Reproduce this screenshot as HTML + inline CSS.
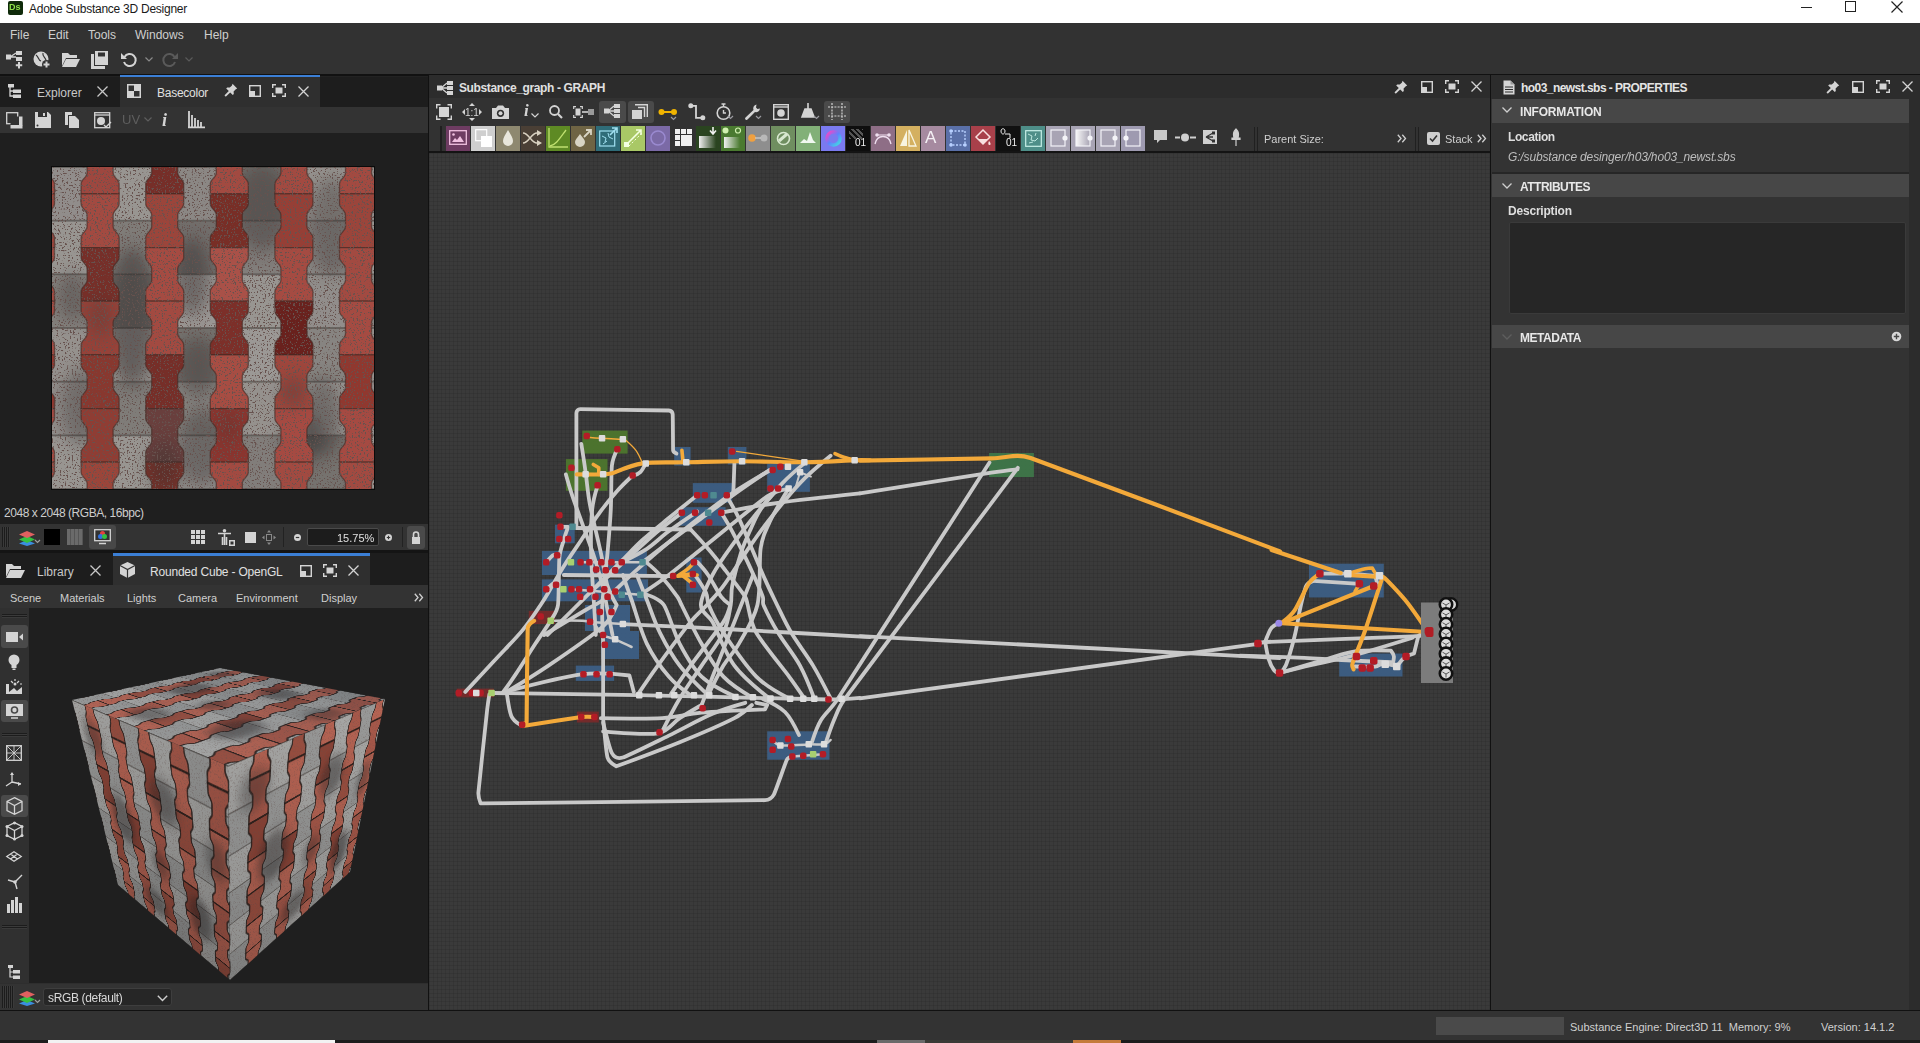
<!DOCTYPE html>
<html><head><meta charset="utf-8">
<style>
*{margin:0;padding:0;box-sizing:border-box}
html,body{width:1920px;height:1043px;overflow:hidden;background:#2e2e2e;font-family:"Liberation Sans",sans-serif;color:#d2d2d2}
.a{position:absolute}
.t{position:absolute;white-space:nowrap;font-size:12px;line-height:14px}
svg{position:absolute;overflow:visible}
</style></head><body>
<svg width="0" height="0" style="position:absolute;left:0;top:0"><defs>
<filter id="spk" x="0" y="0" width="100%" height="100%"><feTurbulence type="fractalNoise" baseFrequency="0.6" numOctaves="2" seed="3" result="n"/><feColorMatrix in="n" type="matrix" values="0 0 0 0 0.16  0 0 0 0 0.1  0 0 0 0 0.09  -11 0 0 0 4.5" result="m"/><feGaussianBlur in="m" stdDeviation="0.55"/></filter>
<filter id="spk2" x="0" y="0" width="100%" height="100%"><feTurbulence type="fractalNoise" baseFrequency="0.85" numOctaves="2" seed="8" result="n"/><feColorMatrix in="n" type="matrix" values="0 0 0 0 1  0 0 0 0 0.9  0 0 0 0 0.85  9 0 0 0 -5.2" result="m"/><feGaussianBlur in="m" stdDeviation="0.4"/></filter>
<filter id="blur8" x="-50%" y="-50%" width="200%" height="200%"><feGaussianBlur stdDeviation="8"/></filter>
<g id="texg"><rect x="-16.5" y="0.0" width="64.6" height="54.2" fill="#9e9a97"/>
<rect x="-16.5" y="53.7" width="64.6" height="54.2" fill="#a5a29e"/>
<rect x="-16.5" y="107.3" width="64.6" height="54.2" fill="#908c88"/>
<rect x="-16.5" y="161.0" width="64.6" height="54.2" fill="#a29e9a"/>
<rect x="-16.5" y="214.7" width="64.6" height="54.2" fill="#9e9a97"/>
<rect x="-16.5" y="268.4" width="64.6" height="54.2" fill="#a5a29e"/>
<rect x="-16.5" y="322.0" width="64.6" height="54.2" fill="#9e9a97"/>
<rect x="48.1" y="0.0" width="64.6" height="54.2" fill="#a5a29e"/>
<rect x="48.1" y="53.7" width="64.6" height="54.2" fill="#8a8783"/>
<rect x="48.1" y="107.3" width="64.6" height="54.2" fill="#7e7a76"/>
<rect x="48.1" y="161.0" width="64.6" height="54.2" fill="#a29e9a"/>
<rect x="48.1" y="214.7" width="64.6" height="54.2" fill="#8a8783"/>
<rect x="48.1" y="268.4" width="64.6" height="54.2" fill="#a5a29e"/>
<rect x="48.1" y="322.0" width="64.6" height="54.2" fill="#a5a29e"/>
<rect x="112.7" y="0.0" width="64.6" height="54.2" fill="#979390"/>
<rect x="112.7" y="53.7" width="64.6" height="54.2" fill="#7c7875"/>
<rect x="112.7" y="107.3" width="64.6" height="54.2" fill="#a9a5a2"/>
<rect x="112.7" y="161.0" width="64.6" height="54.2" fill="#7f7c78"/>
<rect x="112.7" y="214.7" width="64.6" height="54.2" fill="#93908c"/>
<rect x="112.7" y="268.4" width="64.6" height="54.2" fill="#9e9a97"/>
<rect x="112.7" y="322.0" width="64.6" height="54.2" fill="#979390"/>
<rect x="177.3" y="0.0" width="64.6" height="54.2" fill="#7f7c78"/>
<rect x="177.3" y="53.7" width="64.6" height="54.2" fill="#8c8885"/>
<rect x="177.3" y="107.3" width="64.6" height="54.2" fill="#a5a29e"/>
<rect x="177.3" y="161.0" width="64.6" height="54.2" fill="#a9a5a2"/>
<rect x="177.3" y="214.7" width="64.6" height="54.2" fill="#a29e9a"/>
<rect x="177.3" y="268.4" width="64.6" height="54.2" fill="#8c8885"/>
<rect x="177.3" y="322.0" width="64.6" height="54.2" fill="#7f7c78"/>
<rect x="241.9" y="0.0" width="64.6" height="54.2" fill="#a29e9a"/>
<rect x="241.9" y="53.7" width="64.6" height="54.2" fill="#979390"/>
<rect x="241.9" y="107.3" width="64.6" height="54.2" fill="#9e9a97"/>
<rect x="241.9" y="161.0" width="64.6" height="54.2" fill="#93908c"/>
<rect x="241.9" y="214.7" width="64.6" height="54.2" fill="#a5a29e"/>
<rect x="241.9" y="268.4" width="64.6" height="54.2" fill="#7f7c78"/>
<rect x="241.9" y="322.0" width="64.6" height="54.2" fill="#a29e9a"/>
<rect x="306.5" y="0.0" width="64.6" height="54.2" fill="#9e9a97"/>
<rect x="306.5" y="53.7" width="64.6" height="54.2" fill="#a5a29e"/>
<rect x="306.5" y="107.3" width="64.6" height="54.2" fill="#908c88"/>
<rect x="306.5" y="161.0" width="64.6" height="54.2" fill="#a29e9a"/>
<rect x="306.5" y="214.7" width="64.6" height="54.2" fill="#9e9a97"/>
<rect x="306.5" y="268.4" width="64.6" height="54.2" fill="#a5a29e"/>
<rect x="306.5" y="322.0" width="64.6" height="54.2" fill="#9e9a97"/>
<rect x="0" y="-0.9" width="322" height="1.8" fill="#5e5a56" opacity="0.75"/>
<rect x="0" y="52.8" width="322" height="1.8" fill="#5e5a56" opacity="0.75"/>
<rect x="0" y="106.4" width="322" height="1.8" fill="#5e5a56" opacity="0.75"/>
<rect x="0" y="160.1" width="322" height="1.8" fill="#5e5a56" opacity="0.75"/>
<rect x="0" y="213.8" width="322" height="1.8" fill="#5e5a56" opacity="0.75"/>
<rect x="0" y="267.5" width="322" height="1.8" fill="#5e5a56" opacity="0.75"/>
<rect x="0" y="321.1" width="322" height="1.8" fill="#5e5a56" opacity="0.75"/>
<ellipse cx="80" cy="150" rx="25" ry="70" fill="#2a2826" opacity="0.45" filter="url(#blur8)"/>
<ellipse cx="140" cy="110" rx="18" ry="40" fill="#2a2826" opacity="0.4" filter="url(#blur8)"/>
<ellipse cx="210" cy="40" rx="30" ry="45" fill="#2a2826" opacity="0.35" filter="url(#blur8)"/>
<ellipse cx="146" cy="200" rx="22" ry="30" fill="#2a2826" opacity="0.35" filter="url(#blur8)"/>
<ellipse cx="270" cy="250" rx="20" ry="40" fill="#2a2826" opacity="0.35" filter="url(#blur8)"/>
<ellipse cx="30" cy="240" rx="22" ry="40" fill="#2a2826" opacity="0.3" filter="url(#blur8)"/>
<ellipse cx="150" cy="280" rx="25" ry="40" fill="#2a2826" opacity="0.35" filter="url(#blur8)"/>
<ellipse cx="280" cy="60" rx="25" ry="50" fill="#2a2826" opacity="0.3" filter="url(#blur8)"/>
<ellipse cx="250" cy="270" rx="20" ry="25" fill="#2a2826" opacity="0.4" filter="url(#blur8)"/>
<ellipse cx="20" cy="130" rx="15" ry="25" fill="#2a2826" opacity="0.3" filter="url(#blur8)"/>
<polygon points="2.5,-26.8 2.5,-16.8 2.1,-14.9 1.0,-13.1 -0.5,-11.3 -2.0,-9.4 -3.1,-7.6 -3.5,-5.8 -3.5,5.9 -3.1,7.7 -2.0,9.6 -0.5,11.4 1.0,13.2 2.1,15.1 2.5,16.9 2.5,26.9 -35.5,26.9 -35.5,16.9 -35.1,15.1 -34.0,13.2 -32.5,11.4 -31.0,9.6 -29.9,7.7 -29.5,5.9 -29.5,-5.8 -29.9,-7.6 -31.0,-9.4 -32.5,-11.3 -34.0,-13.1 -35.1,-14.9 -35.5,-16.8 -35.5,-26.8" fill="#b05147" stroke="#4a2e28" stroke-width="1.3" stroke-opacity="0.65"/>
<polygon points="2.5,26.9 2.5,36.9 2.1,38.7 1.0,40.6 -0.5,42.4 -2.0,44.2 -3.1,46.1 -3.5,47.9 -3.5,59.6 -3.1,61.4 -2.0,63.2 -0.5,65.1 1.0,66.9 2.1,68.7 2.5,70.6 2.5,80.6 -35.5,80.6 -35.5,70.6 -35.1,68.7 -34.0,66.9 -32.5,65.1 -31.0,63.2 -29.9,61.4 -29.5,59.6 -29.5,47.9 -29.9,46.1 -31.0,44.2 -32.5,42.4 -34.0,40.6 -35.1,38.7 -35.5,36.9 -35.5,26.9" fill="#a94b41" stroke="#4a2e28" stroke-width="1.3" stroke-opacity="0.65"/>
<polygon points="2.5,80.6 2.5,90.6 2.1,92.4 1.0,94.2 -0.5,96.1 -2.0,97.9 -3.1,99.7 -3.5,101.6 -3.5,113.2 -3.1,115.1 -2.0,116.9 -0.5,118.7 1.0,120.6 2.1,122.4 2.5,124.2 2.5,134.2 -35.5,134.2 -35.5,124.2 -35.1,122.4 -34.0,120.6 -32.5,118.7 -31.0,116.9 -29.9,115.1 -29.5,113.2 -29.5,101.6 -29.9,99.7 -31.0,97.9 -32.5,96.1 -34.0,94.2 -35.1,92.4 -35.5,90.6 -35.5,80.6" fill="#b05147" stroke="#4a2e28" stroke-width="1.3" stroke-opacity="0.65"/>
<polygon points="2.5,134.2 2.5,144.2 2.1,146.1 1.0,147.9 -0.5,149.7 -2.0,151.6 -3.1,153.4 -3.5,155.2 -3.5,166.9 -3.1,168.7 -2.0,170.6 -0.5,172.4 1.0,174.2 2.1,176.1 2.5,177.9 2.5,187.9 -35.5,187.9 -35.5,177.9 -35.1,176.1 -34.0,174.2 -32.5,172.4 -31.0,170.6 -29.9,168.7 -29.5,166.9 -29.5,155.2 -29.9,153.4 -31.0,151.6 -32.5,149.7 -34.0,147.9 -35.1,146.1 -35.5,144.2 -35.5,134.2" fill="#b45248" stroke="#4a2e28" stroke-width="1.3" stroke-opacity="0.65"/>
<polygon points="2.5,187.9 2.5,197.9 2.1,199.7 1.0,201.6 -0.5,203.4 -2.0,205.2 -3.1,207.1 -3.5,208.9 -3.5,220.6 -3.1,222.4 -2.0,224.2 -0.5,226.1 1.0,227.9 2.1,229.7 2.5,231.6 2.5,241.6 -35.5,241.6 -35.5,231.6 -35.1,229.7 -34.0,227.9 -32.5,226.1 -31.0,224.2 -29.9,222.4 -29.5,220.6 -29.5,208.9 -29.9,207.1 -31.0,205.2 -32.5,203.4 -34.0,201.6 -35.1,199.7 -35.5,197.9 -35.5,187.9" fill="#9d3d34" stroke="#4a2e28" stroke-width="1.3" stroke-opacity="0.65"/>
<polygon points="2.5,241.6 2.5,251.6 2.1,253.4 1.0,255.2 -0.5,257.1 -2.0,258.9 -3.1,260.7 -3.5,262.6 -3.5,274.2 -3.1,276.1 -2.0,277.9 -0.5,279.8 1.0,281.6 2.1,283.4 2.5,285.2 2.5,295.2 -35.5,295.2 -35.5,285.2 -35.1,283.4 -34.0,281.6 -32.5,279.8 -31.0,277.9 -29.9,276.1 -29.5,274.2 -29.5,262.6 -29.9,260.7 -31.0,258.9 -32.5,257.1 -34.0,255.2 -35.1,253.4 -35.5,251.6 -35.5,241.6" fill="#b45148" stroke="#4a2e28" stroke-width="1.3" stroke-opacity="0.65"/>
<polygon points="2.5,295.2 2.5,305.2 2.1,307.1 1.0,308.9 -0.5,310.8 -2.0,312.6 -3.1,314.4 -3.5,316.2 -3.5,327.9 -3.1,329.8 -2.0,331.6 -0.5,333.4 1.0,335.3 2.1,337.1 2.5,338.9 2.5,348.9 -35.5,348.9 -35.5,338.9 -35.1,337.1 -34.0,335.3 -32.5,333.4 -31.0,331.6 -29.9,329.8 -29.5,327.9 -29.5,316.2 -29.9,314.4 -31.0,312.6 -32.5,310.8 -34.0,308.9 -35.1,307.1 -35.5,305.2 -35.5,295.2" fill="#b05147" stroke="#4a2e28" stroke-width="1.3" stroke-opacity="0.65"/>
<polygon points="2.5,348.9 2.5,358.9 2.1,360.8 1.0,362.6 -0.5,364.4 -2.0,366.3 -3.1,368.1 -3.5,369.9 -3.5,381.6 -3.1,383.4 -2.0,385.3 -0.5,387.1 1.0,388.9 2.1,390.8 2.5,392.6 2.5,402.6 -35.5,402.6 -35.5,392.6 -35.1,390.8 -34.0,388.9 -32.5,387.1 -31.0,385.3 -29.9,383.4 -29.5,381.6 -29.5,369.9 -29.9,368.1 -31.0,366.3 -32.5,364.4 -34.0,362.6 -35.1,360.8 -35.5,358.9 -35.5,348.9" fill="#b05147" stroke="#4a2e28" stroke-width="1.3" stroke-opacity="0.65"/>
<polygon points="67.1,-26.8 67.1,-16.8 66.7,-14.9 65.6,-13.1 64.1,-11.3 62.6,-9.4 61.5,-7.6 61.1,-5.8 61.1,5.9 61.5,7.7 62.6,9.6 64.1,11.4 65.6,13.2 66.7,15.1 67.1,16.9 67.1,26.9 29.1,26.9 29.1,16.9 29.5,15.1 30.6,13.2 32.1,11.4 33.6,9.6 34.7,7.7 35.1,5.9 35.1,-5.8 34.7,-7.6 33.6,-9.4 32.1,-11.3 30.6,-13.1 29.5,-14.9 29.1,-16.8 29.1,-26.8" fill="#ac4e45" stroke="#4a2e28" stroke-width="1.3" stroke-opacity="0.65"/>
<polygon points="67.1,26.9 67.1,36.9 66.7,38.7 65.6,40.6 64.1,42.4 62.6,44.2 61.5,46.1 61.1,47.9 61.1,59.6 61.5,61.4 62.6,63.2 64.1,65.1 65.6,66.9 66.7,68.7 67.1,70.6 67.1,80.6 29.1,80.6 29.1,70.6 29.5,68.7 30.6,66.9 32.1,65.1 33.6,63.2 34.7,61.4 35.1,59.6 35.1,47.9 34.7,46.1 33.6,44.2 32.1,42.4 30.6,40.6 29.5,38.7 29.1,36.9 29.1,26.9" fill="#b05147" stroke="#4a2e28" stroke-width="1.3" stroke-opacity="0.65"/>
<polygon points="67.1,80.6 67.1,90.6 66.7,92.4 65.6,94.2 64.1,96.1 62.6,97.9 61.5,99.7 61.1,101.6 61.1,113.2 61.5,115.1 62.6,116.9 64.1,118.7 65.6,120.6 66.7,122.4 67.1,124.2 67.1,134.2 29.1,134.2 29.1,124.2 29.5,122.4 30.6,120.6 32.1,118.7 33.6,116.9 34.7,115.1 35.1,113.2 35.1,101.6 34.7,99.7 33.6,97.9 32.1,96.1 30.6,94.2 29.5,92.4 29.1,90.6 29.1,80.6" fill="#81342d" stroke="#4a2e28" stroke-width="1.3" stroke-opacity="0.65"/>
<polygon points="67.1,134.2 67.1,144.2 66.7,146.1 65.6,147.9 64.1,149.7 62.6,151.6 61.5,153.4 61.1,155.2 61.1,166.9 61.5,168.7 62.6,170.6 64.1,172.4 65.6,174.2 66.7,176.1 67.1,177.9 67.1,187.9 29.1,187.9 29.1,177.9 29.5,176.1 30.6,174.2 32.1,172.4 33.6,170.6 34.7,168.7 35.1,166.9 35.1,155.2 34.7,153.4 33.6,151.6 32.1,149.7 30.6,147.9 29.5,146.1 29.1,144.2 29.1,134.2" fill="#a3483e" stroke="#4a2e28" stroke-width="1.3" stroke-opacity="0.65"/>
<polygon points="67.1,187.9 67.1,197.9 66.7,199.7 65.6,201.6 64.1,203.4 62.6,205.2 61.5,207.1 61.1,208.9 61.1,220.6 61.5,222.4 62.6,224.2 64.1,226.1 65.6,227.9 66.7,229.7 67.1,231.6 67.1,241.6 29.1,241.6 29.1,231.6 29.5,229.7 30.6,227.9 32.1,226.1 33.6,224.2 34.7,222.4 35.1,220.6 35.1,208.9 34.7,207.1 33.6,205.2 32.1,203.4 30.6,201.6 29.5,199.7 29.1,197.9 29.1,187.9" fill="#943d34" stroke="#4a2e28" stroke-width="1.3" stroke-opacity="0.65"/>
<polygon points="67.1,241.6 67.1,251.6 66.7,253.4 65.6,255.2 64.1,257.1 62.6,258.9 61.5,260.7 61.1,262.6 61.1,274.2 61.5,276.1 62.6,277.9 64.1,279.8 65.6,281.6 66.7,283.4 67.1,285.2 67.1,295.2 29.1,295.2 29.1,285.2 29.5,283.4 30.6,281.6 32.1,279.8 33.6,277.9 34.7,276.1 35.1,274.2 35.1,262.6 34.7,260.7 33.6,258.9 32.1,257.1 30.6,255.2 29.5,253.4 29.1,251.6 29.1,241.6" fill="#9c4339" stroke="#4a2e28" stroke-width="1.3" stroke-opacity="0.65"/>
<polygon points="67.1,295.2 67.1,305.2 66.7,307.1 65.6,308.9 64.1,310.8 62.6,312.6 61.5,314.4 61.1,316.2 61.1,327.9 61.5,329.8 62.6,331.6 64.1,333.4 65.6,335.3 66.7,337.1 67.1,338.9 67.1,348.9 29.1,348.9 29.1,338.9 29.5,337.1 30.6,335.3 32.1,333.4 33.6,331.6 34.7,329.8 35.1,327.9 35.1,316.2 34.7,314.4 33.6,312.6 32.1,310.8 30.6,308.9 29.5,307.1 29.1,305.2 29.1,295.2" fill="#a94b3f" stroke="#4a2e28" stroke-width="1.3" stroke-opacity="0.65"/>
<polygon points="67.1,348.9 67.1,358.9 66.7,360.8 65.6,362.6 64.1,364.4 62.6,366.3 61.5,368.1 61.1,369.9 61.1,381.6 61.5,383.4 62.6,385.3 64.1,387.1 65.6,388.9 66.7,390.8 67.1,392.6 67.1,402.6 29.1,402.6 29.1,392.6 29.5,390.8 30.6,388.9 32.1,387.1 33.6,385.3 34.7,383.4 35.1,381.6 35.1,369.9 34.7,368.1 33.6,366.3 32.1,364.4 30.6,362.6 29.5,360.8 29.1,358.9 29.1,348.9" fill="#ac4e45" stroke="#4a2e28" stroke-width="1.3" stroke-opacity="0.65"/>
<polygon points="131.7,-26.8 131.7,-16.8 131.3,-14.9 130.2,-13.1 128.7,-11.3 127.2,-9.4 126.1,-7.6 125.7,-5.8 125.7,5.9 126.1,7.7 127.2,9.6 128.7,11.4 130.2,13.2 131.3,15.1 131.7,16.9 131.7,26.9 93.7,26.9 93.7,16.9 94.1,15.1 95.2,13.2 96.7,11.4 98.2,9.6 99.3,7.7 99.7,5.9 99.7,-5.8 99.3,-7.6 98.2,-9.4 96.7,-11.3 95.2,-13.1 94.1,-14.9 93.7,-16.8 93.7,-26.8" fill="#81322c" stroke="#4a2e28" stroke-width="1.3" stroke-opacity="0.65"/>
<polygon points="131.7,26.9 131.7,36.9 131.3,38.7 130.2,40.6 128.7,42.4 127.2,44.2 126.1,46.1 125.7,47.9 125.7,59.6 126.1,61.4 127.2,63.2 128.7,65.1 130.2,66.9 131.3,68.7 131.7,70.6 131.7,80.6 93.7,80.6 93.7,70.6 94.1,68.7 95.2,66.9 96.7,65.1 98.2,63.2 99.3,61.4 99.7,59.6 99.7,47.9 99.3,46.1 98.2,44.2 96.7,42.4 95.2,40.6 94.1,38.7 93.7,36.9 93.7,26.9" fill="#a94b41" stroke="#4a2e28" stroke-width="1.3" stroke-opacity="0.65"/>
<polygon points="131.7,80.6 131.7,90.6 131.3,92.4 130.2,94.2 128.7,96.1 127.2,97.9 126.1,99.7 125.7,101.6 125.7,113.2 126.1,115.1 127.2,116.9 128.7,118.7 130.2,120.6 131.3,122.4 131.7,124.2 131.7,134.2 93.7,134.2 93.7,124.2 94.1,122.4 95.2,120.6 96.7,118.7 98.2,116.9 99.3,115.1 99.7,113.2 99.7,101.6 99.3,99.7 98.2,97.9 96.7,96.1 95.2,94.2 94.1,92.4 93.7,90.6 93.7,80.6" fill="#b45248" stroke="#4a2e28" stroke-width="1.3" stroke-opacity="0.65"/>
<polygon points="131.7,134.2 131.7,144.2 131.3,146.1 130.2,147.9 128.7,149.7 127.2,151.6 126.1,153.4 125.7,155.2 125.7,166.9 126.1,168.7 127.2,170.6 128.7,172.4 130.2,174.2 131.3,176.1 131.7,177.9 131.7,187.9 93.7,187.9 93.7,177.9 94.1,176.1 95.2,174.2 96.7,172.4 98.2,170.6 99.3,168.7 99.7,166.9 99.7,155.2 99.3,153.4 98.2,151.6 96.7,149.7 95.2,147.9 94.1,146.1 93.7,144.2 93.7,134.2" fill="#b05147" stroke="#4a2e28" stroke-width="1.3" stroke-opacity="0.65"/>
<polygon points="131.7,187.9 131.7,197.9 131.3,199.7 130.2,201.6 128.7,203.4 127.2,205.2 126.1,207.1 125.7,208.9 125.7,220.6 126.1,222.4 127.2,224.2 128.7,226.1 130.2,227.9 131.3,229.7 131.7,231.6 131.7,241.6 93.7,241.6 93.7,231.6 94.1,229.7 95.2,227.9 96.7,226.1 98.2,224.2 99.3,222.4 99.7,220.6 99.7,208.9 99.3,207.1 98.2,205.2 96.7,203.4 95.2,201.6 94.1,199.7 93.7,197.9 93.7,187.9" fill="#81322c" stroke="#4a2e28" stroke-width="1.3" stroke-opacity="0.65"/>
<polygon points="131.7,241.6 131.7,251.6 131.3,253.4 130.2,255.2 128.7,257.1 127.2,258.9 126.1,260.7 125.7,262.6 125.7,274.2 126.1,276.1 127.2,277.9 128.7,279.8 130.2,281.6 131.3,283.4 131.7,285.2 131.7,295.2 93.7,295.2 93.7,285.2 94.1,283.4 95.2,281.6 96.7,279.8 98.2,277.9 99.3,276.1 99.7,274.2 99.7,262.6 99.3,260.7 98.2,258.9 96.7,257.1 95.2,255.2 94.1,253.4 93.7,251.6 93.7,241.6" fill="#724543" stroke="#4a2e28" stroke-width="1.3" stroke-opacity="0.65"/>
<polygon points="131.7,295.2 131.7,305.2 131.3,307.1 130.2,308.9 128.7,310.8 127.2,312.6 126.1,314.4 125.7,316.2 125.7,327.9 126.1,329.8 127.2,331.6 128.7,333.4 130.2,335.3 131.3,337.1 131.7,338.9 131.7,348.9 93.7,348.9 93.7,338.9 94.1,337.1 95.2,335.3 96.7,333.4 98.2,331.6 99.3,329.8 99.7,327.9 99.7,316.2 99.3,314.4 98.2,312.6 96.7,310.8 95.2,308.9 94.1,307.1 93.7,305.2 93.7,295.2" fill="#85362d" stroke="#4a2e28" stroke-width="1.3" stroke-opacity="0.65"/>
<polygon points="131.7,348.9 131.7,358.9 131.3,360.8 130.2,362.6 128.7,364.4 127.2,366.3 126.1,368.1 125.7,369.9 125.7,381.6 126.1,383.4 127.2,385.3 128.7,387.1 130.2,388.9 131.3,390.8 131.7,392.6 131.7,402.6 93.7,402.6 93.7,392.6 94.1,390.8 95.2,388.9 96.7,387.1 98.2,385.3 99.3,383.4 99.7,381.6 99.7,369.9 99.3,368.1 98.2,366.3 96.7,364.4 95.2,362.6 94.1,360.8 93.7,358.9 93.7,348.9" fill="#81322c" stroke="#4a2e28" stroke-width="1.3" stroke-opacity="0.65"/>
<polygon points="196.3,-26.8 196.3,-16.8 195.9,-14.9 194.8,-13.1 193.3,-11.3 191.8,-9.4 190.7,-7.6 190.3,-5.8 190.3,5.9 190.7,7.7 191.8,9.6 193.3,11.4 194.8,13.2 195.9,15.1 196.3,16.9 196.3,26.9 158.3,26.9 158.3,16.9 158.7,15.1 159.8,13.2 161.3,11.4 162.8,9.6 163.9,7.7 164.3,5.9 164.3,-5.8 163.9,-7.6 162.8,-9.4 161.3,-11.3 159.8,-13.1 158.7,-14.9 158.3,-16.8 158.3,-26.8" fill="#b05147" stroke="#4a2e28" stroke-width="1.3" stroke-opacity="0.65"/>
<polygon points="196.3,26.9 196.3,36.9 195.9,38.7 194.8,40.6 193.3,42.4 191.8,44.2 190.7,46.1 190.3,47.9 190.3,59.6 190.7,61.4 191.8,63.2 193.3,65.1 194.8,66.9 195.9,68.7 196.3,70.6 196.3,80.6 158.3,80.6 158.3,70.6 158.7,68.7 159.8,66.9 161.3,65.1 162.8,63.2 163.9,61.4 164.3,59.6 164.3,47.9 163.9,46.1 162.8,44.2 161.3,42.4 159.8,40.6 158.7,38.7 158.3,36.9 158.3,26.9" fill="#83322a" stroke="#4a2e28" stroke-width="1.3" stroke-opacity="0.65"/>
<polygon points="196.3,80.6 196.3,90.6 195.9,92.4 194.8,94.2 193.3,96.1 191.8,97.9 190.7,99.7 190.3,101.6 190.3,113.2 190.7,115.1 191.8,116.9 193.3,118.7 194.8,120.6 195.9,122.4 196.3,124.2 196.3,134.2 158.3,134.2 158.3,124.2 158.7,122.4 159.8,120.6 161.3,118.7 162.8,116.9 163.9,115.1 164.3,113.2 164.3,101.6 163.9,99.7 162.8,97.9 161.3,96.1 159.8,94.2 158.7,92.4 158.3,90.6 158.3,80.6" fill="#b8584f" stroke="#4a2e28" stroke-width="1.3" stroke-opacity="0.65"/>
<polygon points="196.3,134.2 196.3,144.2 195.9,146.1 194.8,147.9 193.3,149.7 191.8,151.6 190.7,153.4 190.3,155.2 190.3,166.9 190.7,168.7 191.8,170.6 193.3,172.4 194.8,174.2 195.9,176.1 196.3,177.9 196.3,187.9 158.3,187.9 158.3,177.9 158.7,176.1 159.8,174.2 161.3,172.4 162.8,170.6 163.9,168.7 164.3,166.9 164.3,155.2 163.9,153.4 162.8,151.6 161.3,149.7 159.8,147.9 158.7,146.1 158.3,144.2 158.3,134.2" fill="#87342d" stroke="#4a2e28" stroke-width="1.3" stroke-opacity="0.65"/>
<polygon points="196.3,187.9 196.3,197.9 195.9,199.7 194.8,201.6 193.3,203.4 191.8,205.2 190.7,207.1 190.3,208.9 190.3,220.6 190.7,222.4 191.8,224.2 193.3,226.1 194.8,227.9 195.9,229.7 196.3,231.6 196.3,241.6 158.3,241.6 158.3,231.6 158.7,229.7 159.8,227.9 161.3,226.1 162.8,224.2 163.9,222.4 164.3,220.6 164.3,208.9 163.9,207.1 162.8,205.2 161.3,203.4 159.8,201.6 158.7,199.7 158.3,197.9 158.3,187.9" fill="#b65449" stroke="#4a2e28" stroke-width="1.3" stroke-opacity="0.65"/>
<polygon points="196.3,241.6 196.3,251.6 195.9,253.4 194.8,255.2 193.3,257.1 191.8,258.9 190.7,260.7 190.3,262.6 190.3,274.2 190.7,276.1 191.8,277.9 193.3,279.8 194.8,281.6 195.9,283.4 196.3,285.2 196.3,295.2 158.3,295.2 158.3,285.2 158.7,283.4 159.8,281.6 161.3,279.8 162.8,277.9 163.9,276.1 164.3,274.2 164.3,262.6 163.9,260.7 162.8,258.9 161.3,257.1 159.8,255.2 158.7,253.4 158.3,251.6 158.3,241.6" fill="#963a33" stroke="#4a2e28" stroke-width="1.3" stroke-opacity="0.65"/>
<polygon points="196.3,295.2 196.3,305.2 195.9,307.1 194.8,308.9 193.3,310.8 191.8,312.6 190.7,314.4 190.3,316.2 190.3,327.9 190.7,329.8 191.8,331.6 193.3,333.4 194.8,335.3 195.9,337.1 196.3,338.9 196.3,348.9 158.3,348.9 158.3,338.9 158.7,337.1 159.8,335.3 161.3,333.4 162.8,331.6 163.9,329.8 164.3,327.9 164.3,316.2 163.9,314.4 162.8,312.6 161.3,310.8 159.8,308.9 158.7,307.1 158.3,305.2 158.3,295.2" fill="#b05147" stroke="#4a2e28" stroke-width="1.3" stroke-opacity="0.65"/>
<polygon points="196.3,348.9 196.3,358.9 195.9,360.8 194.8,362.6 193.3,364.4 191.8,366.3 190.7,368.1 190.3,369.9 190.3,381.6 190.7,383.4 191.8,385.3 193.3,387.1 194.8,388.9 195.9,390.8 196.3,392.6 196.3,402.6 158.3,402.6 158.3,392.6 158.7,390.8 159.8,388.9 161.3,387.1 162.8,385.3 163.9,383.4 164.3,381.6 164.3,369.9 163.9,368.1 162.8,366.3 161.3,364.4 159.8,362.6 158.7,360.8 158.3,358.9 158.3,348.9" fill="#b05147" stroke="#4a2e28" stroke-width="1.3" stroke-opacity="0.65"/>
<polygon points="260.9,-26.8 260.9,-16.8 260.5,-14.9 259.4,-13.1 257.9,-11.3 256.4,-9.4 255.3,-7.6 254.9,-5.8 254.9,5.9 255.3,7.7 256.4,9.6 257.9,11.4 259.4,13.2 260.5,15.1 260.9,16.9 260.9,26.9 222.9,26.9 222.9,16.9 223.3,15.1 224.4,13.2 225.9,11.4 227.4,9.6 228.5,7.7 228.9,5.9 228.9,-5.8 228.5,-7.6 227.4,-9.4 225.9,-11.3 224.4,-13.1 223.3,-14.9 222.9,-16.8 222.9,-26.8" fill="#b05147" stroke="#4a2e28" stroke-width="1.3" stroke-opacity="0.65"/>
<polygon points="260.9,26.9 260.9,36.9 260.5,38.7 259.4,40.6 257.9,42.4 256.4,44.2 255.3,46.1 254.9,47.9 254.9,59.6 255.3,61.4 256.4,63.2 257.9,65.1 259.4,66.9 260.5,68.7 260.9,70.6 260.9,80.6 222.9,80.6 222.9,70.6 223.3,68.7 224.4,66.9 225.9,65.1 227.4,63.2 228.5,61.4 228.9,59.6 228.9,47.9 228.5,46.1 227.4,44.2 225.9,42.4 224.4,40.6 223.3,38.7 222.9,36.9 222.9,26.9" fill="#a3453b" stroke="#4a2e28" stroke-width="1.3" stroke-opacity="0.65"/>
<polygon points="260.9,80.6 260.9,90.6 260.5,92.4 259.4,94.2 257.9,96.1 256.4,97.9 255.3,99.7 254.9,101.6 254.9,113.2 255.3,115.1 256.4,116.9 257.9,118.7 259.4,120.6 260.5,122.4 260.9,124.2 260.9,134.2 222.9,134.2 222.9,124.2 223.3,122.4 224.4,120.6 225.9,118.7 227.4,116.9 228.5,115.1 228.9,113.2 228.9,101.6 228.5,99.7 227.4,97.9 225.9,96.1 224.4,94.2 223.3,92.4 222.9,90.6 222.9,80.6" fill="#b45248" stroke="#4a2e28" stroke-width="1.3" stroke-opacity="0.65"/>
<polygon points="260.9,134.2 260.9,144.2 260.5,146.1 259.4,147.9 257.9,149.7 256.4,151.6 255.3,153.4 254.9,155.2 254.9,166.9 255.3,168.7 256.4,170.6 257.9,172.4 259.4,174.2 260.5,176.1 260.9,177.9 260.9,187.9 222.9,187.9 222.9,177.9 223.3,176.1 224.4,174.2 225.9,172.4 227.4,170.6 228.5,168.7 228.9,166.9 228.9,155.2 228.5,153.4 227.4,151.6 225.9,149.7 224.4,147.9 223.3,146.1 222.9,144.2 222.9,134.2" fill="#722420" stroke="#4a2e28" stroke-width="1.3" stroke-opacity="0.65"/>
<polygon points="260.9,187.9 260.9,197.9 260.5,199.7 259.4,201.6 257.9,203.4 256.4,205.2 255.3,207.1 254.9,208.9 254.9,220.6 255.3,222.4 256.4,224.2 257.9,226.1 259.4,227.9 260.5,229.7 260.9,231.6 260.9,241.6 222.9,241.6 222.9,231.6 223.3,229.7 224.4,227.9 225.9,226.1 227.4,224.2 228.5,222.4 228.9,220.6 228.9,208.9 228.5,207.1 227.4,205.2 225.9,203.4 224.4,201.6 223.3,199.7 222.9,197.9 222.9,187.9" fill="#ac4d43" stroke="#4a2e28" stroke-width="1.3" stroke-opacity="0.65"/>
<polygon points="260.9,241.6 260.9,251.6 260.5,253.4 259.4,255.2 257.9,257.1 256.4,258.9 255.3,260.7 254.9,262.6 254.9,274.2 255.3,276.1 256.4,277.9 257.9,279.8 259.4,281.6 260.5,283.4 260.9,285.2 260.9,295.2 222.9,295.2 222.9,285.2 223.3,283.4 224.4,281.6 225.9,279.8 227.4,277.9 228.5,276.1 228.9,274.2 228.9,262.6 228.5,260.7 227.4,258.9 225.9,257.1 224.4,255.2 223.3,253.4 222.9,251.6 222.9,241.6" fill="#b45148" stroke="#4a2e28" stroke-width="1.3" stroke-opacity="0.65"/>
<polygon points="260.9,295.2 260.9,305.2 260.5,307.1 259.4,308.9 257.9,310.8 256.4,312.6 255.3,314.4 254.9,316.2 254.9,327.9 255.3,329.8 256.4,331.6 257.9,333.4 259.4,335.3 260.5,337.1 260.9,338.9 260.9,348.9 222.9,348.9 222.9,338.9 223.3,337.1 224.4,335.3 225.9,333.4 227.4,331.6 228.5,329.8 228.9,327.9 228.9,316.2 228.5,314.4 227.4,312.6 225.9,310.8 224.4,308.9 223.3,307.1 222.9,305.2 222.9,295.2" fill="#b05147" stroke="#4a2e28" stroke-width="1.3" stroke-opacity="0.65"/>
<polygon points="260.9,348.9 260.9,358.9 260.5,360.8 259.4,362.6 257.9,364.4 256.4,366.3 255.3,368.1 254.9,369.9 254.9,381.6 255.3,383.4 256.4,385.3 257.9,387.1 259.4,388.9 260.5,390.8 260.9,392.6 260.9,402.6 222.9,402.6 222.9,392.6 223.3,390.8 224.4,388.9 225.9,387.1 227.4,385.3 228.5,383.4 228.9,381.6 228.9,369.9 228.5,368.1 227.4,366.3 225.9,364.4 224.4,362.6 223.3,360.8 222.9,358.9 222.9,348.9" fill="#b05147" stroke="#4a2e28" stroke-width="1.3" stroke-opacity="0.65"/>
<polygon points="325.5,-26.8 325.5,-16.8 325.1,-14.9 324.0,-13.1 322.5,-11.3 321.0,-9.4 319.9,-7.6 319.5,-5.8 319.5,5.9 319.9,7.7 321.0,9.6 322.5,11.4 324.0,13.2 325.1,15.1 325.5,16.9 325.5,26.9 287.5,26.9 287.5,16.9 287.9,15.1 289.0,13.2 290.5,11.4 292.0,9.6 293.1,7.7 293.5,5.9 293.5,-5.8 293.1,-7.6 292.0,-9.4 290.5,-11.3 289.0,-13.1 287.9,-14.9 287.5,-16.8 287.5,-26.8" fill="#b05147" stroke="#4a2e28" stroke-width="1.3" stroke-opacity="0.65"/>
<polygon points="325.5,26.9 325.5,36.9 325.1,38.7 324.0,40.6 322.5,42.4 321.0,44.2 319.9,46.1 319.5,47.9 319.5,59.6 319.9,61.4 321.0,63.2 322.5,65.1 324.0,66.9 325.1,68.7 325.5,70.6 325.5,80.6 287.5,80.6 287.5,70.6 287.9,68.7 289.0,66.9 290.5,65.1 292.0,63.2 293.1,61.4 293.5,59.6 293.5,47.9 293.1,46.1 292.0,44.2 290.5,42.4 289.0,40.6 287.9,38.7 287.5,36.9 287.5,26.9" fill="#a94b41" stroke="#4a2e28" stroke-width="1.3" stroke-opacity="0.65"/>
<polygon points="325.5,80.6 325.5,90.6 325.1,92.4 324.0,94.2 322.5,96.1 321.0,97.9 319.9,99.7 319.5,101.6 319.5,113.2 319.9,115.1 321.0,116.9 322.5,118.7 324.0,120.6 325.1,122.4 325.5,124.2 325.5,134.2 287.5,134.2 287.5,124.2 287.9,122.4 289.0,120.6 290.5,118.7 292.0,116.9 293.1,115.1 293.5,113.2 293.5,101.6 293.1,99.7 292.0,97.9 290.5,96.1 289.0,94.2 287.9,92.4 287.5,90.6 287.5,80.6" fill="#b05147" stroke="#4a2e28" stroke-width="1.3" stroke-opacity="0.65"/>
<polygon points="325.5,134.2 325.5,144.2 325.1,146.1 324.0,147.9 322.5,149.7 321.0,151.6 319.9,153.4 319.5,155.2 319.5,166.9 319.9,168.7 321.0,170.6 322.5,172.4 324.0,174.2 325.1,176.1 325.5,177.9 325.5,187.9 287.5,187.9 287.5,177.9 287.9,176.1 289.0,174.2 290.5,172.4 292.0,170.6 293.1,168.7 293.5,166.9 293.5,155.2 293.1,153.4 292.0,151.6 290.5,149.7 289.0,147.9 287.9,146.1 287.5,144.2 287.5,134.2" fill="#b45248" stroke="#4a2e28" stroke-width="1.3" stroke-opacity="0.65"/>
<polygon points="325.5,187.9 325.5,197.9 325.1,199.7 324.0,201.6 322.5,203.4 321.0,205.2 319.9,207.1 319.5,208.9 319.5,220.6 319.9,222.4 321.0,224.2 322.5,226.1 324.0,227.9 325.1,229.7 325.5,231.6 325.5,241.6 287.5,241.6 287.5,231.6 287.9,229.7 289.0,227.9 290.5,226.1 292.0,224.2 293.1,222.4 293.5,220.6 293.5,208.9 293.1,207.1 292.0,205.2 290.5,203.4 289.0,201.6 287.9,199.7 287.5,197.9 287.5,187.9" fill="#9d3d34" stroke="#4a2e28" stroke-width="1.3" stroke-opacity="0.65"/>
<polygon points="325.5,241.6 325.5,251.6 325.1,253.4 324.0,255.2 322.5,257.1 321.0,258.9 319.9,260.7 319.5,262.6 319.5,274.2 319.9,276.1 321.0,277.9 322.5,279.8 324.0,281.6 325.1,283.4 325.5,285.2 325.5,295.2 287.5,295.2 287.5,285.2 287.9,283.4 289.0,281.6 290.5,279.8 292.0,277.9 293.1,276.1 293.5,274.2 293.5,262.6 293.1,260.7 292.0,258.9 290.5,257.1 289.0,255.2 287.9,253.4 287.5,251.6 287.5,241.6" fill="#b45148" stroke="#4a2e28" stroke-width="1.3" stroke-opacity="0.65"/>
<polygon points="325.5,295.2 325.5,305.2 325.1,307.1 324.0,308.9 322.5,310.8 321.0,312.6 319.9,314.4 319.5,316.2 319.5,327.9 319.9,329.8 321.0,331.6 322.5,333.4 324.0,335.3 325.1,337.1 325.5,338.9 325.5,348.9 287.5,348.9 287.5,338.9 287.9,337.1 289.0,335.3 290.5,333.4 292.0,331.6 293.1,329.8 293.5,327.9 293.5,316.2 293.1,314.4 292.0,312.6 290.5,310.8 289.0,308.9 287.9,307.1 287.5,305.2 287.5,295.2" fill="#b05147" stroke="#4a2e28" stroke-width="1.3" stroke-opacity="0.65"/>
<polygon points="325.5,348.9 325.5,358.9 325.1,360.8 324.0,362.6 322.5,364.4 321.0,366.3 319.9,368.1 319.5,369.9 319.5,381.6 319.9,383.4 321.0,385.3 322.5,387.1 324.0,388.9 325.1,390.8 325.5,392.6 325.5,402.6 287.5,402.6 287.5,392.6 287.9,390.8 289.0,388.9 290.5,387.1 292.0,385.3 293.1,383.4 293.5,381.6 293.5,369.9 293.1,368.1 292.0,366.3 290.5,364.4 289.0,362.6 287.9,360.8 287.5,358.9 287.5,348.9" fill="#b05147" stroke="#4a2e28" stroke-width="1.3" stroke-opacity="0.65"/>
<polygon points="390.1,-26.8 390.1,-16.8 389.7,-14.9 388.6,-13.1 387.1,-11.3 385.6,-9.4 384.5,-7.6 384.1,-5.8 384.1,5.9 384.5,7.7 385.6,9.6 387.1,11.4 388.6,13.2 389.7,15.1 390.1,16.9 390.1,26.9 352.1,26.9 352.1,16.9 352.5,15.1 353.6,13.2 355.1,11.4 356.6,9.6 357.7,7.7 358.1,5.9 358.1,-5.8 357.7,-7.6 356.6,-9.4 355.1,-11.3 353.6,-13.1 352.5,-14.9 352.1,-16.8 352.1,-26.8" fill="#ac4e45" stroke="#4a2e28" stroke-width="1.3" stroke-opacity="0.65"/>
<polygon points="390.1,26.9 390.1,36.9 389.7,38.7 388.6,40.6 387.1,42.4 385.6,44.2 384.5,46.1 384.1,47.9 384.1,59.6 384.5,61.4 385.6,63.2 387.1,65.1 388.6,66.9 389.7,68.7 390.1,70.6 390.1,80.6 352.1,80.6 352.1,70.6 352.5,68.7 353.6,66.9 355.1,65.1 356.6,63.2 357.7,61.4 358.1,59.6 358.1,47.9 357.7,46.1 356.6,44.2 355.1,42.4 353.6,40.6 352.5,38.7 352.1,36.9 352.1,26.9" fill="#b05147" stroke="#4a2e28" stroke-width="1.3" stroke-opacity="0.65"/>
<polygon points="390.1,80.6 390.1,90.6 389.7,92.4 388.6,94.2 387.1,96.1 385.6,97.9 384.5,99.7 384.1,101.6 384.1,113.2 384.5,115.1 385.6,116.9 387.1,118.7 388.6,120.6 389.7,122.4 390.1,124.2 390.1,134.2 352.1,134.2 352.1,124.2 352.5,122.4 353.6,120.6 355.1,118.7 356.6,116.9 357.7,115.1 358.1,113.2 358.1,101.6 357.7,99.7 356.6,97.9 355.1,96.1 353.6,94.2 352.5,92.4 352.1,90.6 352.1,80.6" fill="#81342d" stroke="#4a2e28" stroke-width="1.3" stroke-opacity="0.65"/>
<polygon points="390.1,134.2 390.1,144.2 389.7,146.1 388.6,147.9 387.1,149.7 385.6,151.6 384.5,153.4 384.1,155.2 384.1,166.9 384.5,168.7 385.6,170.6 387.1,172.4 388.6,174.2 389.7,176.1 390.1,177.9 390.1,187.9 352.1,187.9 352.1,177.9 352.5,176.1 353.6,174.2 355.1,172.4 356.6,170.6 357.7,168.7 358.1,166.9 358.1,155.2 357.7,153.4 356.6,151.6 355.1,149.7 353.6,147.9 352.5,146.1 352.1,144.2 352.1,134.2" fill="#a3483e" stroke="#4a2e28" stroke-width="1.3" stroke-opacity="0.65"/>
<polygon points="390.1,187.9 390.1,197.9 389.7,199.7 388.6,201.6 387.1,203.4 385.6,205.2 384.5,207.1 384.1,208.9 384.1,220.6 384.5,222.4 385.6,224.2 387.1,226.1 388.6,227.9 389.7,229.7 390.1,231.6 390.1,241.6 352.1,241.6 352.1,231.6 352.5,229.7 353.6,227.9 355.1,226.1 356.6,224.2 357.7,222.4 358.1,220.6 358.1,208.9 357.7,207.1 356.6,205.2 355.1,203.4 353.6,201.6 352.5,199.7 352.1,197.9 352.1,187.9" fill="#943d34" stroke="#4a2e28" stroke-width="1.3" stroke-opacity="0.65"/>
<polygon points="390.1,241.6 390.1,251.6 389.7,253.4 388.6,255.2 387.1,257.1 385.6,258.9 384.5,260.7 384.1,262.6 384.1,274.2 384.5,276.1 385.6,277.9 387.1,279.8 388.6,281.6 389.7,283.4 390.1,285.2 390.1,295.2 352.1,295.2 352.1,285.2 352.5,283.4 353.6,281.6 355.1,279.8 356.6,277.9 357.7,276.1 358.1,274.2 358.1,262.6 357.7,260.7 356.6,258.9 355.1,257.1 353.6,255.2 352.5,253.4 352.1,251.6 352.1,241.6" fill="#9c4339" stroke="#4a2e28" stroke-width="1.3" stroke-opacity="0.65"/>
<polygon points="390.1,295.2 390.1,305.2 389.7,307.1 388.6,308.9 387.1,310.8 385.6,312.6 384.5,314.4 384.1,316.2 384.1,327.9 384.5,329.8 385.6,331.6 387.1,333.4 388.6,335.3 389.7,337.1 390.1,338.9 390.1,348.9 352.1,348.9 352.1,338.9 352.5,337.1 353.6,335.3 355.1,333.4 356.6,331.6 357.7,329.8 358.1,327.9 358.1,316.2 357.7,314.4 356.6,312.6 355.1,310.8 353.6,308.9 352.5,307.1 352.1,305.2 352.1,295.2" fill="#a94b3f" stroke="#4a2e28" stroke-width="1.3" stroke-opacity="0.65"/>
<polygon points="390.1,348.9 390.1,358.9 389.7,360.8 388.6,362.6 387.1,364.4 385.6,366.3 384.5,368.1 384.1,369.9 384.1,381.6 384.5,383.4 385.6,385.3 387.1,387.1 388.6,388.9 389.7,390.8 390.1,392.6 390.1,402.6 352.1,402.6 352.1,392.6 352.5,390.8 353.6,388.9 355.1,387.1 356.6,385.3 357.7,383.4 358.1,381.6 358.1,369.9 357.7,368.1 356.6,366.3 355.1,364.4 353.6,362.6 352.5,360.8 352.1,358.9 352.1,348.9" fill="#ac4e45" stroke="#4a2e28" stroke-width="1.3" stroke-opacity="0.65"/>
<ellipse cx="112" cy="300" rx="16" ry="25" fill="#3a3430" opacity="0.4" filter="url(#blur8)"/>
<ellipse cx="176" cy="260" rx="10" ry="15" fill="#3a3430" opacity="0.25" filter="url(#blur8)"/>
<ellipse cx="241" cy="225" rx="12" ry="15" fill="#3a3430" opacity="0.3" filter="url(#blur8)"/>
<ellipse cx="48" cy="150" rx="12" ry="20" fill="#3a3430" opacity="0.25" filter="url(#blur8)"/></g>
<g id="texl"><rect x="-16.5" y="0.0" width="64.6" height="54.2" fill="#b6b6b4"/>
<rect x="-16.5" y="53.7" width="64.6" height="54.2" fill="#a6a7a6"/>
<rect x="-16.5" y="107.3" width="64.6" height="54.2" fill="#b6b6b4"/>
<rect x="-16.5" y="161.0" width="64.6" height="54.2" fill="#a6a7a6"/>
<rect x="-16.5" y="214.7" width="64.6" height="54.2" fill="#b6b6b4"/>
<rect x="-16.5" y="268.4" width="64.6" height="54.2" fill="#a6a7a6"/>
<rect x="-16.5" y="322.0" width="64.6" height="54.2" fill="#b6b6b4"/>
<rect x="48.1" y="0.0" width="64.6" height="54.2" fill="#b6b6b4"/>
<rect x="48.1" y="53.7" width="64.6" height="54.2" fill="#a6a7a6"/>
<rect x="48.1" y="107.3" width="64.6" height="54.2" fill="#b6b6b4"/>
<rect x="48.1" y="161.0" width="64.6" height="54.2" fill="#a6a7a6"/>
<rect x="48.1" y="214.7" width="64.6" height="54.2" fill="#b6b6b4"/>
<rect x="48.1" y="268.4" width="64.6" height="54.2" fill="#a6a7a6"/>
<rect x="48.1" y="322.0" width="64.6" height="54.2" fill="#b6b6b4"/>
<rect x="112.7" y="0.0" width="64.6" height="54.2" fill="#a6a7a6"/>
<rect x="112.7" y="53.7" width="64.6" height="54.2" fill="#b6b6b4"/>
<rect x="112.7" y="107.3" width="64.6" height="54.2" fill="#a6a7a6"/>
<rect x="112.7" y="161.0" width="64.6" height="54.2" fill="#b6b6b4"/>
<rect x="112.7" y="214.7" width="64.6" height="54.2" fill="#a6a7a6"/>
<rect x="112.7" y="268.4" width="64.6" height="54.2" fill="#b6b6b4"/>
<rect x="112.7" y="322.0" width="64.6" height="54.2" fill="#a6a7a6"/>
<rect x="177.3" y="0.0" width="64.6" height="54.2" fill="#b6b6b4"/>
<rect x="177.3" y="53.7" width="64.6" height="54.2" fill="#a6a7a6"/>
<rect x="177.3" y="107.3" width="64.6" height="54.2" fill="#b6b6b4"/>
<rect x="177.3" y="161.0" width="64.6" height="54.2" fill="#a6a7a6"/>
<rect x="177.3" y="214.7" width="64.6" height="54.2" fill="#b6b6b4"/>
<rect x="177.3" y="268.4" width="64.6" height="54.2" fill="#a6a7a6"/>
<rect x="177.3" y="322.0" width="64.6" height="54.2" fill="#b6b6b4"/>
<rect x="241.9" y="0.0" width="64.6" height="54.2" fill="#a6a7a6"/>
<rect x="241.9" y="53.7" width="64.6" height="54.2" fill="#b6b6b4"/>
<rect x="241.9" y="107.3" width="64.6" height="54.2" fill="#a6a7a6"/>
<rect x="241.9" y="161.0" width="64.6" height="54.2" fill="#b6b6b4"/>
<rect x="241.9" y="214.7" width="64.6" height="54.2" fill="#a6a7a6"/>
<rect x="241.9" y="268.4" width="64.6" height="54.2" fill="#b6b6b4"/>
<rect x="241.9" y="322.0" width="64.6" height="54.2" fill="#a6a7a6"/>
<rect x="306.5" y="0.0" width="64.6" height="54.2" fill="#b6b6b4"/>
<rect x="306.5" y="53.7" width="64.6" height="54.2" fill="#a6a7a6"/>
<rect x="306.5" y="107.3" width="64.6" height="54.2" fill="#b6b6b4"/>
<rect x="306.5" y="161.0" width="64.6" height="54.2" fill="#a6a7a6"/>
<rect x="306.5" y="214.7" width="64.6" height="54.2" fill="#b6b6b4"/>
<rect x="306.5" y="268.4" width="64.6" height="54.2" fill="#a6a7a6"/>
<rect x="306.5" y="322.0" width="64.6" height="54.2" fill="#b6b6b4"/>
<rect x="0" y="-0.9" width="322" height="1.8" fill="#5e5a56" opacity="0.75"/>
<rect x="0" y="52.8" width="322" height="1.8" fill="#5e5a56" opacity="0.75"/>
<rect x="0" y="106.4" width="322" height="1.8" fill="#5e5a56" opacity="0.75"/>
<rect x="0" y="160.1" width="322" height="1.8" fill="#5e5a56" opacity="0.75"/>
<rect x="0" y="213.8" width="322" height="1.8" fill="#5e5a56" opacity="0.75"/>
<rect x="0" y="267.5" width="322" height="1.8" fill="#5e5a56" opacity="0.75"/>
<rect x="0" y="321.1" width="322" height="1.8" fill="#5e5a56" opacity="0.75"/>
<polygon points="0.0,-26.8 0.0,-16.8 -0.4,-14.9 -1.4,-13.1 -2.7,-11.3 -4.1,-9.4 -5.1,-7.6 -5.5,-5.8 -5.5,5.9 -5.1,7.7 -4.1,9.6 -2.7,11.4 -1.4,13.2 -0.4,15.1 0.0,16.9 0.0,26.9 -33.0,26.9 -33.0,16.9 -32.6,15.1 -31.6,13.2 -30.2,11.4 -28.9,9.6 -27.9,7.7 -27.5,5.9 -27.5,-5.8 -27.9,-7.6 -28.9,-9.4 -30.2,-11.3 -31.6,-13.1 -32.6,-14.9 -33.0,-16.8 -33.0,-26.8" fill="#c66c5a" stroke="#2a201c" stroke-width="2.6" stroke-opacity="0.85"/>
<polygon points="0.0,26.9 0.0,36.9 -0.4,38.7 -1.4,40.6 -2.7,42.4 -4.1,44.2 -5.1,46.1 -5.5,47.9 -5.5,59.6 -5.1,61.4 -4.1,63.2 -2.7,65.1 -1.4,66.9 -0.4,68.7 0.0,70.6 0.0,80.6 -33.0,80.6 -33.0,70.6 -32.6,68.7 -31.6,66.9 -30.2,65.1 -28.9,63.2 -27.9,61.4 -27.5,59.6 -27.5,47.9 -27.9,46.1 -28.9,44.2 -30.2,42.4 -31.6,40.6 -32.6,38.7 -33.0,36.9 -33.0,26.9" fill="#b66050" stroke="#2a201c" stroke-width="2.6" stroke-opacity="0.85"/>
<polygon points="0.0,80.6 0.0,90.6 -0.4,92.4 -1.4,94.2 -2.7,96.1 -4.1,97.9 -5.1,99.7 -5.5,101.6 -5.5,113.2 -5.1,115.1 -4.1,116.9 -2.7,118.7 -1.4,120.6 -0.4,122.4 0.0,124.2 0.0,134.2 -33.0,134.2 -33.0,124.2 -32.6,122.4 -31.6,120.6 -30.2,118.7 -28.9,116.9 -27.9,115.1 -27.5,113.2 -27.5,101.6 -27.9,99.7 -28.9,97.9 -30.2,96.1 -31.6,94.2 -32.6,92.4 -33.0,90.6 -33.0,80.6" fill="#c66c5a" stroke="#2a201c" stroke-width="2.6" stroke-opacity="0.85"/>
<polygon points="0.0,134.2 0.0,144.2 -0.4,146.1 -1.4,147.9 -2.7,149.7 -4.1,151.6 -5.1,153.4 -5.5,155.2 -5.5,166.9 -5.1,168.7 -4.1,170.6 -2.7,172.4 -1.4,174.2 -0.4,176.1 0.0,177.9 0.0,187.9 -33.0,187.9 -33.0,177.9 -32.6,176.1 -31.6,174.2 -30.2,172.4 -28.9,170.6 -27.9,168.7 -27.5,166.9 -27.5,155.2 -27.9,153.4 -28.9,151.6 -30.2,149.7 -31.6,147.9 -32.6,146.1 -33.0,144.2 -33.0,134.2" fill="#c66c5a" stroke="#2a201c" stroke-width="2.6" stroke-opacity="0.85"/>
<polygon points="0.0,187.9 0.0,197.9 -0.4,199.7 -1.4,201.6 -2.7,203.4 -4.1,205.2 -5.1,207.1 -5.5,208.9 -5.5,220.6 -5.1,222.4 -4.1,224.2 -2.7,226.1 -1.4,227.9 -0.4,229.7 0.0,231.6 0.0,241.6 -33.0,241.6 -33.0,231.6 -32.6,229.7 -31.6,227.9 -30.2,226.1 -28.9,224.2 -27.9,222.4 -27.5,220.6 -27.5,208.9 -27.9,207.1 -28.9,205.2 -30.2,203.4 -31.6,201.6 -32.6,199.7 -33.0,197.9 -33.0,187.9" fill="#b66050" stroke="#2a201c" stroke-width="2.6" stroke-opacity="0.85"/>
<polygon points="0.0,241.6 0.0,251.6 -0.4,253.4 -1.4,255.2 -2.7,257.1 -4.1,258.9 -5.1,260.7 -5.5,262.6 -5.5,274.2 -5.1,276.1 -4.1,277.9 -2.7,279.8 -1.4,281.6 -0.4,283.4 0.0,285.2 0.0,295.2 -33.0,295.2 -33.0,285.2 -32.6,283.4 -31.6,281.6 -30.2,279.8 -28.9,277.9 -27.9,276.1 -27.5,274.2 -27.5,262.6 -27.9,260.7 -28.9,258.9 -30.2,257.1 -31.6,255.2 -32.6,253.4 -33.0,251.6 -33.0,241.6" fill="#c66c5a" stroke="#2a201c" stroke-width="2.6" stroke-opacity="0.85"/>
<polygon points="0.0,295.2 0.0,305.2 -0.4,307.1 -1.4,308.9 -2.7,310.8 -4.1,312.6 -5.1,314.4 -5.5,316.2 -5.5,327.9 -5.1,329.8 -4.1,331.6 -2.7,333.4 -1.4,335.3 -0.4,337.1 0.0,338.9 0.0,348.9 -33.0,348.9 -33.0,338.9 -32.6,337.1 -31.6,335.3 -30.2,333.4 -28.9,331.6 -27.9,329.8 -27.5,327.9 -27.5,316.2 -27.9,314.4 -28.9,312.6 -30.2,310.8 -31.6,308.9 -32.6,307.1 -33.0,305.2 -33.0,295.2" fill="#a85646" stroke="#2a201c" stroke-width="2.6" stroke-opacity="0.85"/>
<polygon points="0.0,348.9 0.0,358.9 -0.4,360.8 -1.4,362.6 -2.7,364.4 -4.1,366.3 -5.1,368.1 -5.5,369.9 -5.5,381.6 -5.1,383.4 -4.1,385.3 -2.7,387.1 -1.4,388.9 -0.4,390.8 0.0,392.6 0.0,402.6 -33.0,402.6 -33.0,392.6 -32.6,390.8 -31.6,388.9 -30.2,387.1 -28.9,385.3 -27.9,383.4 -27.5,381.6 -27.5,369.9 -27.9,368.1 -28.9,366.3 -30.2,364.4 -31.6,362.6 -32.6,360.8 -33.0,358.9 -33.0,348.9" fill="#c66c5a" stroke="#2a201c" stroke-width="2.6" stroke-opacity="0.85"/>
<polygon points="64.6,-26.8 64.6,-16.8 64.2,-14.9 63.2,-13.1 61.9,-11.3 60.5,-9.4 59.5,-7.6 59.1,-5.8 59.1,5.9 59.5,7.7 60.5,9.6 61.9,11.4 63.2,13.2 64.2,15.1 64.6,16.9 64.6,26.9 31.6,26.9 31.6,16.9 32.0,15.1 33.0,13.2 34.4,11.4 35.7,9.6 36.7,7.7 37.1,5.9 37.1,-5.8 36.7,-7.6 35.7,-9.4 34.4,-11.3 33.0,-13.1 32.0,-14.9 31.6,-16.8 31.6,-26.8" fill="#c66c5a" stroke="#2a201c" stroke-width="2.6" stroke-opacity="0.85"/>
<polygon points="64.6,26.9 64.6,36.9 64.2,38.7 63.2,40.6 61.9,42.4 60.5,44.2 59.5,46.1 59.1,47.9 59.1,59.6 59.5,61.4 60.5,63.2 61.9,65.1 63.2,66.9 64.2,68.7 64.6,70.6 64.6,80.6 31.6,80.6 31.6,70.6 32.0,68.7 33.0,66.9 34.4,65.1 35.7,63.2 36.7,61.4 37.1,59.6 37.1,47.9 36.7,46.1 35.7,44.2 34.4,42.4 33.0,40.6 32.0,38.7 31.6,36.9 31.6,26.9" fill="#b66050" stroke="#2a201c" stroke-width="2.6" stroke-opacity="0.85"/>
<polygon points="64.6,80.6 64.6,90.6 64.2,92.4 63.2,94.2 61.9,96.1 60.5,97.9 59.5,99.7 59.1,101.6 59.1,113.2 59.5,115.1 60.5,116.9 61.9,118.7 63.2,120.6 64.2,122.4 64.6,124.2 64.6,134.2 31.6,134.2 31.6,124.2 32.0,122.4 33.0,120.6 34.4,118.7 35.7,116.9 36.7,115.1 37.1,113.2 37.1,101.6 36.7,99.7 35.7,97.9 34.4,96.1 33.0,94.2 32.0,92.4 31.6,90.6 31.6,80.6" fill="#984a3c" stroke="#2a201c" stroke-width="2.6" stroke-opacity="0.85"/>
<polygon points="64.6,134.2 64.6,144.2 64.2,146.1 63.2,147.9 61.9,149.7 60.5,151.6 59.5,153.4 59.1,155.2 59.1,166.9 59.5,168.7 60.5,170.6 61.9,172.4 63.2,174.2 64.2,176.1 64.6,177.9 64.6,187.9 31.6,187.9 31.6,177.9 32.0,176.1 33.0,174.2 34.4,172.4 35.7,170.6 36.7,168.7 37.1,166.9 37.1,155.2 36.7,153.4 35.7,151.6 34.4,149.7 33.0,147.9 32.0,146.1 31.6,144.2 31.6,134.2" fill="#c66c5a" stroke="#2a201c" stroke-width="2.6" stroke-opacity="0.85"/>
<polygon points="64.6,187.9 64.6,197.9 64.2,199.7 63.2,201.6 61.9,203.4 60.5,205.2 59.5,207.1 59.1,208.9 59.1,220.6 59.5,222.4 60.5,224.2 61.9,226.1 63.2,227.9 64.2,229.7 64.6,231.6 64.6,241.6 31.6,241.6 31.6,231.6 32.0,229.7 33.0,227.9 34.4,226.1 35.7,224.2 36.7,222.4 37.1,220.6 37.1,208.9 36.7,207.1 35.7,205.2 34.4,203.4 33.0,201.6 32.0,199.7 31.6,197.9 31.6,187.9" fill="#a85646" stroke="#2a201c" stroke-width="2.6" stroke-opacity="0.85"/>
<polygon points="64.6,241.6 64.6,251.6 64.2,253.4 63.2,255.2 61.9,257.1 60.5,258.9 59.5,260.7 59.1,262.6 59.1,274.2 59.5,276.1 60.5,277.9 61.9,279.8 63.2,281.6 64.2,283.4 64.6,285.2 64.6,295.2 31.6,295.2 31.6,285.2 32.0,283.4 33.0,281.6 34.4,279.8 35.7,277.9 36.7,276.1 37.1,274.2 37.1,262.6 36.7,260.7 35.7,258.9 34.4,257.1 33.0,255.2 32.0,253.4 31.6,251.6 31.6,241.6" fill="#c66c5a" stroke="#2a201c" stroke-width="2.6" stroke-opacity="0.85"/>
<polygon points="64.6,295.2 64.6,305.2 64.2,307.1 63.2,308.9 61.9,310.8 60.5,312.6 59.5,314.4 59.1,316.2 59.1,327.9 59.5,329.8 60.5,331.6 61.9,333.4 63.2,335.3 64.2,337.1 64.6,338.9 64.6,348.9 31.6,348.9 31.6,338.9 32.0,337.1 33.0,335.3 34.4,333.4 35.7,331.6 36.7,329.8 37.1,327.9 37.1,316.2 36.7,314.4 35.7,312.6 34.4,310.8 33.0,308.9 32.0,307.1 31.6,305.2 31.6,295.2" fill="#c66c5a" stroke="#2a201c" stroke-width="2.6" stroke-opacity="0.85"/>
<polygon points="64.6,348.9 64.6,358.9 64.2,360.8 63.2,362.6 61.9,364.4 60.5,366.3 59.5,368.1 59.1,369.9 59.1,381.6 59.5,383.4 60.5,385.3 61.9,387.1 63.2,388.9 64.2,390.8 64.6,392.6 64.6,402.6 31.6,402.6 31.6,392.6 32.0,390.8 33.0,388.9 34.4,387.1 35.7,385.3 36.7,383.4 37.1,381.6 37.1,369.9 36.7,368.1 35.7,366.3 34.4,364.4 33.0,362.6 32.0,360.8 31.6,358.9 31.6,348.9" fill="#b66050" stroke="#2a201c" stroke-width="2.6" stroke-opacity="0.85"/>
<polygon points="129.2,-26.8 129.2,-16.8 128.8,-14.9 127.8,-13.1 126.4,-11.3 125.1,-9.4 124.1,-7.6 123.7,-5.8 123.7,5.9 124.1,7.7 125.1,9.6 126.4,11.4 127.8,13.2 128.8,15.1 129.2,16.9 129.2,26.9 96.2,26.9 96.2,16.9 96.6,15.1 97.6,13.2 98.9,11.4 100.3,9.6 101.3,7.7 101.7,5.9 101.7,-5.8 101.3,-7.6 100.3,-9.4 98.9,-11.3 97.6,-13.1 96.6,-14.9 96.2,-16.8 96.2,-26.8" fill="#a85646" stroke="#2a201c" stroke-width="2.6" stroke-opacity="0.85"/>
<polygon points="129.2,26.9 129.2,36.9 128.8,38.7 127.8,40.6 126.4,42.4 125.1,44.2 124.1,46.1 123.7,47.9 123.7,59.6 124.1,61.4 125.1,63.2 126.4,65.1 127.8,66.9 128.8,68.7 129.2,70.6 129.2,80.6 96.2,80.6 96.2,70.6 96.6,68.7 97.6,66.9 98.9,65.1 100.3,63.2 101.3,61.4 101.7,59.6 101.7,47.9 101.3,46.1 100.3,44.2 98.9,42.4 97.6,40.6 96.6,38.7 96.2,36.9 96.2,26.9" fill="#c66c5a" stroke="#2a201c" stroke-width="2.6" stroke-opacity="0.85"/>
<polygon points="129.2,80.6 129.2,90.6 128.8,92.4 127.8,94.2 126.4,96.1 125.1,97.9 124.1,99.7 123.7,101.6 123.7,113.2 124.1,115.1 125.1,116.9 126.4,118.7 127.8,120.6 128.8,122.4 129.2,124.2 129.2,134.2 96.2,134.2 96.2,124.2 96.6,122.4 97.6,120.6 98.9,118.7 100.3,116.9 101.3,115.1 101.7,113.2 101.7,101.6 101.3,99.7 100.3,97.9 98.9,96.1 97.6,94.2 96.6,92.4 96.2,90.6 96.2,80.6" fill="#c66c5a" stroke="#2a201c" stroke-width="2.6" stroke-opacity="0.85"/>
<polygon points="129.2,134.2 129.2,144.2 128.8,146.1 127.8,147.9 126.4,149.7 125.1,151.6 124.1,153.4 123.7,155.2 123.7,166.9 124.1,168.7 125.1,170.6 126.4,172.4 127.8,174.2 128.8,176.1 129.2,177.9 129.2,187.9 96.2,187.9 96.2,177.9 96.6,176.1 97.6,174.2 98.9,172.4 100.3,170.6 101.3,168.7 101.7,166.9 101.7,155.2 101.3,153.4 100.3,151.6 98.9,149.7 97.6,147.9 96.6,146.1 96.2,144.2 96.2,134.2" fill="#984a3c" stroke="#2a201c" stroke-width="2.6" stroke-opacity="0.85"/>
<polygon points="129.2,187.9 129.2,197.9 128.8,199.7 127.8,201.6 126.4,203.4 125.1,205.2 124.1,207.1 123.7,208.9 123.7,220.6 124.1,222.4 125.1,224.2 126.4,226.1 127.8,227.9 128.8,229.7 129.2,231.6 129.2,241.6 96.2,241.6 96.2,231.6 96.6,229.7 97.6,227.9 98.9,226.1 100.3,224.2 101.3,222.4 101.7,220.6 101.7,208.9 101.3,207.1 100.3,205.2 98.9,203.4 97.6,201.6 96.6,199.7 96.2,197.9 96.2,187.9" fill="#c66c5a" stroke="#2a201c" stroke-width="2.6" stroke-opacity="0.85"/>
<polygon points="129.2,241.6 129.2,251.6 128.8,253.4 127.8,255.2 126.4,257.1 125.1,258.9 124.1,260.7 123.7,262.6 123.7,274.2 124.1,276.1 125.1,277.9 126.4,279.8 127.8,281.6 128.8,283.4 129.2,285.2 129.2,295.2 96.2,295.2 96.2,285.2 96.6,283.4 97.6,281.6 98.9,279.8 100.3,277.9 101.3,276.1 101.7,274.2 101.7,262.6 101.3,260.7 100.3,258.9 98.9,257.1 97.6,255.2 96.6,253.4 96.2,251.6 96.2,241.6" fill="#b66050" stroke="#2a201c" stroke-width="2.6" stroke-opacity="0.85"/>
<polygon points="129.2,295.2 129.2,305.2 128.8,307.1 127.8,308.9 126.4,310.8 125.1,312.6 124.1,314.4 123.7,316.2 123.7,327.9 124.1,329.8 125.1,331.6 126.4,333.4 127.8,335.3 128.8,337.1 129.2,338.9 129.2,348.9 96.2,348.9 96.2,338.9 96.6,337.1 97.6,335.3 98.9,333.4 100.3,331.6 101.3,329.8 101.7,327.9 101.7,316.2 101.3,314.4 100.3,312.6 98.9,310.8 97.6,308.9 96.6,307.1 96.2,305.2 96.2,295.2" fill="#c66c5a" stroke="#2a201c" stroke-width="2.6" stroke-opacity="0.85"/>
<polygon points="129.2,348.9 129.2,358.9 128.8,360.8 127.8,362.6 126.4,364.4 125.1,366.3 124.1,368.1 123.7,369.9 123.7,381.6 124.1,383.4 125.1,385.3 126.4,387.1 127.8,388.9 128.8,390.8 129.2,392.6 129.2,402.6 96.2,402.6 96.2,392.6 96.6,390.8 97.6,388.9 98.9,387.1 100.3,385.3 101.3,383.4 101.7,381.6 101.7,369.9 101.3,368.1 100.3,366.3 98.9,364.4 97.6,362.6 96.6,360.8 96.2,358.9 96.2,348.9" fill="#a85646" stroke="#2a201c" stroke-width="2.6" stroke-opacity="0.85"/>
<polygon points="193.8,-26.8 193.8,-16.8 193.4,-14.9 192.4,-13.1 191.0,-11.3 189.7,-9.4 188.7,-7.6 188.3,-5.8 188.3,5.9 188.7,7.7 189.7,9.6 191.0,11.4 192.4,13.2 193.4,15.1 193.8,16.9 193.8,26.9 160.8,26.9 160.8,16.9 161.2,15.1 162.2,13.2 163.5,11.4 164.9,9.6 165.9,7.7 166.3,5.9 166.3,-5.8 165.9,-7.6 164.9,-9.4 163.5,-11.3 162.2,-13.1 161.2,-14.9 160.8,-16.8 160.8,-26.8" fill="#c66c5a" stroke="#2a201c" stroke-width="2.6" stroke-opacity="0.85"/>
<polygon points="193.8,26.9 193.8,36.9 193.4,38.7 192.4,40.6 191.0,42.4 189.7,44.2 188.7,46.1 188.3,47.9 188.3,59.6 188.7,61.4 189.7,63.2 191.0,65.1 192.4,66.9 193.4,68.7 193.8,70.6 193.8,80.6 160.8,80.6 160.8,70.6 161.2,68.7 162.2,66.9 163.5,65.1 164.9,63.2 165.9,61.4 166.3,59.6 166.3,47.9 165.9,46.1 164.9,44.2 163.5,42.4 162.2,40.6 161.2,38.7 160.8,36.9 160.8,26.9" fill="#984a3c" stroke="#2a201c" stroke-width="2.6" stroke-opacity="0.85"/>
<polygon points="193.8,80.6 193.8,90.6 193.4,92.4 192.4,94.2 191.0,96.1 189.7,97.9 188.7,99.7 188.3,101.6 188.3,113.2 188.7,115.1 189.7,116.9 191.0,118.7 192.4,120.6 193.4,122.4 193.8,124.2 193.8,134.2 160.8,134.2 160.8,124.2 161.2,122.4 162.2,120.6 163.5,118.7 164.9,116.9 165.9,115.1 166.3,113.2 166.3,101.6 165.9,99.7 164.9,97.9 163.5,96.1 162.2,94.2 161.2,92.4 160.8,90.6 160.8,80.6" fill="#c66c5a" stroke="#2a201c" stroke-width="2.6" stroke-opacity="0.85"/>
<polygon points="193.8,134.2 193.8,144.2 193.4,146.1 192.4,147.9 191.0,149.7 189.7,151.6 188.7,153.4 188.3,155.2 188.3,166.9 188.7,168.7 189.7,170.6 191.0,172.4 192.4,174.2 193.4,176.1 193.8,177.9 193.8,187.9 160.8,187.9 160.8,177.9 161.2,176.1 162.2,174.2 163.5,172.4 164.9,170.6 165.9,168.7 166.3,166.9 166.3,155.2 165.9,153.4 164.9,151.6 163.5,149.7 162.2,147.9 161.2,146.1 160.8,144.2 160.8,134.2" fill="#b66050" stroke="#2a201c" stroke-width="2.6" stroke-opacity="0.85"/>
<polygon points="193.8,187.9 193.8,197.9 193.4,199.7 192.4,201.6 191.0,203.4 189.7,205.2 188.7,207.1 188.3,208.9 188.3,220.6 188.7,222.4 189.7,224.2 191.0,226.1 192.4,227.9 193.4,229.7 193.8,231.6 193.8,241.6 160.8,241.6 160.8,231.6 161.2,229.7 162.2,227.9 163.5,226.1 164.9,224.2 165.9,222.4 166.3,220.6 166.3,208.9 165.9,207.1 164.9,205.2 163.5,203.4 162.2,201.6 161.2,199.7 160.8,197.9 160.8,187.9" fill="#c66c5a" stroke="#2a201c" stroke-width="2.6" stroke-opacity="0.85"/>
<polygon points="193.8,241.6 193.8,251.6 193.4,253.4 192.4,255.2 191.0,257.1 189.7,258.9 188.7,260.7 188.3,262.6 188.3,274.2 188.7,276.1 189.7,277.9 191.0,279.8 192.4,281.6 193.4,283.4 193.8,285.2 193.8,295.2 160.8,295.2 160.8,285.2 161.2,283.4 162.2,281.6 163.5,279.8 164.9,277.9 165.9,276.1 166.3,274.2 166.3,262.6 165.9,260.7 164.9,258.9 163.5,257.1 162.2,255.2 161.2,253.4 160.8,251.6 160.8,241.6" fill="#a85646" stroke="#2a201c" stroke-width="2.6" stroke-opacity="0.85"/>
<polygon points="193.8,295.2 193.8,305.2 193.4,307.1 192.4,308.9 191.0,310.8 189.7,312.6 188.7,314.4 188.3,316.2 188.3,327.9 188.7,329.8 189.7,331.6 191.0,333.4 192.4,335.3 193.4,337.1 193.8,338.9 193.8,348.9 160.8,348.9 160.8,338.9 161.2,337.1 162.2,335.3 163.5,333.4 164.9,331.6 165.9,329.8 166.3,327.9 166.3,316.2 165.9,314.4 164.9,312.6 163.5,310.8 162.2,308.9 161.2,307.1 160.8,305.2 160.8,295.2" fill="#c66c5a" stroke="#2a201c" stroke-width="2.6" stroke-opacity="0.85"/>
<polygon points="193.8,348.9 193.8,358.9 193.4,360.8 192.4,362.6 191.0,364.4 189.7,366.3 188.7,368.1 188.3,369.9 188.3,381.6 188.7,383.4 189.7,385.3 191.0,387.1 192.4,388.9 193.4,390.8 193.8,392.6 193.8,402.6 160.8,402.6 160.8,392.6 161.2,390.8 162.2,388.9 163.5,387.1 164.9,385.3 165.9,383.4 166.3,381.6 166.3,369.9 165.9,368.1 164.9,366.3 163.5,364.4 162.2,362.6 161.2,360.8 160.8,358.9 160.8,348.9" fill="#c66c5a" stroke="#2a201c" stroke-width="2.6" stroke-opacity="0.85"/>
<polygon points="258.4,-26.8 258.4,-16.8 258.0,-14.9 257.0,-13.1 255.6,-11.3 254.3,-9.4 253.3,-7.6 252.9,-5.8 252.9,5.9 253.3,7.7 254.3,9.6 255.6,11.4 257.0,13.2 258.0,15.1 258.4,16.9 258.4,26.9 225.4,26.9 225.4,16.9 225.8,15.1 226.8,13.2 228.1,11.4 229.5,9.6 230.5,7.7 230.9,5.9 230.9,-5.8 230.5,-7.6 229.5,-9.4 228.1,-11.3 226.8,-13.1 225.8,-14.9 225.4,-16.8 225.4,-26.8" fill="#b66050" stroke="#2a201c" stroke-width="2.6" stroke-opacity="0.85"/>
<polygon points="258.4,26.9 258.4,36.9 258.0,38.7 257.0,40.6 255.6,42.4 254.3,44.2 253.3,46.1 252.9,47.9 252.9,59.6 253.3,61.4 254.3,63.2 255.6,65.1 257.0,66.9 258.0,68.7 258.4,70.6 258.4,80.6 225.4,80.6 225.4,70.6 225.8,68.7 226.8,66.9 228.1,65.1 229.5,63.2 230.5,61.4 230.9,59.6 230.9,47.9 230.5,46.1 229.5,44.2 228.1,42.4 226.8,40.6 225.8,38.7 225.4,36.9 225.4,26.9" fill="#c66c5a" stroke="#2a201c" stroke-width="2.6" stroke-opacity="0.85"/>
<polygon points="258.4,80.6 258.4,90.6 258.0,92.4 257.0,94.2 255.6,96.1 254.3,97.9 253.3,99.7 252.9,101.6 252.9,113.2 253.3,115.1 254.3,116.9 255.6,118.7 257.0,120.6 258.0,122.4 258.4,124.2 258.4,134.2 225.4,134.2 225.4,124.2 225.8,122.4 226.8,120.6 228.1,118.7 229.5,116.9 230.5,115.1 230.9,113.2 230.9,101.6 230.5,99.7 229.5,97.9 228.1,96.1 226.8,94.2 225.8,92.4 225.4,90.6 225.4,80.6" fill="#a85646" stroke="#2a201c" stroke-width="2.6" stroke-opacity="0.85"/>
<polygon points="258.4,134.2 258.4,144.2 258.0,146.1 257.0,147.9 255.6,149.7 254.3,151.6 253.3,153.4 252.9,155.2 252.9,166.9 253.3,168.7 254.3,170.6 255.6,172.4 257.0,174.2 258.0,176.1 258.4,177.9 258.4,187.9 225.4,187.9 225.4,177.9 225.8,176.1 226.8,174.2 228.1,172.4 229.5,170.6 230.5,168.7 230.9,166.9 230.9,155.2 230.5,153.4 229.5,151.6 228.1,149.7 226.8,147.9 225.8,146.1 225.4,144.2 225.4,134.2" fill="#c66c5a" stroke="#2a201c" stroke-width="2.6" stroke-opacity="0.85"/>
<polygon points="258.4,187.9 258.4,197.9 258.0,199.7 257.0,201.6 255.6,203.4 254.3,205.2 253.3,207.1 252.9,208.9 252.9,220.6 253.3,222.4 254.3,224.2 255.6,226.1 257.0,227.9 258.0,229.7 258.4,231.6 258.4,241.6 225.4,241.6 225.4,231.6 225.8,229.7 226.8,227.9 228.1,226.1 229.5,224.2 230.5,222.4 230.9,220.6 230.9,208.9 230.5,207.1 229.5,205.2 228.1,203.4 226.8,201.6 225.8,199.7 225.4,197.9 225.4,187.9" fill="#984a3c" stroke="#2a201c" stroke-width="2.6" stroke-opacity="0.85"/>
<polygon points="258.4,241.6 258.4,251.6 258.0,253.4 257.0,255.2 255.6,257.1 254.3,258.9 253.3,260.7 252.9,262.6 252.9,274.2 253.3,276.1 254.3,277.9 255.6,279.8 257.0,281.6 258.0,283.4 258.4,285.2 258.4,295.2 225.4,295.2 225.4,285.2 225.8,283.4 226.8,281.6 228.1,279.8 229.5,277.9 230.5,276.1 230.9,274.2 230.9,262.6 230.5,260.7 229.5,258.9 228.1,257.1 226.8,255.2 225.8,253.4 225.4,251.6 225.4,241.6" fill="#c66c5a" stroke="#2a201c" stroke-width="2.6" stroke-opacity="0.85"/>
<polygon points="258.4,295.2 258.4,305.2 258.0,307.1 257.0,308.9 255.6,310.8 254.3,312.6 253.3,314.4 252.9,316.2 252.9,327.9 253.3,329.8 254.3,331.6 255.6,333.4 257.0,335.3 258.0,337.1 258.4,338.9 258.4,348.9 225.4,348.9 225.4,338.9 225.8,337.1 226.8,335.3 228.1,333.4 229.5,331.6 230.5,329.8 230.9,327.9 230.9,316.2 230.5,314.4 229.5,312.6 228.1,310.8 226.8,308.9 225.8,307.1 225.4,305.2 225.4,295.2" fill="#b66050" stroke="#2a201c" stroke-width="2.6" stroke-opacity="0.85"/>
<polygon points="258.4,348.9 258.4,358.9 258.0,360.8 257.0,362.6 255.6,364.4 254.3,366.3 253.3,368.1 252.9,369.9 252.9,381.6 253.3,383.4 254.3,385.3 255.6,387.1 257.0,388.9 258.0,390.8 258.4,392.6 258.4,402.6 225.4,402.6 225.4,392.6 225.8,390.8 226.8,388.9 228.1,387.1 229.5,385.3 230.5,383.4 230.9,381.6 230.9,369.9 230.5,368.1 229.5,366.3 228.1,364.4 226.8,362.6 225.8,360.8 225.4,358.9 225.4,348.9" fill="#c66c5a" stroke="#2a201c" stroke-width="2.6" stroke-opacity="0.85"/>
<polygon points="323.0,-26.8 323.0,-16.8 322.6,-14.9 321.6,-13.1 320.2,-11.3 318.9,-9.4 317.9,-7.6 317.5,-5.8 317.5,5.9 317.9,7.7 318.9,9.6 320.2,11.4 321.6,13.2 322.6,15.1 323.0,16.9 323.0,26.9 290.0,26.9 290.0,16.9 290.4,15.1 291.4,13.2 292.8,11.4 294.1,9.6 295.1,7.7 295.5,5.9 295.5,-5.8 295.1,-7.6 294.1,-9.4 292.8,-11.3 291.4,-13.1 290.4,-14.9 290.0,-16.8 290.0,-26.8" fill="#c66c5a" stroke="#2a201c" stroke-width="2.6" stroke-opacity="0.85"/>
<polygon points="323.0,26.9 323.0,36.9 322.6,38.7 321.6,40.6 320.2,42.4 318.9,44.2 317.9,46.1 317.5,47.9 317.5,59.6 317.9,61.4 318.9,63.2 320.2,65.1 321.6,66.9 322.6,68.7 323.0,70.6 323.0,80.6 290.0,80.6 290.0,70.6 290.4,68.7 291.4,66.9 292.8,65.1 294.1,63.2 295.1,61.4 295.5,59.6 295.5,47.9 295.1,46.1 294.1,44.2 292.8,42.4 291.4,40.6 290.4,38.7 290.0,36.9 290.0,26.9" fill="#b66050" stroke="#2a201c" stroke-width="2.6" stroke-opacity="0.85"/>
<polygon points="323.0,80.6 323.0,90.6 322.6,92.4 321.6,94.2 320.2,96.1 318.9,97.9 317.9,99.7 317.5,101.6 317.5,113.2 317.9,115.1 318.9,116.9 320.2,118.7 321.6,120.6 322.6,122.4 323.0,124.2 323.0,134.2 290.0,134.2 290.0,124.2 290.4,122.4 291.4,120.6 292.8,118.7 294.1,116.9 295.1,115.1 295.5,113.2 295.5,101.6 295.1,99.7 294.1,97.9 292.8,96.1 291.4,94.2 290.4,92.4 290.0,90.6 290.0,80.6" fill="#c66c5a" stroke="#2a201c" stroke-width="2.6" stroke-opacity="0.85"/>
<polygon points="323.0,134.2 323.0,144.2 322.6,146.1 321.6,147.9 320.2,149.7 318.9,151.6 317.9,153.4 317.5,155.2 317.5,166.9 317.9,168.7 318.9,170.6 320.2,172.4 321.6,174.2 322.6,176.1 323.0,177.9 323.0,187.9 290.0,187.9 290.0,177.9 290.4,176.1 291.4,174.2 292.8,172.4 294.1,170.6 295.1,168.7 295.5,166.9 295.5,155.2 295.1,153.4 294.1,151.6 292.8,149.7 291.4,147.9 290.4,146.1 290.0,144.2 290.0,134.2" fill="#c66c5a" stroke="#2a201c" stroke-width="2.6" stroke-opacity="0.85"/>
<polygon points="323.0,187.9 323.0,197.9 322.6,199.7 321.6,201.6 320.2,203.4 318.9,205.2 317.9,207.1 317.5,208.9 317.5,220.6 317.9,222.4 318.9,224.2 320.2,226.1 321.6,227.9 322.6,229.7 323.0,231.6 323.0,241.6 290.0,241.6 290.0,231.6 290.4,229.7 291.4,227.9 292.8,226.1 294.1,224.2 295.1,222.4 295.5,220.6 295.5,208.9 295.1,207.1 294.1,205.2 292.8,203.4 291.4,201.6 290.4,199.7 290.0,197.9 290.0,187.9" fill="#b66050" stroke="#2a201c" stroke-width="2.6" stroke-opacity="0.85"/>
<polygon points="323.0,241.6 323.0,251.6 322.6,253.4 321.6,255.2 320.2,257.1 318.9,258.9 317.9,260.7 317.5,262.6 317.5,274.2 317.9,276.1 318.9,277.9 320.2,279.8 321.6,281.6 322.6,283.4 323.0,285.2 323.0,295.2 290.0,295.2 290.0,285.2 290.4,283.4 291.4,281.6 292.8,279.8 294.1,277.9 295.1,276.1 295.5,274.2 295.5,262.6 295.1,260.7 294.1,258.9 292.8,257.1 291.4,255.2 290.4,253.4 290.0,251.6 290.0,241.6" fill="#c66c5a" stroke="#2a201c" stroke-width="2.6" stroke-opacity="0.85"/>
<polygon points="323.0,295.2 323.0,305.2 322.6,307.1 321.6,308.9 320.2,310.8 318.9,312.6 317.9,314.4 317.5,316.2 317.5,327.9 317.9,329.8 318.9,331.6 320.2,333.4 321.6,335.3 322.6,337.1 323.0,338.9 323.0,348.9 290.0,348.9 290.0,338.9 290.4,337.1 291.4,335.3 292.8,333.4 294.1,331.6 295.1,329.8 295.5,327.9 295.5,316.2 295.1,314.4 294.1,312.6 292.8,310.8 291.4,308.9 290.4,307.1 290.0,305.2 290.0,295.2" fill="#a85646" stroke="#2a201c" stroke-width="2.6" stroke-opacity="0.85"/>
<polygon points="323.0,348.9 323.0,358.9 322.6,360.8 321.6,362.6 320.2,364.4 318.9,366.3 317.9,368.1 317.5,369.9 317.5,381.6 317.9,383.4 318.9,385.3 320.2,387.1 321.6,388.9 322.6,390.8 323.0,392.6 323.0,402.6 290.0,402.6 290.0,392.6 290.4,390.8 291.4,388.9 292.8,387.1 294.1,385.3 295.1,383.4 295.5,381.6 295.5,369.9 295.1,368.1 294.1,366.3 292.8,364.4 291.4,362.6 290.4,360.8 290.0,358.9 290.0,348.9" fill="#c66c5a" stroke="#2a201c" stroke-width="2.6" stroke-opacity="0.85"/>
<polygon points="387.6,-26.8 387.6,-16.8 387.2,-14.9 386.2,-13.1 384.9,-11.3 383.5,-9.4 382.5,-7.6 382.1,-5.8 382.1,5.9 382.5,7.7 383.5,9.6 384.9,11.4 386.2,13.2 387.2,15.1 387.6,16.9 387.6,26.9 354.6,26.9 354.6,16.9 355.0,15.1 356.0,13.2 357.4,11.4 358.7,9.6 359.7,7.7 360.1,5.9 360.1,-5.8 359.7,-7.6 358.7,-9.4 357.4,-11.3 356.0,-13.1 355.0,-14.9 354.6,-16.8 354.6,-26.8" fill="#c66c5a" stroke="#2a201c" stroke-width="2.6" stroke-opacity="0.85"/>
<polygon points="387.6,26.9 387.6,36.9 387.2,38.7 386.2,40.6 384.9,42.4 383.5,44.2 382.5,46.1 382.1,47.9 382.1,59.6 382.5,61.4 383.5,63.2 384.9,65.1 386.2,66.9 387.2,68.7 387.6,70.6 387.6,80.6 354.6,80.6 354.6,70.6 355.0,68.7 356.0,66.9 357.4,65.1 358.7,63.2 359.7,61.4 360.1,59.6 360.1,47.9 359.7,46.1 358.7,44.2 357.4,42.4 356.0,40.6 355.0,38.7 354.6,36.9 354.6,26.9" fill="#b66050" stroke="#2a201c" stroke-width="2.6" stroke-opacity="0.85"/>
<polygon points="387.6,80.6 387.6,90.6 387.2,92.4 386.2,94.2 384.9,96.1 383.5,97.9 382.5,99.7 382.1,101.6 382.1,113.2 382.5,115.1 383.5,116.9 384.9,118.7 386.2,120.6 387.2,122.4 387.6,124.2 387.6,134.2 354.6,134.2 354.6,124.2 355.0,122.4 356.0,120.6 357.4,118.7 358.7,116.9 359.7,115.1 360.1,113.2 360.1,101.6 359.7,99.7 358.7,97.9 357.4,96.1 356.0,94.2 355.0,92.4 354.6,90.6 354.6,80.6" fill="#984a3c" stroke="#2a201c" stroke-width="2.6" stroke-opacity="0.85"/>
<polygon points="387.6,134.2 387.6,144.2 387.2,146.1 386.2,147.9 384.9,149.7 383.5,151.6 382.5,153.4 382.1,155.2 382.1,166.9 382.5,168.7 383.5,170.6 384.9,172.4 386.2,174.2 387.2,176.1 387.6,177.9 387.6,187.9 354.6,187.9 354.6,177.9 355.0,176.1 356.0,174.2 357.4,172.4 358.7,170.6 359.7,168.7 360.1,166.9 360.1,155.2 359.7,153.4 358.7,151.6 357.4,149.7 356.0,147.9 355.0,146.1 354.6,144.2 354.6,134.2" fill="#c66c5a" stroke="#2a201c" stroke-width="2.6" stroke-opacity="0.85"/>
<polygon points="387.6,187.9 387.6,197.9 387.2,199.7 386.2,201.6 384.9,203.4 383.5,205.2 382.5,207.1 382.1,208.9 382.1,220.6 382.5,222.4 383.5,224.2 384.9,226.1 386.2,227.9 387.2,229.7 387.6,231.6 387.6,241.6 354.6,241.6 354.6,231.6 355.0,229.7 356.0,227.9 357.4,226.1 358.7,224.2 359.7,222.4 360.1,220.6 360.1,208.9 359.7,207.1 358.7,205.2 357.4,203.4 356.0,201.6 355.0,199.7 354.6,197.9 354.6,187.9" fill="#a85646" stroke="#2a201c" stroke-width="2.6" stroke-opacity="0.85"/>
<polygon points="387.6,241.6 387.6,251.6 387.2,253.4 386.2,255.2 384.9,257.1 383.5,258.9 382.5,260.7 382.1,262.6 382.1,274.2 382.5,276.1 383.5,277.9 384.9,279.8 386.2,281.6 387.2,283.4 387.6,285.2 387.6,295.2 354.6,295.2 354.6,285.2 355.0,283.4 356.0,281.6 357.4,279.8 358.7,277.9 359.7,276.1 360.1,274.2 360.1,262.6 359.7,260.7 358.7,258.9 357.4,257.1 356.0,255.2 355.0,253.4 354.6,251.6 354.6,241.6" fill="#c66c5a" stroke="#2a201c" stroke-width="2.6" stroke-opacity="0.85"/>
<polygon points="387.6,295.2 387.6,305.2 387.2,307.1 386.2,308.9 384.9,310.8 383.5,312.6 382.5,314.4 382.1,316.2 382.1,327.9 382.5,329.8 383.5,331.6 384.9,333.4 386.2,335.3 387.2,337.1 387.6,338.9 387.6,348.9 354.6,348.9 354.6,338.9 355.0,337.1 356.0,335.3 357.4,333.4 358.7,331.6 359.7,329.8 360.1,327.9 360.1,316.2 359.7,314.4 358.7,312.6 357.4,310.8 356.0,308.9 355.0,307.1 354.6,305.2 354.6,295.2" fill="#c66c5a" stroke="#2a201c" stroke-width="2.6" stroke-opacity="0.85"/>
<polygon points="387.6,348.9 387.6,358.9 387.2,360.8 386.2,362.6 384.9,364.4 383.5,366.3 382.5,368.1 382.1,369.9 382.1,381.6 382.5,383.4 383.5,385.3 384.9,387.1 386.2,388.9 387.2,390.8 387.6,392.6 387.6,402.6 354.6,402.6 354.6,392.6 355.0,390.8 356.0,388.9 357.4,387.1 358.7,385.3 359.7,383.4 360.1,381.6 360.1,369.9 359.7,368.1 358.7,366.3 357.4,364.4 356.0,362.6 355.0,360.8 354.6,358.9 354.6,348.9" fill="#b66050" stroke="#2a201c" stroke-width="2.6" stroke-opacity="0.85"/>
<ellipse cx="80" cy="150" rx="30" ry="40" fill="#2a2826" opacity="0.45" filter="url(#blur8)"/>
<ellipse cx="200" cy="80" rx="30" ry="30" fill="#2a2826" opacity="0.4" filter="url(#blur8)"/>
<ellipse cx="260" cy="240" rx="25" ry="40" fill="#2a2826" opacity="0.45" filter="url(#blur8)"/>
<ellipse cx="140" cy="280" rx="30" ry="25" fill="#2a2826" opacity="0.4" filter="url(#blur8)"/>
<ellipse cx="40" cy="40" rx="25" ry="25" fill="#2a2826" opacity="0.35" filter="url(#blur8)"/>
<ellipse cx="300" cy="120" rx="20" ry="30" fill="#2a2826" opacity="0.35" filter="url(#blur8)"/>
<ellipse cx="170" cy="190" rx="20" ry="25" fill="#2a2826" opacity="0.35" filter="url(#blur8)"/></g>
</defs></svg>
<!-- title bar -->
<div class="a" style="left:0;top:0;width:1920px;height:23px;background:#fff"></div>
<div class="t" style="left:29px;top:2px;font-size:12px;line-height:15px;letter-spacing:-0.25px;color:#1a1a1a">Adobe Substance 3D Designer</div>
<div class="a" style="left:1801px;top:7px;width:11px;height:1px;background:#222"></div>
<div class="a" style="left:1845px;top:1px;width:11px;height:11px;border:1px solid #222"></div>
<svg style="left:1891px;top:1px" width="12" height="12"><path d="M0.5 0.5L11.5 11.5M11.5 0.5L0.5 11.5" stroke="#222" stroke-width="1.2"/></svg>

<!-- menu -->
<div class="a" style="left:0;top:23px;width:1920px;height:51px;background:#323232"></div>
<div class="t" style="left:10px;top:28px;color:#cfcfcf">File</div>
<div class="t" style="left:48px;top:28px;color:#cfcfcf">Edit</div>
<div class="t" style="left:88px;top:28px;color:#cfcfcf">Tools</div>
<div class="t" style="left:135px;top:28px;color:#cfcfcf">Windows</div>
<div class="t" style="left:204px;top:28px;color:#cfcfcf">Help</div>

<!-- separator -->
<div class="a" style="left:0;top:74px;width:1920px;height:2px;background:#111111"></div><div class="a" style="left:0;top:76px;width:428px;height:1px;background:#222"></div>

<!-- LEFT PANEL -->
<div class="a" style="left:0;top:77px;width:428px;height:30px;background:#1d1d1d"></div>
<div class="a" style="left:120px;top:74.5px;width:200px;height:2.5px;background:#3b7fd6"></div>
<div class="a" style="left:120px;top:77px;width:200px;height:30px;background:#2f2f2f"></div>
<div class="t" style="left:37px;top:86px;color:#c8c8c8">Explorer</div>
<div class="t" style="left:157px;top:86px;letter-spacing:-0.25px;color:#e0e0e0">Basecolor</div>
<div class="a" style="left:0;top:107px;width:428px;height:26px;background:#333333"></div>
<div class="a" style="left:0;top:133px;width:428px;height:391px;background:#1f1f1f"></div>
<div class="a" style="left:51px;top:166px;width:324px;height:324px;background:#0a0a0a"></div>
<svg style="left:52px;top:167px" width="322" height="322" viewBox="0 0 322 322"><defs><clipPath id="c2d"><rect width="322" height="322"/></clipPath></defs><g clip-path="url(#c2d)"><use href="#texg"/><rect width="322" height="322" filter="url(#spk)"/><rect width="322" height="322" fill="#000" opacity="0.08"/></g></svg>
<div class="t" style="left:4px;top:506px;letter-spacing:-0.45px;color:#cdcdcd">2048 x 2048 (RGBA, 16bpc)</div>
<div class="a" style="left:0;top:524px;width:428px;height:26px;background:#333333"></div>
<div class="a" style="left:0;top:550px;width:428px;height:3px;background:#141414"></div>
<div class="a" style="left:0;top:553px;width:428px;height:32px;background:#1d1d1d"></div>
<div class="a" style="left:113px;top:553px;width:257px;height:3px;background:#3b7fd6"></div>
<div class="a" style="left:113px;top:556px;width:257px;height:29px;background:#2f2f2f"></div>
<div class="t" style="left:37px;top:565px;color:#c8c8c8">Library</div>
<div class="t" style="left:150px;top:565px;letter-spacing:-0.2px;color:#e0e0e0">Rounded Cube - OpenGL</div>
<div class="a" style="left:0;top:585px;width:428px;height:23px;background:#333333"></div>
<div class="t" style="left:10px;top:591px;font-size:11px;color:#cfcfcf">Scene</div>
<div class="t" style="left:60px;top:591px;font-size:11px;color:#cfcfcf">Materials</div>
<div class="t" style="left:127px;top:591px;font-size:11px;color:#cfcfcf">Lights</div>
<div class="t" style="left:178px;top:591px;font-size:11px;color:#cfcfcf">Camera</div>
<div class="t" style="left:236px;top:591px;font-size:11px;color:#cfcfcf">Environment</div>
<div class="t" style="left:321px;top:591px;font-size:11px;color:#cfcfcf">Display</div>
<div class="a" style="left:0;top:608px;width:428px;height:375px;background:#1f1f1f"></div>
<div class="a" style="left:0;top:608px;width:29px;height:375px;background:#303030"></div>
<div class="a" style="left:0;top:0;width:322px;height:322px;transform-origin:0 0;transform:matrix3d(0.26327693,-0.53816906,0,-0.00097015405,0.28886768,1.6696132,0,0.0012373774,0,0,1,0,72,700,0,1);overflow:hidden"><svg style="left:0;top:0" width="322" height="322" viewBox="0 0 322 322"><use href="#texl"/><rect width="322" height="322" filter="url(#spk)" opacity="0.35"/></svg><div class="a" style="left:0;top:0;width:322px;height:322px;background:linear-gradient(160deg,rgba(0,0,0,0.12),rgba(0,0,0,0.32))"></div></div>
<div class="a" style="left:0;top:0;width:322px;height:322px;transform-origin:0 0;transform:matrix3d(1.1154007,0.93179115,0,0.0016307091,0.33584268,2.0691131,0,0.0014331804,0,0,1,0,228,766,0,1);overflow:hidden"><svg style="left:0;top:0" width="322" height="322" viewBox="0 0 322 322"><use href="#texl"/><rect width="322" height="322" filter="url(#spk)" opacity="0.35"/></svg><div class="a" style="left:0;top:0;width:322px;height:322px;background:linear-gradient(200deg,rgba(0,0,0,0.08),rgba(0,0,0,0.24))"></div></div>
<div class="a" style="left:0;top:0;width:322px;height:322px;transform-origin:0 0;transform:matrix3d(0.16465267,-0.53513193,0,-0.00090329789,-0.51218154,-0.41156484,0,-0.0007299196,0,0,1,0,220,668,0,1);overflow:hidden"><svg style="left:0;top:0" width="322" height="322" viewBox="0 0 322 322"><use href="#texl"/><rect width="322" height="322" filter="url(#spk)" opacity="0.35"/></svg><div class="a" style="left:0;top:0;width:322px;height:322px;background:linear-gradient(180deg,rgba(20,30,40,0.28),rgba(20,30,40,0.12))"></div></div>
<div class="a" style="left:0;top:984px;width:428px;height:26px;background:#333333"></div>


<!-- dividers -->
<div class="a" style="left:428px;top:75px;width:1px;height:935px;background:#111111"></div>
<div class="a" style="left:1490px;top:75px;width:1px;height:935px;background:#111111"></div>

<!-- GRAPH PANEL -->
<div class="a" style="left:429px;top:75px;width:1061px;height:76px;background:#323232"></div>
<div class="a" style="left:429px;top:75px;width:1061px;height:23px;background:#2c2c2c"></div>
<div class="t" style="left:459px;top:81px;font-weight:bold;letter-spacing:-0.38px;color:#e0e0e0">Substance_graph - GRAPH</div>
<div class="a" style="left:429px;top:151px;width:1061px;height:2px;background:#141414"></div>
<div class="a" style="left:429px;top:153px;width:1061px;height:857px;background-color:#3a3a3a;background-image:linear-gradient(90deg,rgba(0,0,0,0.08) 1px,transparent 1px),linear-gradient(180deg,rgba(0,0,0,0.08) 1px,transparent 1px);background-size:4px 4px,4px 4px"></div>

<svg style="left:0;top:0" width="1920" height="1043">
<defs><clipPath id="gclip"><rect x="430" y="153" width="1058" height="857"/></clipPath></defs><g clip-path="url(#gclip)">
<rect x="582.3" y="430.6" width="45.3" height="23.0" fill="#4f7a2e" opacity="0.9"/>
<rect x="565.9" y="459.1" width="41.6" height="31.7" fill="#4f7a2e" opacity="0.9"/>
<rect x="674.2" y="447.0" width="16.4" height="18.6" fill="#3d6088" opacity="0.9"/>
<rect x="727.8" y="447.0" width="18.6" height="17.5" fill="#3d6088" opacity="0.9"/>
<rect x="692.8" y="483.1" width="39.4" height="19.7" fill="#3d6088" opacity="0.9"/>
<rect x="679.7" y="507.2" width="45.9" height="18.6" fill="#3d6088" opacity="0.9"/>
<rect x="767.2" y="463.4" width="42.7" height="28.4" fill="#3d6088" opacity="0.9"/>
<rect x="541.9" y="550.9" width="105.0" height="24.1" fill="#3d6088" opacity="0.9"/>
<rect x="541.9" y="579.4" width="106.1" height="21.9" fill="#3d6088" opacity="0.9"/>
<rect x="686.3" y="557.5" width="15.3" height="35.0" fill="#3d6088" opacity="0.9"/>
<rect x="555.0" y="524.7" width="19.7" height="18.6" fill="#3d6088" opacity="0.9"/>
<rect x="585.0" y="605.0" width="45.0" height="26.0" fill="#3d6088" opacity="0.9"/>
<rect x="601.0" y="631.0" width="38.0" height="28.0" fill="#3d6088" opacity="0.9"/>
<rect x="575.8" y="665.6" width="38.3" height="15.3" fill="#3d6088" opacity="0.9"/>
<rect x="767.2" y="731.3" width="62.3" height="28.4" fill="#3d6088" opacity="0.9"/>
<rect x="456.6" y="688.6" width="37.2" height="8.8" fill="#7a2a2a" opacity="0.9"/>
<rect x="528.8" y="610.9" width="26.3" height="13.1" fill="#7a2a2a" opacity="0.9"/>
<rect x="576.9" y="711.6" width="21.9" height="10.9" fill="#7a2a2a" opacity="0.9"/>
<rect x="989.1" y="453.0" width="44.8" height="24.1" fill="#3f7a4a" opacity="0.9"/>
<rect x="1309.0" y="563.7" width="74.8" height="33.8" fill="#3d6088" opacity="0.9"/>
<rect x="1339.2" y="653.5" width="63.3" height="23.0" fill="#3d6088" opacity="0.9"/>
<defs><clipPath id="cz1"><rect x="430" y="153" width="1058" height="452"/></clipPath><clipPath id="cz2"><rect x="430" y="605" width="1058" height="405"/></clipPath></defs>
<path d="M576.4,526.9 C576.4,526.9 576.4,415.3 576.4,413.1 C576.5,411.0 578.0,409.2 580.2,409.2 C582.3,409.1 666.6,410.4 668.8,410.5 C670.9,410.6 672.5,412.1 672.7,414.2 C672.9,416.4 673.0,448.5 673.1,450.3 C673.3,452.2 676.4,453.6 676.4,453.6" stroke="#c9c9c9" stroke-width="3.8000000000000003" fill="none" stroke-linejoin="round" stroke-linecap="round" clip-path="url(#cz1)"/>
<path d="M576.4,528.0 L690.6,529.5" stroke="#c9c9c9" stroke-width="3.8000000000000003" fill="none" stroke-linejoin="round" stroke-linecap="round" clip-path="url(#cz1)"/>
<path d="M581.3,443.8 C581.3,443.8 584.2,462.0 585.6,472.2 C587.1,482.4 587.5,492.0 590.0,505.0 C592.5,518.0 598.1,540.0 600.9,553.1 C603.8,566.2 605.0,577.8 607.5,585.9 C610.0,594.0 616.7,605.0 616.7,605.0 C616.7,605.0 610.7,619.5 603.1,626.3 C595.6,633.0 564.8,654.5 548.4,665.6 C532.0,676.7 504.7,693.0 504.7,693.0" stroke="#c9c9c9" stroke-width="3.8000000000000003" fill="none" stroke-linejoin="round" stroke-linecap="round" clip-path="url(#gclip)"/>
<path d="M617.3,449.2 C617.3,449.2 612.6,458.7 611.9,465.6 C611.1,472.5 611.5,494.8 610.8,509.4 C610.1,524.0 608.9,537.2 607.5,553.1 C606.1,569.1 603.1,589.9 602.3,605.0 C601.6,620.1 603.0,628.2 603.1,643.8 C603.2,659.3 603.1,718.1 603.1,718.1" stroke="#c9c9c9" stroke-width="3.8000000000000003" fill="none" stroke-linejoin="round" stroke-linecap="round" clip-path="url(#gclip)"/>
<path d="M565.9,474.4 C565.9,474.4 569.6,487.6 572.5,496.3 C575.4,504.9 579.8,516.7 583.4,526.9 C587.1,537.1 591.1,547.3 594.4,557.5 C597.7,567.7 601.0,579.5 603.1,588.1 C605.3,596.8 605.9,602.2 607.5,610.0 C609.1,617.8 612.5,635.0 612.5,635.0" stroke="#c9c9c9" stroke-width="3.8000000000000003" fill="none" stroke-linejoin="round" stroke-linecap="round" clip-path="url(#gclip)"/>
<path d="M632.7,475.5 C632.7,475.5 621.9,485.5 616.3,491.9 C610.6,498.3 604.6,505.7 598.8,513.8 C592.9,521.8 587.1,531.3 581.3,540.0 C575.4,548.8 569.2,557.5 563.8,566.3 C558.3,575.0 551.5,587.4 548.4,592.5 C545.4,597.6 543.9,600.1 540.6,605.0 C537.2,609.9 530.0,621.3 522.2,630.6 C514.4,640.0 503.2,651.0 493.8,661.3 C484.3,671.5 465.3,691.9 465.3,691.9" stroke="#c9c9c9" stroke-width="3.8000000000000003" fill="none" stroke-linejoin="round" stroke-linecap="round" clip-path="url(#gclip)"/>
<path d="M597.7,485.3 C597.7,485.3 593.1,499.6 592.2,509.4 C591.2,519.2 590.7,536.4 591.1,553.1 C591.5,569.9 593.8,600.0 594.4,610.0 C595.0,620.0 595.8,635.0 595.8,635.0" stroke="#c9c9c9" stroke-width="3.8000000000000003" fill="none" stroke-linejoin="round" stroke-linecap="round" clip-path="url(#gclip)"/>
<path d="M645.8,463.4 C645.8,463.4 642.3,470.2 640.3,472.2 C638.3,474.2 633.8,475.5 633.8,475.5" stroke="#c9c9c9" stroke-width="3.8000000000000003" fill="none" stroke-linejoin="round" stroke-linecap="round" clip-path="url(#cz1)"/>
<path d="M734.4,463.4 C734.4,463.4 733.5,489.9 733.3,491.9 C733.1,493.8 731.1,496.3 731.1,496.3" stroke="#c9c9c9" stroke-width="3.8000000000000003" fill="none" stroke-linejoin="round" stroke-linecap="round" clip-path="url(#cz1)"/>
<path d="M830.6,455.8 C830.6,455.8 810.6,472.0 800.0,483.1 C789.4,494.2 776.3,510.8 767.2,522.5 C758.1,534.2 752.6,542.6 745.3,553.1 C738.0,563.7 729.5,577.8 723.4,585.9 C717.4,594.1 712.3,599.0 706.9,605.0 C701.4,611.0 696.5,614.6 690.6,621.9 C684.7,629.2 666.0,654.4 657.8,665.6 C649.7,676.8 638.1,694.1 638.1,694.1" stroke="#c9c9c9" stroke-width="3.8000000000000003" fill="none" stroke-linejoin="round" stroke-linecap="round" clip-path="url(#gclip)"/>
<path d="M804.4,463.4 C804.4,463.4 790.5,474.7 782.5,483.1 C774.5,491.5 764.3,503.9 756.3,513.8 C748.2,523.6 741.7,532.0 734.4,542.2 C727.1,552.4 718.1,564.5 712.5,575.0 C706.9,585.5 700.9,597.2 700.9,605.0 C700.9,612.8 708.5,614.7 712.5,621.9 C716.5,629.0 724.9,652.9 734.4,665.6 C743.9,678.4 769.4,698.4 769.4,698.4" stroke="#c9c9c9" stroke-width="3.8000000000000003" fill="none" stroke-linejoin="round" stroke-linecap="round" clip-path="url(#gclip)"/>
<path d="M770.5,470.0 C770.5,470.0 745.9,484.2 734.4,491.9 C722.9,499.5 712.5,507.6 701.6,515.9 C690.6,524.3 679.7,533.1 668.8,542.2 C657.8,551.3 646.1,561.5 635.9,570.6 C625.7,579.7 615.5,590.6 607.5,596.9 C599.5,603.2 594.4,604.8 585.6,610.0 C576.9,615.3 544.0,635.0 544.0,635.0" stroke="#c9c9c9" stroke-width="3.8000000000000003" fill="none" stroke-linejoin="round" stroke-linecap="round" clip-path="url(#gclip)"/>
<path d="M721.3,512.7 C721.3,512.7 755.3,506.0 778.1,502.8 C801.0,499.6 859.9,493.4 859.9,493.4" stroke="#c9c9c9" stroke-width="3.8000000000000003" fill="none" stroke-linejoin="round" stroke-linecap="round" clip-path="url(#cz1)"/>
<path d="M697.2,495.2 C697.2,495.2 677.9,510.7 668.8,518.1 C659.6,525.6 650.5,532.7 642.5,540.0 C634.5,547.3 629.0,553.5 620.6,561.9 C612.2,570.3 600.1,582.4 592.2,590.3 C584.3,598.2 579.9,602.6 572.5,610.0 C565.1,617.4 547.5,635.0 547.5,635.0" stroke="#c9c9c9" stroke-width="3.8000000000000003" fill="none" stroke-linejoin="round" stroke-linecap="round" clip-path="url(#gclip)"/>
<path d="M681.9,512.7 C681.9,512.7 665.5,524.9 657.8,531.3 C650.2,537.6 644.0,543.6 635.9,550.9 C627.9,558.2 617.3,568.1 609.7,575.0 C602.0,581.9 590.0,592.5 590.0,592.5" stroke="#c9c9c9" stroke-width="3.8000000000000003" fill="none" stroke-linejoin="round" stroke-linecap="round" clip-path="url(#cz1)"/>
<path d="M778.1,488.6 C778.1,488.6 765.4,502.3 760.6,509.4 C755.9,516.5 753.0,524.0 749.7,531.3 C746.4,538.5 743.8,544.2 740.9,553.1 C738.1,562.1 733.7,578.4 732.2,585.9 C730.7,593.4 732.1,597.5 730.7,605.0 C729.3,612.5 728.3,622.7 723.4,632.8 C718.6,642.9 708.9,654.7 701.6,665.6 C694.3,676.6 686.3,687.5 679.7,698.4 C673.1,709.4 662.2,731.3 662.2,731.3" stroke="#c9c9c9" stroke-width="3.8000000000000003" fill="none" stroke-linejoin="round" stroke-linecap="round" clip-path="url(#gclip)"/>
<path d="M788.6,488.6 C788.6,488.6 774.0,512.5 769.4,522.5 C764.7,532.5 762.2,537.8 760.6,548.8 C759.0,559.7 761.0,589.2 757.4,605.0 C753.7,620.8 744.0,634.4 738.8,643.8 C733.5,653.1 728.5,657.1 723.4,665.6 C718.3,674.2 708.1,695.2 708.1,695.2" stroke="#c9c9c9" stroke-width="3.8000000000000003" fill="none" stroke-linejoin="round" stroke-linecap="round" clip-path="url(#gclip)"/>
<path d="M690.6,529.5 C690.6,529.5 702.3,541.9 708.1,548.8 C714.0,555.6 719.4,562.6 725.6,570.6 C731.8,578.6 743.5,594.0 745.3,596.9 C747.1,599.7 746.7,601.8 747.7,605.0 C748.7,608.2 750.4,622.7 756.3,632.8 C762.1,642.9 782.7,667.9 789.1,676.6 C795.4,685.2 804.4,698.4 804.4,698.4" stroke="#c9c9c9" stroke-width="3.8000000000000003" fill="none" stroke-linejoin="round" stroke-linecap="round" clip-path="url(#gclip)"/>
<path d="M726.7,496.3 C726.7,496.3 734.6,509.4 738.8,518.1 C742.9,526.9 747.5,538.5 751.9,548.8 C756.3,559.0 760.8,570.0 765.0,579.4 C769.2,588.8 772.8,596.1 777.1,605.0 C781.5,613.9 785.3,622.7 791.3,632.8 C797.2,642.9 806.6,654.7 813.1,665.6 C819.7,676.6 830.6,698.4 830.6,698.4" stroke="#c9c9c9" stroke-width="3.8000000000000003" fill="none" stroke-linejoin="round" stroke-linecap="round" clip-path="url(#gclip)"/>
<path d="M645.8,561.9 C645.8,561.9 654.8,569.3 660.0,575.0 C665.2,580.7 675.4,593.9 677.5,596.9 C679.6,599.8 679.9,601.8 681.6,605.0 C683.2,608.2 694.6,631.8 701.6,643.8 C708.5,655.7 715.1,667.6 723.4,676.6 C731.8,685.5 751.9,697.3 751.9,697.3" stroke="#c9c9c9" stroke-width="3.8000000000000003" fill="none" stroke-linejoin="round" stroke-linecap="round" clip-path="url(#gclip)"/>
<path d="M721.3,512.7 C721.3,512.7 728.1,523.6 732.2,531.3 C736.2,538.9 742.4,550.9 747.5,561.9 C752.6,572.8 761.7,593.8 762.8,596.9 C763.9,599.9 762.2,602.0 763.5,605.0 C764.8,608.0 772.0,622.7 778.1,632.8 C784.2,642.9 794.0,654.7 800.0,665.6 C806.0,676.6 814.2,698.4 814.2,698.4" stroke="#c9c9c9" stroke-width="3.8000000000000003" fill="none" stroke-linejoin="round" stroke-linecap="round" clip-path="url(#gclip)"/>
<path d="M695.0,575.0 C695.0,575.0 703.8,587.8 705.9,592.5 C708.1,597.2 706.7,600.3 708.7,605.0 C710.7,609.7 716.5,622.3 723.4,632.8 C730.4,643.3 745.3,665.6 756.3,676.6 C767.2,687.5 789.1,698.4 789.1,698.4" stroke="#c9c9c9" stroke-width="3.8000000000000003" fill="none" stroke-linejoin="round" stroke-linecap="round" clip-path="url(#gclip)"/>
<path d="M697.2,561.9 C697.2,561.9 704.3,569.4 708.1,575.0 C712.0,580.6 718.4,593.0 721.3,596.9 C724.1,600.8 730.3,605.0 730.3,605.0 C730.3,605.0 727.4,615.8 723.4,621.9 C719.5,628.0 698.8,654.4 690.6,665.6 C682.5,676.8 670.9,694.1 670.9,694.1" stroke="#c9c9c9" stroke-width="3.8000000000000003" fill="none" stroke-linejoin="round" stroke-linecap="round" clip-path="url(#gclip)"/>
<path d="M563.8,575.0 L673.1,576.1" stroke="#c9c9c9" stroke-width="3.8000000000000003" fill="none" stroke-linejoin="round" stroke-linecap="round" clip-path="url(#cz1)"/>
<path d="M642.5,562.3 C642.5,562.3 658.9,549.6 668.8,542.2 C678.6,534.8 690.6,526.1 701.6,518.1 C712.5,510.1 723.1,502.1 734.4,494.1 C745.7,486.0 769.4,470.0 769.4,470.0" stroke="#c9c9c9" stroke-width="3.8000000000000003" fill="none" stroke-linejoin="round" stroke-linecap="round" clip-path="url(#cz1)"/>
<path d="M640.3,594.7 C640.3,594.7 657.7,583.4 668.8,575.0 C679.8,566.6 696.1,553.1 712.5,540.0 C728.9,526.9 759.5,501.4 767.2,496.3 C774.9,491.1 789.1,488.6 789.1,488.6" stroke="#c9c9c9" stroke-width="3.8000000000000003" fill="none" stroke-linejoin="round" stroke-linecap="round" clip-path="url(#cz1)"/>
<path d="M621.7,562.3 C621.7,562.3 639.0,553.9 646.9,548.8 C654.7,543.6 660.4,537.4 668.8,531.3 C677.1,525.1 697.2,511.6 697.2,511.6" stroke="#c9c9c9" stroke-width="3.8000000000000003" fill="none" stroke-linejoin="round" stroke-linecap="round" clip-path="url(#cz1)"/>
<path d="M646.9,594.7 C646.9,594.7 659.4,598.4 663.9,605.0 C668.3,611.6 673.4,631.8 679.7,643.8 C686.0,655.7 692.4,667.8 701.6,676.6 C710.7,685.3 734.4,696.3 734.4,696.3" stroke="#c9c9c9" stroke-width="3.8000000000000003" fill="none" stroke-linejoin="round" stroke-linecap="round" clip-path="url(#gclip)"/>
<path d="M546.3,562.3 C546.3,562.3 551.3,556.3 552.8,555.3 C554.3,554.4 557.2,555.3 557.2,555.3" stroke="#c9c9c9" stroke-width="3.8000000000000003" fill="none" stroke-linejoin="round" stroke-linecap="round" clip-path="url(#cz1)"/>
<path d="M546.3,589.2 C546.3,589.2 552.8,583.8 552.8,583.8 C552.8,583.8 556.1,584.8 556.1,584.8" stroke="#c9c9c9" stroke-width="3.8000000000000003" fill="none" stroke-linejoin="round" stroke-linecap="round" clip-path="url(#cz1)"/>
<path d="M560.5,526.9 C560.5,526.9 568.1,526.9 568.1,526.9 C568.1,526.9 565.2,534.9 563.8,540.0 C562.3,545.1 560.0,550.3 559.4,557.5 C558.7,564.7 559.0,598.1 558.0,605.0 C557.1,611.9 554.1,614.8 550.6,620.8 C547.1,626.8 541.1,634.8 535.3,643.8 C529.5,652.7 520.7,666.8 515.6,674.4 C510.6,682.0 502.5,693.0 502.5,693.0" stroke="#c9c9c9" stroke-width="3.8000000000000003" fill="none" stroke-linejoin="round" stroke-linecap="round" clip-path="url(#gclip)"/>
<path d="M581.3,562.3 L642.5,562.3" stroke="#c9c9c9" stroke-width="2.5" fill="none" stroke-linejoin="round" stroke-linecap="round" clip-path="url(#cz1)"/>
<path d="M571.4,589.2 L640.3,594.7" stroke="#c9c9c9" stroke-width="2.5" fill="none" stroke-linejoin="round" stroke-linecap="round" clip-path="url(#cz1)"/>
<path d="M810.9,476.6 C810.9,476.6 800.0,472.2 800.0,472.2 C800.0,472.2 795.6,487.5 795.6,487.5" stroke="#c9c9c9" stroke-width="2" fill="none" stroke-linejoin="round" stroke-linecap="round" clip-path="url(#cz1)"/>
<path d="M493.8,693.0 C493.8,693.0 599.6,694.5 638.1,695.2 C676.6,695.9 702.7,696.6 734.4,697.3 C766.1,698.1 815.8,699.5 828.4,699.5 C841.1,699.6 859.9,697.8 859.9,697.8" stroke="#c9c9c9" stroke-width="3.8000000000000003" fill="none" stroke-linejoin="round" stroke-linecap="round" clip-path="url(#cz2)"/>
<path d="M489.4,694.1 C489.4,694.1 487.9,703.2 487.2,709.4 C486.5,715.5 478.7,788.1 478.4,792.5 C478.1,797.0 480.6,803.4 480.6,803.4 C480.6,803.4 760.9,800.3 765.0,800.2 C769.1,800.0 771.8,798.3 773.8,794.7 C775.7,791.1 785.5,762.3 786.9,759.7 C788.2,757.1 793.4,756.4 793.4,756.4" stroke="#c9c9c9" stroke-width="3.8000000000000003" fill="none" stroke-linejoin="round" stroke-linecap="round" clip-path="url(#cz2)"/>
<path d="M504.7,691.9 C504.7,691.9 562.2,676.9 581.3,674.4 C600.3,671.9 629.4,675.5 629.4,675.5 C629.4,675.5 633.8,691.9 633.8,691.9" stroke="#c9c9c9" stroke-width="3.8000000000000003" fill="none" stroke-linejoin="round" stroke-linecap="round" clip-path="url(#cz2)"/>
<path d="M506.9,694.1 C506.9,694.1 509.3,711.4 511.3,715.9 C513.2,720.5 520.0,724.7 520.0,724.7" stroke="#c9c9c9" stroke-width="3.8000000000000003" fill="none" stroke-linejoin="round" stroke-linecap="round" clip-path="url(#cz2)"/>
<path d="M600.9,718.1 C600.9,718.1 646.3,719.0 662.2,718.1 C678.1,717.3 685.7,714.0 701.6,712.7 C717.4,711.3 765.0,709.4 765.0,709.4 C765.0,709.4 767.2,705.0 767.2,705.0 C767.2,705.0 756.3,702.8 756.3,702.8" stroke="#c9c9c9" stroke-width="3.8000000000000003" fill="none" stroke-linejoin="round" stroke-linecap="round" clip-path="url(#cz2)"/>
<path d="M603.1,722.5 C603.1,722.5 609.6,749.0 611.9,753.1 C614.2,757.2 618.3,758.9 622.8,757.5 C627.3,756.1 653.8,742.9 668.8,735.6 C683.7,728.3 699.8,719.2 712.5,713.8 C725.2,708.3 745.3,702.8 745.3,702.8" stroke="#c9c9c9" stroke-width="3.8000000000000003" fill="none" stroke-linejoin="round" stroke-linecap="round" clip-path="url(#cz2)"/>
<path d="M603.1,718.1 C603.1,718.1 606.2,752.7 607.5,757.5 C608.8,762.3 616.3,766.3 616.3,766.3 C616.3,766.3 660.0,750.2 679.7,742.2 C699.4,734.2 726.6,722.1 734.4,718.1 C742.2,714.1 751.9,705.0 751.9,705.0" stroke="#c9c9c9" stroke-width="3.8000000000000003" fill="none" stroke-linejoin="round" stroke-linecap="round" clip-path="url(#cz2)"/>
<path d="M603.1,731.3 C603.1,731.3 647.3,735.2 657.8,733.4 C668.3,731.6 672.4,722.9 679.7,718.1 C687.0,713.4 701.6,705.0 701.6,705.0" stroke="#c9c9c9" stroke-width="3.8000000000000003" fill="none" stroke-linejoin="round" stroke-linecap="round" clip-path="url(#cz2)"/>
<path d="M763.0,699.0 C763.0,699.0 779.0,706.0 785.0,712.0 C791.0,718.0 799.0,735.0 799.0,735.0" stroke="#c9c9c9" stroke-width="3.8000000000000003" fill="none" stroke-linejoin="round" stroke-linecap="round" clip-path="url(#cz2)"/>
<path d="M622.8,575.0 C622.8,575.0 628.1,590.0 631.6,600.0 C635.1,610.0 640.7,631.0 646.9,643.8 C653.1,656.5 661.5,668.0 668.8,676.6 C676.0,685.1 690.6,695.2 690.6,695.2" stroke="#c9c9c9" stroke-width="3.8000000000000003" fill="none" stroke-linejoin="round" stroke-linecap="round" clip-path="url(#gclip)"/>
<path d="M636.9,575.0 C636.9,575.0 643.0,590.4 646.9,600.0 C650.7,609.6 654.5,621.9 660.0,632.8 C665.5,643.8 671.7,655.2 679.7,665.6 C687.7,676.0 708.1,695.2 708.1,695.2" stroke="#c9c9c9" stroke-width="3.8000000000000003" fill="none" stroke-linejoin="round" stroke-linecap="round" clip-path="url(#gclip)"/>
<path d="M701.6,705.0 C701.6,705.0 712.1,677.7 716.9,665.6 C721.6,653.6 725.6,643.8 730.0,632.8 C734.4,621.9 739.3,609.6 743.1,600.0 C747.0,590.4 753.1,575.0 753.1,575.0" stroke="#c9c9c9" stroke-width="3.8000000000000003" fill="none" stroke-linejoin="round" stroke-linecap="round" clip-path="url(#gclip)"/>
<path d="M622.8,624.1 C622.8,624.1 693.2,627.3 734.4,629.5 C775.6,631.7 870.0,637.2 870.0,637.2" stroke="#c9c9c9" stroke-width="3.8000000000000003" fill="none" stroke-linejoin="round" stroke-linecap="round" clip-path="url(#cz2)"/>
<path d="M555.0,620.8 C555.0,620.8 582.9,619.8 590.0,621.9 C597.1,624.0 598.9,632.1 603.1,635.0 C607.3,637.9 610.4,637.4 615.2,639.4 C619.9,641.4 631.6,647.0 631.6,647.0" stroke="#c9c9c9" stroke-width="2.5" fill="none" stroke-linejoin="round" stroke-linecap="round" clip-path="url(#cz2)"/>
<path d="M590.0,621.9 L622.8,624.1" stroke="#c9c9c9" stroke-width="2.5" fill="none" stroke-linejoin="round" stroke-linecap="round" clip-path="url(#cz2)"/>
<path d="M772.7,740.0 C772.7,740.0 776.6,745.0 780.3,745.5 C784.1,745.9 802.6,744.5 808.8,744.4 C814.9,744.2 821.0,745.0 824.1,744.4 C827.2,743.8 830.6,740.0 830.6,740.0" stroke="#c9c9c9" stroke-width="2.5" fill="none" stroke-linejoin="round" stroke-linecap="round" clip-path="url(#cz2)"/>
<path d="M792.3,756.4 L823.0,754.2" stroke="#c9c9c9" stroke-width="2.5" fill="none" stroke-linejoin="round" stroke-linecap="round" clip-path="url(#cz2)"/>
<path d="M860.0,493.4 C860.0,493.4 980.8,474.3 991.3,472.7 C1001.7,471.1 1017.5,469.4 1017.5,469.4" stroke="#c9c9c9" stroke-width="3.8000000000000003" fill="none" stroke-linejoin="round" stroke-linecap="round" clip-path="url(#gclip)"/>
<path d="M989.5,462.5 C989.5,462.5 842.6,691.4 837.0,700.0 C831.4,708.6 825.2,713.0 821.0,720.0 C816.8,727.0 812.0,742.0 812.0,742.0" stroke="#c9c9c9" stroke-width="3.8000000000000003" fill="none" stroke-linejoin="round" stroke-linecap="round" clip-path="url(#gclip)"/>
<path d="M1017.8,467.8 C1017.8,467.8 849.3,692.8 844.0,700.0 C838.7,707.2 837.0,713.0 834.0,720.0 C831.0,727.0 826.0,742.0 826.0,742.0" stroke="#c9c9c9" stroke-width="3.8000000000000003" fill="none" stroke-linejoin="round" stroke-linecap="round" clip-path="url(#gclip)"/>
<path d="M860.0,636.1 L1280.0,658.0" stroke="#c9c9c9" stroke-width="3.8000000000000003" fill="none" stroke-linejoin="round" stroke-linecap="round" clip-path="url(#gclip)"/>
<path d="M860.0,698.4 L1258.1,643.8" stroke="#c9c9c9" stroke-width="3.8000000000000003" fill="none" stroke-linejoin="round" stroke-linecap="round" clip-path="url(#gclip)"/>
<path d="M1240.0,655.7 C1240.0,655.7 1278.3,656.7 1297.5,657.6 C1316.7,658.4 1340.7,660.0 1355.0,660.7 C1369.4,661.4 1391.0,662.2 1391.0,662.2" stroke="#c9c9c9" stroke-width="3.8000000000000003" fill="none" stroke-linejoin="round" stroke-linecap="round" clip-path="url(#gclip)"/>
<path d="M1258.0,643.5 C1258.0,643.5 1262.2,642.2 1265.2,642.0 C1268.1,641.9 1406.2,636.6 1412.6,636.3 C1418.9,636.0 1428.4,634.8 1428.4,634.8" stroke="#c9c9c9" stroke-width="3.8000000000000003" fill="none" stroke-linejoin="round" stroke-linecap="round" clip-path="url(#gclip)"/>
<path d="M1278.8,623.3 C1278.8,623.3 1273.6,625.5 1271.6,627.7 C1269.7,629.8 1268.3,634.0 1267.3,636.3 C1266.3,638.5 1265.2,642.0 1265.2,642.0" stroke="#c9c9c9" stroke-width="3.8000000000000003" fill="none" stroke-linejoin="round" stroke-linecap="round" clip-path="url(#gclip)"/>
<path d="M1265.2,642.0 C1265.2,642.0 1267.2,654.5 1268.8,659.3 C1270.3,664.1 1272.9,668.8 1274.5,670.8 C1276.1,672.8 1280.3,673.7 1280.3,673.7" stroke="#c9c9c9" stroke-width="3.8000000000000003" fill="none" stroke-linejoin="round" stroke-linecap="round" clip-path="url(#gclip)"/>
<path d="M1279.5,673.0 C1279.5,673.0 1314.8,662.6 1326.3,659.3 C1337.8,656.0 1344.3,652.8 1355.0,651.4 C1365.8,649.9 1391.0,650.7 1391.0,650.7 C1391.0,650.7 1393.6,654.0 1393.9,656.4 C1394.1,658.8 1392.4,665.0 1392.4,665.0" stroke="#c9c9c9" stroke-width="3.8000000000000003" fill="none" stroke-linejoin="round" stroke-linecap="round" clip-path="url(#gclip)"/>
<path d="M1279.5,673.0 C1279.5,673.0 1299.3,668.0 1311.9,665.0 C1324.5,662.0 1338.3,659.5 1355.0,655.0 C1371.8,650.4 1412.6,637.7 1412.6,637.7" stroke="#c9c9c9" stroke-width="3.8000000000000003" fill="none" stroke-linejoin="round" stroke-linecap="round" clip-path="url(#gclip)"/>
<path d="M1280.3,673.0 C1280.3,673.0 1284.6,668.7 1286.0,665.0 C1287.4,661.4 1292.2,645.9 1294.6,636.3 C1297.0,626.7 1298.5,615.9 1300.4,607.5 C1302.3,599.1 1304.6,589.1 1306.1,586.0 C1307.7,582.8 1313.3,580.9 1313.3,580.9" stroke="#c9c9c9" stroke-width="3.8000000000000003" fill="none" stroke-linejoin="round" stroke-linecap="round" clip-path="url(#gclip)"/>
<path d="M1313.3,580.9 L1359.4,583.8" stroke="#c9c9c9" stroke-width="3.8000000000000003" fill="none" stroke-linejoin="round" stroke-linecap="round" clip-path="url(#gclip)"/>
<path d="M1375.2,575.9 C1375.2,575.9 1378.1,586.0 1378.1,586.0 C1378.1,586.0 1373.7,586.0 1373.7,586.0" stroke="#c9c9c9" stroke-width="3.8000000000000003" fill="none" stroke-linejoin="round" stroke-linecap="round" clip-path="url(#gclip)"/>
<path d="M1405.4,656.4 C1405.4,656.4 1414.0,653.5 1414.0,653.5 C1414.0,653.5 1418.1,637.1 1418.3,636.3 C1418.6,635.5 1419.8,634.8 1419.8,634.8" stroke="#c9c9c9" stroke-width="3.8000000000000003" fill="none" stroke-linejoin="round" stroke-linecap="round" clip-path="url(#gclip)"/>
<path d="M1355.0,666.5 C1355.0,666.5 1371.6,666.8 1375.2,666.5 C1378.8,666.1 1380.2,663.6 1383.8,663.6 C1387.4,663.6 1396.7,666.5 1396.7,666.5 C1396.7,666.5 1401.0,660.8 1402.5,659.3 C1404.0,657.8 1406.8,656.4 1406.8,656.4" stroke="#c9c9c9" stroke-width="3.8000000000000003" fill="none" stroke-linejoin="round" stroke-linecap="round" clip-path="url(#gclip)"/>
<path d="M1320.5,573.7 C1320.5,573.7 1338.7,573.4 1347.9,573.7 C1357.0,574.1 1375.2,575.9 1375.2,575.9" stroke="#c9c9c9" stroke-width="3.8000000000000003" fill="none" stroke-linejoin="round" stroke-linecap="round" clip-path="url(#gclip)"/>
<path d="M576.9,474.4 C576.9,474.4 599.6,474.5 603.1,474.4 C606.7,474.3 608.5,474.2 611.9,473.3 C615.3,472.3 630.1,465.3 642.5,463.4 C654.9,461.6 669.8,462.7 686.3,462.3 C702.7,462.0 721.3,461.3 740.9,461.3 C760.6,461.3 785.4,462.5 804.4,462.3 C823.3,462.2 848.6,460.4 854.7,460.2 C860.8,460.0 870.0,460.2 870.0,460.2" stroke="#f3a93a" stroke-width="4.1" fill="none" stroke-linejoin="round" stroke-linecap="round" clip-path="url(#cz1)"/>
<path d="M681.9,450.3 L683.0,461.3" stroke="#f3a93a" stroke-width="3.6" fill="none" stroke-linejoin="round" stroke-linecap="round" clip-path="url(#cz1)"/>
<path d="M593.3,464.5 C593.3,464.5 598.8,467.8 598.8,467.8 C598.8,467.8 598.8,474.4 598.8,474.4" stroke="#f3a93a" stroke-width="3.6" fill="none" stroke-linejoin="round" stroke-linecap="round" clip-path="url(#cz1)"/>
<path d="M835.0,453.6 C835.0,453.6 840.5,456.2 843.8,457.3 C847.0,458.4 854.7,460.2 854.7,460.2" stroke="#f3a93a" stroke-width="3.6" fill="none" stroke-linejoin="round" stroke-linecap="round" clip-path="url(#cz1)"/>
<path d="M736.6,451.4 L804.4,461.3" stroke="#f3a93a" stroke-width="1.3" fill="none" stroke-linejoin="round" stroke-linecap="round" clip-path="url(#cz1)"/>
<path d="M625.0,439.4 C625.0,439.4 633.0,446.3 635.9,450.3 C638.9,454.3 642.5,463.4 642.5,463.4" stroke="#f3a93a" stroke-width="1.3" fill="none" stroke-linejoin="round" stroke-linecap="round" clip-path="url(#cz1)"/>
<path d="M587.8,437.2 C587.8,437.2 595.7,438.0 600.9,438.3 C606.2,438.6 622.8,439.4 622.8,439.4" stroke="#f3a93a" stroke-width="1.5" fill="none" stroke-linejoin="round" stroke-linecap="round" clip-path="url(#cz1)"/>
<path d="M697.2,575.0 C697.2,575.0 677.5,576.1 677.5,576.1 C677.5,576.1 685.9,570.6 688.4,568.4 C691.0,566.3 693.9,562.3 693.9,562.3" stroke="#f3a93a" stroke-width="3.6" fill="none" stroke-linejoin="round" stroke-linecap="round" clip-path="url(#cz1)"/>
<path d="M681.9,575.0 L692.8,583.8" stroke="#f3a93a" stroke-width="3.6" fill="none" stroke-linejoin="round" stroke-linecap="round" clip-path="url(#cz1)"/>
<path d="M681.9,575.0 L692.8,573.9" stroke="#f3a93a" stroke-width="3.6" fill="none" stroke-linejoin="round" stroke-linecap="round" clip-path="url(#cz1)"/>
<path d="M534.2,620.8 C534.2,620.8 528.0,624.4 527.7,628.4 C527.4,632.5 526.6,722.5 526.6,722.5 C526.6,722.5 522.2,724.7 522.2,724.7" stroke="#f3a93a" stroke-width="4.1" fill="none" stroke-linejoin="round" stroke-linecap="round" clip-path="url(#cz2)"/>
<path d="M524.4,725.8 C524.4,725.8 576.0,717.7 581.3,717.0 C586.5,716.4 594.4,717.0 594.4,717.0" stroke="#f3a93a" stroke-width="4.1" fill="none" stroke-linejoin="round" stroke-linecap="round" clip-path="url(#cz2)"/>
<path d="M860.0,460.6 C860.0,460.6 975.5,458.7 991.3,458.4 C1007.0,458.2 1015.6,453.2 1030.6,458.0 C1045.6,462.8 1280.0,551.4 1280.0,551.4" stroke="#f3a93a" stroke-width="4.1" fill="none" stroke-linejoin="round" stroke-linecap="round" clip-path="url(#gclip)"/>
<path d="M1271.6,550.0 L1340.7,573.0" stroke="#f3a93a" stroke-width="4.1" fill="none" stroke-linejoin="round" stroke-linecap="round" clip-path="url(#gclip)"/>
<path d="M1347.9,573.7 C1347.9,573.7 1362.3,569.4 1365.1,568.7 C1367.9,568.0 1372.3,568.0 1372.3,568.0 C1372.3,568.0 1374.2,571.7 1375.2,573.0 C1376.1,574.3 1378.1,575.9 1378.1,575.9" stroke="#f3a93a" stroke-width="3.6" fill="none" stroke-linejoin="round" stroke-linecap="round" clip-path="url(#gclip)"/>
<path d="M1350.7,575.2 C1350.7,575.2 1371.7,576.4 1375.2,576.6 C1378.6,576.8 1381.1,575.2 1383.8,577.3 C1386.5,579.5 1398.2,591.5 1405.4,600.3 C1412.6,609.2 1426.9,630.5 1426.9,630.5" stroke="#f3a93a" stroke-width="4.1" fill="none" stroke-linejoin="round" stroke-linecap="round" clip-path="url(#gclip)"/>
<path d="M1319.8,573.7 C1319.8,573.7 1312.3,578.4 1309.0,583.1 C1305.8,587.8 1298.3,605.0 1294.6,610.4 C1291.0,615.8 1284.5,620.7 1283.1,621.9 C1281.7,623.1 1278.8,623.3 1278.8,623.3" stroke="#f3a93a" stroke-width="4.1" fill="none" stroke-linejoin="round" stroke-linecap="round" clip-path="url(#gclip)"/>
<path d="M1283.1,622.6 L1373.7,586.0" stroke="#f3a93a" stroke-width="4.1" fill="none" stroke-linejoin="round" stroke-linecap="round" clip-path="url(#gclip)"/>
<path d="M1359.4,583.8 L1355.0,591.7" stroke="#f3a93a" stroke-width="3.6" fill="none" stroke-linejoin="round" stroke-linecap="round" clip-path="url(#gclip)"/>
<path d="M1281.7,623.3 L1426.9,632.0" stroke="#f3a93a" stroke-width="4.1" fill="none" stroke-linejoin="round" stroke-linecap="round" clip-path="url(#gclip)"/>
<path d="M1382.4,577.3 C1382.4,577.3 1368.7,620.0 1365.1,630.5 C1361.5,641.0 1356.3,653.0 1355.0,656.4 C1353.8,659.8 1352.4,663.2 1352.2,665.0 C1352.0,666.8 1353.6,669.4 1353.6,669.4" stroke="#f3a93a" stroke-width="4.1" fill="none" stroke-linejoin="round" stroke-linecap="round" clip-path="url(#gclip)"/>
<path d="M1428.4,631.2 C1428.4,631.2 1435.2,626.7 1437.0,624.8 C1438.8,622.9 1439.9,619.0 1439.9,619.0" stroke="#f3a93a" stroke-width="3.6" fill="none" stroke-linejoin="round" stroke-linecap="round" clip-path="url(#gclip)"/>
<rect x="1421" y="602.5" width="32" height="80.5" fill="#7c7c7c"/>
<rect x="583.5" y="432.8" width="6.5" height="6.5" rx="2.2" fill="#b31c26"/>
<rect x="614.1" y="446.0" width="6.5" height="6.5" rx="2.2" fill="#b31c26"/>
<rect x="568.2" y="464.6" width="6.5" height="6.5" rx="2.2" fill="#b31c26"/>
<rect x="594.4" y="482.1" width="6.5" height="6.5" rx="2.2" fill="#b31c26"/>
<rect x="629.4" y="472.2" width="6.5" height="6.5" rx="2.2" fill="#b31c26"/>
<rect x="556.1" y="512.0" width="6.5" height="6.5" rx="2.2" fill="#b31c26"/>
<rect x="557.2" y="523.6" width="6.5" height="6.5" rx="2.2" fill="#b31c26"/>
<rect x="556.1" y="535.7" width="6.5" height="6.5" rx="2.2" fill="#b31c26"/>
<rect x="564.9" y="535.7" width="6.5" height="6.5" rx="2.2" fill="#b31c26"/>
<rect x="693.9" y="491.9" width="6.5" height="6.5" rx="2.2" fill="#b31c26"/>
<rect x="701.6" y="491.9" width="6.5" height="6.5" rx="2.2" fill="#b31c26"/>
<rect x="723.5" y="491.9" width="6.5" height="6.5" rx="2.2" fill="#b31c26"/>
<rect x="678.6" y="509.4" width="6.5" height="6.5" rx="2.2" fill="#b31c26"/>
<rect x="691.8" y="509.4" width="6.5" height="6.5" rx="2.2" fill="#b31c26"/>
<rect x="718.0" y="509.4" width="6.5" height="6.5" rx="2.2" fill="#b31c26"/>
<rect x="706.0" y="519.3" width="6.5" height="6.5" rx="2.2" fill="#b31c26"/>
<rect x="728.9" y="448.2" width="6.5" height="6.5" rx="2.2" fill="#b31c26"/>
<rect x="769.4" y="466.8" width="6.5" height="6.5" rx="2.2" fill="#b31c26"/>
<rect x="777.1" y="463.5" width="6.5" height="6.5" rx="2.2" fill="#b31c26"/>
<rect x="767.2" y="485.3" width="6.5" height="6.5" rx="2.2" fill="#b31c26"/>
<rect x="774.9" y="485.3" width="6.5" height="6.5" rx="2.2" fill="#b31c26"/>
<rect x="543.0" y="559.1" width="6.5" height="6.5" rx="2.2" fill="#b31c26"/>
<rect x="553.9" y="552.1" width="6.5" height="6.5" rx="2.2" fill="#b31c26"/>
<rect x="577.3" y="559.1" width="6.5" height="6.5" rx="2.2" fill="#b31c26"/>
<rect x="586.1" y="559.1" width="6.5" height="6.5" rx="2.2" fill="#b31c26"/>
<rect x="598.1" y="559.1" width="6.5" height="6.5" rx="2.2" fill="#b31c26"/>
<rect x="608.2" y="559.1" width="6.5" height="6.5" rx="2.2" fill="#b31c26"/>
<rect x="618.5" y="559.1" width="6.5" height="6.5" rx="2.2" fill="#b31c26"/>
<rect x="592.9" y="566.3" width="6.5" height="6.5" rx="2.2" fill="#b31c26"/>
<rect x="602.5" y="566.9" width="6.5" height="6.5" rx="2.2" fill="#b31c26"/>
<rect x="611.9" y="566.9" width="6.5" height="6.5" rx="2.2" fill="#b31c26"/>
<rect x="543.0" y="586.0" width="6.5" height="6.5" rx="2.2" fill="#b31c26"/>
<rect x="552.8" y="581.6" width="6.5" height="6.5" rx="2.2" fill="#b31c26"/>
<rect x="568.2" y="586.0" width="6.5" height="6.5" rx="2.2" fill="#b31c26"/>
<rect x="575.8" y="586.0" width="6.5" height="6.5" rx="2.2" fill="#b31c26"/>
<rect x="586.8" y="586.0" width="6.5" height="6.5" rx="2.2" fill="#b31c26"/>
<rect x="601.0" y="586.0" width="6.5" height="6.5" rx="2.2" fill="#b31c26"/>
<rect x="611.9" y="588.2" width="6.5" height="6.5" rx="2.2" fill="#b31c26"/>
<rect x="576.9" y="593.6" width="6.5" height="6.5" rx="2.2" fill="#b31c26"/>
<rect x="592.2" y="593.6" width="6.5" height="6.5" rx="2.2" fill="#b31c26"/>
<rect x="604.3" y="593.6" width="6.5" height="6.5" rx="2.2" fill="#b31c26"/>
<rect x="690.7" y="559.1" width="6.5" height="6.5" rx="2.2" fill="#b31c26"/>
<rect x="689.6" y="570.7" width="6.5" height="6.5" rx="2.2" fill="#b31c26"/>
<rect x="689.6" y="581.6" width="6.5" height="6.5" rx="2.2" fill="#b31c26"/>
<rect x="669.9" y="572.8" width="6.5" height="6.5" rx="2.2" fill="#b31c26"/>
<rect x="598.8" y="435.0" width="6.5" height="6.5" rx="1" fill="#dcdcdc"/>
<rect x="619.6" y="436.1" width="6.5" height="6.5" rx="1" fill="#dcdcdc"/>
<rect x="582.4" y="471.1" width="6.5" height="6.5" rx="1" fill="#dcdcdc"/>
<rect x="599.9" y="471.1" width="6.5" height="6.5" rx="1" fill="#dcdcdc"/>
<rect x="642.5" y="460.2" width="6.5" height="6.5" rx="1" fill="#dcdcdc"/>
<rect x="683.0" y="459.1" width="6.5" height="6.5" rx="1" fill="#dcdcdc"/>
<rect x="738.8" y="458.0" width="6.5" height="6.5" rx="1" fill="#dcdcdc"/>
<rect x="784.7" y="463.5" width="6.5" height="6.5" rx="1" fill="#dcdcdc"/>
<rect x="801.1" y="459.1" width="6.5" height="6.5" rx="1" fill="#dcdcdc"/>
<rect x="796.8" y="468.9" width="6.5" height="6.5" rx="1" fill="#dcdcdc"/>
<rect x="785.4" y="485.3" width="6.5" height="6.5" rx="1" fill="#dcdcdc"/>
<rect x="851.4" y="456.9" width="6.5" height="6.5" rx="1" fill="#dcdcdc"/>
<rect x="567.7" y="559.1" width="6.5" height="6.5" rx="1" fill="#a8d070"/>
<rect x="560.1" y="586.0" width="6.5" height="6.5" rx="1" fill="#a8d070"/>
<rect x="639.3" y="559.1" width="6.5" height="6.5" rx="1" fill="#4f8a90"/>
<rect x="618.5" y="591.4" width="6.5" height="6.5" rx="1" fill="#4f8a90"/>
<rect x="637.1" y="591.4" width="6.5" height="6.5" rx="1" fill="#4f8a90"/>
<rect x="569.3" y="523.6" width="6.5" height="6.5" rx="1" fill="#4f8a90"/>
<rect x="710.3" y="491.9" width="6.5" height="6.5" rx="1" fill="#4f8a90"/>
<rect x="704.9" y="509.4" width="6.5" height="6.5" rx="1" fill="#4f8a90"/>
<rect x="455.5" y="689.7" width="6.5" height="6.5" rx="2.2" fill="#b31c26"/>
<rect x="468.6" y="689.7" width="6.5" height="6.5" rx="2.2" fill="#b31c26"/>
<rect x="477.4" y="689.7" width="6.5" height="6.5" rx="2.2" fill="#b31c26"/>
<rect x="537.5" y="613.2" width="6.5" height="6.5" rx="2.2" fill="#b31c26"/>
<rect x="596.6" y="608.8" width="6.5" height="6.5" rx="2.2" fill="#b31c26"/>
<rect x="608.2" y="608.8" width="6.5" height="6.5" rx="2.2" fill="#b31c26"/>
<rect x="586.8" y="618.6" width="6.5" height="6.5" rx="2.2" fill="#b31c26"/>
<rect x="599.9" y="631.8" width="6.5" height="6.5" rx="2.2" fill="#b31c26"/>
<rect x="601.6" y="641.6" width="6.5" height="6.5" rx="2.2" fill="#b31c26"/>
<rect x="580.2" y="671.1" width="6.5" height="6.5" rx="2.2" fill="#b31c26"/>
<rect x="593.3" y="671.1" width="6.5" height="6.5" rx="2.2" fill="#b31c26"/>
<rect x="606.4" y="671.1" width="6.5" height="6.5" rx="2.2" fill="#b31c26"/>
<rect x="656.3" y="729.1" width="6.5" height="6.5" rx="2.2" fill="#b31c26"/>
<rect x="699.4" y="705.0" width="6.5" height="6.5" rx="2.2" fill="#b31c26"/>
<rect x="825.2" y="696.3" width="6.5" height="6.5" rx="2.2" fill="#b31c26"/>
<rect x="769.4" y="736.8" width="6.5" height="6.5" rx="2.2" fill="#b31c26"/>
<rect x="769.4" y="746.6" width="6.5" height="6.5" rx="2.2" fill="#b31c26"/>
<rect x="784.7" y="735.7" width="6.5" height="6.5" rx="2.2" fill="#b31c26"/>
<rect x="788.0" y="743.3" width="6.5" height="6.5" rx="2.2" fill="#b31c26"/>
<rect x="789.1" y="753.2" width="6.5" height="6.5" rx="2.2" fill="#b31c26"/>
<rect x="800.0" y="752.5" width="6.5" height="6.5" rx="2.2" fill="#b31c26"/>
<rect x="819.7" y="751.0" width="6.5" height="6.5" rx="2.2" fill="#b31c26"/>
<rect x="518.9" y="721.4" width="6.5" height="6.5" rx="2.2" fill="#b31c26"/>
<rect x="578.0" y="713.8" width="6.5" height="6.5" rx="2.2" fill="#b31c26"/>
<rect x="591.1" y="713.8" width="6.5" height="6.5" rx="2.2" fill="#b31c26"/>
<rect x="636.0" y="691.9" width="6.5" height="6.5" rx="1" fill="#dcdcdc"/>
<rect x="655.7" y="691.9" width="6.5" height="6.5" rx="1" fill="#dcdcdc"/>
<rect x="671.0" y="691.9" width="6.5" height="6.5" rx="1" fill="#dcdcdc"/>
<rect x="690.7" y="691.9" width="6.5" height="6.5" rx="1" fill="#dcdcdc"/>
<rect x="706.0" y="691.9" width="6.5" height="6.5" rx="1" fill="#dcdcdc"/>
<rect x="732.2" y="693.7" width="6.5" height="6.5" rx="1" fill="#dcdcdc"/>
<rect x="749.7" y="694.1" width="6.5" height="6.5" rx="1" fill="#dcdcdc"/>
<rect x="767.2" y="695.2" width="6.5" height="6.5" rx="1" fill="#dcdcdc"/>
<rect x="786.9" y="695.6" width="6.5" height="6.5" rx="1" fill="#dcdcdc"/>
<rect x="800.0" y="695.6" width="6.5" height="6.5" rx="1" fill="#dcdcdc"/>
<rect x="811.0" y="695.6" width="6.5" height="6.5" rx="1" fill="#dcdcdc"/>
<rect x="838.3" y="695.6" width="6.5" height="6.5" rx="1" fill="#dcdcdc"/>
<rect x="619.6" y="620.8" width="6.5" height="6.5" rx="1" fill="#dcdcdc"/>
<rect x="611.9" y="636.1" width="6.5" height="6.5" rx="1" fill="#dcdcdc"/>
<rect x="777.1" y="742.2" width="6.5" height="6.5" rx="1" fill="#dcdcdc"/>
<rect x="805.5" y="741.1" width="6.5" height="6.5" rx="1" fill="#dcdcdc"/>
<rect x="820.8" y="741.1" width="6.5" height="6.5" rx="1" fill="#dcdcdc"/>
<rect x="473.0" y="689.7" width="6.5" height="6.5" rx="1" fill="#dcdcdc"/>
<rect x="488.3" y="689.7" width="6.5" height="6.5" rx="1" fill="#a8d070"/>
<rect x="547.4" y="617.5" width="6.5" height="6.5" rx="1" fill="#a8d070"/>
<rect x="809.9" y="751.0" width="6.5" height="6.5" rx="1" fill="#a8d070"/>
<rect x="1254.9" y="640.5" width="6.5" height="6.5" rx="2.2" fill="#b31c26"/>
<rect x="1316.1" y="570.0" width="7.5" height="7.5" rx="2.2" fill="#b31c26"/>
<rect x="1355.6" y="580.0" width="7.5" height="7.5" rx="2.2" fill="#b31c26"/>
<rect x="1370.0" y="582.2" width="7.5" height="7.5" rx="2.2" fill="#b31c26"/>
<rect x="1352.7" y="652.7" width="7.5" height="7.5" rx="2.2" fill="#b31c26"/>
<rect x="1370.0" y="657.0" width="7.5" height="7.5" rx="2.2" fill="#b31c26"/>
<rect x="1358.5" y="664.2" width="7.5" height="7.5" rx="2.2" fill="#b31c26"/>
<rect x="1366.4" y="664.2" width="7.5" height="7.5" rx="2.2" fill="#b31c26"/>
<rect x="1402.3" y="652.7" width="7.5" height="7.5" rx="2.2" fill="#b31c26"/>
<rect x="1275.8" y="669.2" width="7.5" height="7.5" rx="2.2" fill="#b31c26"/>
<rect x="1254.2" y="639.7" width="7.5" height="7.5" rx="2.2" fill="#b31c26"/>
<rect x="1424.6" y="627.5" width="7.5" height="7.5" rx="2.2" fill="#b31c26"/>
<rect x="1344.1" y="570.0" width="7.5" height="7.5" rx="1" fill="#dcdcdc"/>
<rect x="1375.7" y="572.1" width="7.5" height="7.5" rx="1" fill="#dcdcdc"/>
<rect x="1381.5" y="660.6" width="7.5" height="7.5" rx="1" fill="#dcdcdc"/>
<rect x="1393.0" y="662.7" width="7.5" height="7.5" rx="1" fill="#dcdcdc"/>
<rect x="1425.5" y="627" width="8" height="10" rx="2" fill="#b01c24"/>
<circle cx="1278.8" cy="623.3" r="3.5" fill="#9a88e8"/>
<circle cx="1451" cy="604.5" r="6.2" fill="#d8d8d8" stroke="#111" stroke-width="2.4"/>
<circle cx="1446" cy="604.5" r="6.2" fill="#dcdcdc" stroke="#111" stroke-width="2.6"/>
<path d="M1442.5,603.0 L1446.0,605.0 L1449.5,603.0 M1446.0,605.0 V608.5" stroke="#555" stroke-width="1" fill="none"/>
<circle cx="1446" cy="614.4" r="6.2" fill="#dcdcdc" stroke="#111" stroke-width="2.6"/>
<path d="M1442.5,612.9 L1446.0,614.9 L1449.5,612.9 M1446.0,614.9 V618.4" stroke="#555" stroke-width="1" fill="none"/>
<circle cx="1446" cy="624.2" r="6.2" fill="#dcdcdc" stroke="#111" stroke-width="2.6"/>
<path d="M1442.5,622.7 L1446.0,624.7 L1449.5,622.7 M1446.0,624.7 V628.2" stroke="#555" stroke-width="1" fill="none"/>
<circle cx="1446" cy="634.0" r="6.2" fill="#dcdcdc" stroke="#111" stroke-width="2.6"/>
<path d="M1442.5,632.5 L1446.0,634.5 L1449.5,632.5 M1446.0,634.5 V638.0" stroke="#555" stroke-width="1" fill="none"/>
<circle cx="1446" cy="643.9" r="6.2" fill="#dcdcdc" stroke="#111" stroke-width="2.6"/>
<path d="M1442.5,642.4 L1446.0,644.4 L1449.5,642.4 M1446.0,644.4 V647.9" stroke="#555" stroke-width="1" fill="none"/>
<circle cx="1446" cy="653.8" r="6.2" fill="#dcdcdc" stroke="#111" stroke-width="2.6"/>
<path d="M1442.5,652.2 L1446.0,654.2 L1449.5,652.2 M1446.0,654.2 V657.8" stroke="#555" stroke-width="1" fill="none"/>
<circle cx="1446" cy="663.6" r="6.2" fill="#dcdcdc" stroke="#111" stroke-width="2.6"/>
<path d="M1442.5,662.1 L1446.0,664.1 L1449.5,662.1 M1446.0,664.1 V667.6" stroke="#555" stroke-width="1" fill="none"/>
<circle cx="1446" cy="673.5" r="6.2" fill="#dcdcdc" stroke="#111" stroke-width="2.6"/>
<path d="M1442.5,672.0 L1446.0,674.0 L1449.5,672.0 M1446.0,674.0 V677.5" stroke="#555" stroke-width="1" fill="none"/>
</g></svg>
<svg style="left:437px;top:81px" width="16" height="14"><rect x="10" y="0" width="6" height="4" fill="#d4d4d4"/><rect x="10" y="5" width="6" height="4" fill="#d4d4d4"/><rect x="10" y="10" width="6" height="4" fill="#d4d4d4"/><rect x="0" y="4.5" width="5" height="5" fill="#d4d4d4"/><path d="M4 7L10 2M4 7H10M4 7L10 12" stroke="#d4d4d4" stroke-width="1.3"/></svg>
<svg style="left:1394px;top:80px" width="14" height="14"><path d="M8.5 0.8L13.2 5.5L11.8 6.2L9.6 8.4L9.8 11L8.8 12L6.2 9.4L2 13.6L1 13.2L0.6 12.2L4.8 8L2.2 5.4L3.2 4.4L5.8 4.6L8 2.4Z" fill="#d4d4d4"/></svg>
<svg style="left:1421px;top:81px" width="12" height="12"><rect x="0.7" y="0.7" width="10.6" height="10.6" fill="none" stroke="#d4d4d4" stroke-width="1.4"/><rect x="1" y="6" width="5" height="5" fill="#d4d4d4"/></svg>
<svg style="left:1445px;top:80px" width="14" height="13"><path d="M0.7 4V0.7H4M10 0.7H13.3V4M13.3 9V12.3H10M4 12.3H0.7V9" stroke="#d4d4d4" stroke-width="1.4" fill="none"/><rect x="3.5" y="3.5" width="7" height="6" fill="#d4d4d4"/></svg>
<svg style="left:1471px;top:81px" width="11" height="11"><path d="M0.5 0.5L10.5 10.5M10.5 0.5L0.5 10.5" stroke="#d4d4d4" stroke-width="1.3"/></svg>
<div class="a" style="left:599px;top:101px;width:27px;height:22px;background:#4a4a4a;border-radius:3px;"></div>
<div class="a" style="left:628px;top:101px;width:26px;height:22px;background:#4a4a4a;border-radius:3px;"></div>
<div class="a" style="left:824px;top:101px;width:26px;height:22px;background:#4a4a4a;border-radius:3px;"></div>
<svg style="left:436px;top:104px" width="16" height="16"><path d="M0.7 4.5V0.7H4.5M11.5 0.7H15.3V4.5M15.3 11.5V15.3H11.5M4.5 15.3H0.7V11.5" stroke="#d4d4d4" stroke-width="1.4" fill="none"/><rect x="3" y="3" width="10" height="10" fill="#d4d4d4"/></svg>
<div class="t" style="left:465px;top:106px;font-size:10px;color:#d4d4d4">1:1</div><svg style="left:462px;top:103px" width="20" height="18"><path d="M10 0L13 3H7Z M10 18L13 15H7Z M0 9L3 6V12Z M20 9L17 6V12Z" fill="#d4d4d4"/></svg>
<svg style="left:492px;top:105px" width="17" height="14"><path d="M0 3H4L6 0.5H11L13 3H17V14H0Z" fill="#d4d4d4"/><circle cx="8.5" cy="8.3" r="3.6" fill="#323232"/><circle cx="8.5" cy="8.3" r="2" fill="#d4d4d4"/></svg>
<div class="t" style="left:524px;top:102px;font-size:17px;line-height:18px;font-style:italic;font-weight:bold;font-family:'Liberation Serif',serif;color:#d4d4d4">i</div><svg style="left:531px;top:113px" width="8" height="6"><path d="M0.5 0.5L4 4L7.5 0.5" stroke="#d4d4d4" stroke-width="1.2" fill="none"/></svg>
<svg style="left:549px;top:105px" width="14" height="14"><circle cx="5.5" cy="5.5" r="4.5" stroke="#d4d4d4" stroke-width="1.8" fill="none"/><path d="M9 9L13 13" stroke="#d4d4d4" stroke-width="2.2"/></svg>
<svg style="left:573px;top:106px" width="22" height="13"><path d="M0.7 3V0.7H3M7 0.7H9.3V3M9.3 9V11.3H7M3 11.3H0.7V9" stroke="#d4d4d4" stroke-width="1.2" fill="none"/><rect x="2.5" y="2.5" width="5" height="7" fill="#d4d4d4"/><path d="M9 6H15" stroke="#d4d4d4" stroke-width="1.6"/><rect x="15" y="3" width="6" height="6" fill="#9a9a9a"/></svg>
<svg style="left:604px;top:104px" width="16" height="14"><rect x="10" y="0" width="6" height="4" fill="#d4d4d4"/><rect x="10" y="5" width="6" height="4" fill="#d4d4d4"/><rect x="10" y="10" width="6" height="4" fill="#d4d4d4"/><rect x="0" y="4.5" width="5" height="5" fill="#d4d4d4"/><path d="M4 7L10 2M4 7H10M4 7L10 12" stroke="#d4d4d4" stroke-width="1.3"/></svg>
<svg style="left:632px;top:104px" width="16" height="15"><path d="M3 0.7H15.3V13M6 3.5H12.5V13" stroke="#d4d4d4" stroke-width="1.4" fill="none"/><rect x="0" y="6" width="10" height="9" fill="#d4d4d4"/></svg>
<svg style="left:658px;top:107px" width="20" height="14"><path d="M3 5H16" stroke="#f0b400" stroke-width="2"/><circle cx="3.5" cy="5" r="3" fill="#f0b400"/><circle cx="16" cy="5" r="3" fill="#f0b400"/><path d="M13 10L15.5 12.5L18 10" stroke="#9a9aa0" stroke-width="1.2" fill="none"/></svg>
<svg style="left:688px;top:103px" width="18" height="18"><circle cx="2.8" cy="2.8" r="2.5" fill="#d4d4d4"/><circle cx="14.8" cy="14.8" r="2.5" fill="#d4d4d4"/><path d="M2.8 2.8H8V14.8H14.8" stroke="#d4d4d4" stroke-width="1.8" fill="none"/></svg>
<svg style="left:716px;top:103px" width="18" height="18"><circle cx="7.5" cy="10" r="6.3" stroke="#d4d4d4" stroke-width="1.6" fill="none"/><path d="M5.5 1H9.5M7.5 1V4M7.5 7V10H10" stroke="#d4d4d4" stroke-width="1.4" fill="none"/><path d="M12 13L14.5 15.5L17 13" stroke="#9a9aa0" stroke-width="1.2" fill="none"/></svg>
<svg style="left:744px;top:104px" width="18" height="17"><path d="M12.5 0.5A4 4 0 0 0 9.5 6L1.5 13.5A1.4 1.4 0 0 0 3.5 15.5L11 8A4 4 0 0 0 16 4.5L13.5 5L12 3.5Z" fill="#d4d4d4"/><path d="M12 12L14.5 14.5L17 12" stroke="#9a9aa0" stroke-width="1.2" fill="none"/></svg>
<svg style="left:773px;top:104px" width="16" height="16"><rect x="0.7" y="0.7" width="14.6" height="14.6" stroke="#d4d4d4" stroke-width="1.4" fill="none"/><path d="M0.7 3H15.3" stroke="#d4d4d4" stroke-width="1.4"/><circle cx="8" cy="9" r="3.8" fill="#d4d4d4"/></svg>
<svg style="left:801px;top:103px" width="18" height="18"><path d="M7 0V6M4 6H10L13 14H1Z" stroke="#d4d4d4" stroke-width="1.6" fill="#d4d4d4"/><path d="M13 13L15.5 15.5L18 13" stroke="#9a9aa0" stroke-width="1.2" fill="none"/></svg>
<svg style="left:828px;top:103px" width="18" height="17"><path d="M4 0V17M14 0V17M0 4H18M0 13H18" stroke="#d4d4d4" stroke-width="1.2" stroke-dasharray="2 1.2"/></svg>
<div class="a" style="left:440px;top:126px;width:2px;height:25px;background:#1f1f1f;border-radius:0px;"></div>
<div class="a" style="left:446px;top:126px;width:24px;height:25px;background:#6e3c62;border-radius:0px;"></div>
<div class="a" style="left:471px;top:126px;width:24px;height:25px;background:#cfcfcf;border-radius:0px;"></div>
<div class="a" style="left:496px;top:126px;width:24px;height:25px;background:#8e8870;border-radius:0px;"></div>
<div class="a" style="left:521px;top:126px;width:24px;height:25px;background:#4a3f35;border-radius:0px;"></div>
<div class="a" style="left:546px;top:126px;width:24px;height:25px;background:#5e8a24;border-radius:0px;"></div>
<div class="a" style="left:571px;top:126px;width:24px;height:25px;background:#6f6444;border-radius:0px;"></div>
<div class="a" style="left:596px;top:126px;width:24px;height:25px;background:#2f6c78;border-radius:0px;"></div>
<div class="a" style="left:621px;top:126px;width:24px;height:25px;background:#a9c866;border-radius:0px;"></div>
<div class="a" style="left:646px;top:126px;width:24px;height:25px;background:#7b6aa6;border-radius:0px;"></div>
<div class="a" style="left:671px;top:126px;width:24px;height:25px;background:#323232;border-radius:0px;"></div>
<div class="a" style="left:696px;top:126px;width:24px;height:25px;background:#2a4420;border-radius:0px;"></div>
<div class="a" style="left:721px;top:126px;width:24px;height:25px;background:#4a7a30;border-radius:0px;"></div>
<div class="a" style="left:746px;top:126px;width:24px;height:25px;background:#8e8e8e;border-radius:0px;"></div>
<div class="a" style="left:771px;top:126px;width:24px;height:25px;background:#6f8e60;border-radius:0px;"></div>
<div class="a" style="left:796px;top:126px;width:24px;height:25px;background:#82b078;border-radius:0px;"></div>
<div class="a" style="left:821px;top:126px;width:24px;height:25px;background:#7a7af0;border-radius:0px;"></div>
<div class="a" style="left:846px;top:126px;width:24px;height:25px;background:#0e0e0e;border-radius:0px;"></div>
<div class="a" style="left:871px;top:126px;width:24px;height:25px;background:#8e6e86;border-radius:0px;"></div>
<div class="a" style="left:896px;top:126px;width:24px;height:25px;background:#d4b060;border-radius:0px;"></div>
<div class="a" style="left:921px;top:126px;width:24px;height:25px;background:#a68aa0;border-radius:0px;"></div>
<div class="a" style="left:946px;top:126px;width:24px;height:25px;background:#5a70a8;border-radius:0px;"></div>
<div class="a" style="left:971px;top:126px;width:24px;height:25px;background:#a8404a;border-radius:0px;"></div>
<div class="a" style="left:996px;top:126px;width:24px;height:25px;background:#111111;border-radius:0px;"></div>
<div class="a" style="left:1021px;top:126px;width:24px;height:25px;background:#4e8e88;border-radius:0px;"></div>
<div class="a" style="left:1046px;top:126px;width:24px;height:25px;background:#a8a4b4;border-radius:0px;"></div>
<div class="a" style="left:1071px;top:126px;width:24px;height:25px;background:#a8a4b4;border-radius:0px;"></div>
<div class="a" style="left:1096px;top:126px;width:24px;height:25px;background:#a8a4b4;border-radius:0px;"></div>
<div class="a" style="left:1121px;top:126px;width:24px;height:25px;background:#9e9ab0;border-radius:0px;"></div>
<svg style="left:449px;top:130px" width="18" height="17"><rect x="0.7" y="0.7" width="16.6" height="13.6" stroke="#f0c0e0" stroke-width="1.3" fill="none"/><path d="M3 12L6 8L8 10L11 6L15 12Z" fill="#f0c0e0"/><circle cx="4.5" cy="4.5" r="1.3" fill="#f0c0e0"/></svg>
<svg style="left:475px;top:129px" width="18" height="19"><rect x="0.7" y="0.7" width="11" height="11" stroke="#ffffff" stroke-width="1.2" fill="none"/><rect x="6" y="7" width="11" height="11" fill="#ffffff"/></svg>
<svg style="left:502px;top:130px" width="12" height="17"><path d="M6 0C3 5 1 8 1 11A5 5 0 0 0 11 11C11 8 9 5 6 0Z" fill="#e8e6dc"/></svg>
<svg style="left:523px;top:130px" width="20" height="16"><path d="M0 3C6 3 8 13 14 13M0 13C6 13 8 3 14 3" stroke="#d8d0c0" stroke-width="1.5" fill="none"/><path d="M14 0L19 3L14 6Z M14 10L19 13L14 16Z" fill="#d8d0c0"/></svg>
<svg style="left:548px;top:128px" width="20" height="20"><path d="M1 0V19H20" stroke="#c0e070" stroke-width="1.3" fill="none"/><path d="M2 18C8 17 12 10 18 2" stroke="#c0e070" stroke-width="1.3" fill="none"/></svg>
<svg style="left:573px;top:128px" width="20" height="20"><path d="M7 6C4 10 2 12 2 14A5 5 0 0 0 12 14C12 12 10 10 7 6Z" fill="#d8d4c4"/><path d="M11 9L18 2M13 2H18V7" stroke="#d8d4c4" stroke-width="1.8" fill="none"/></svg>
<svg style="left:599px;top:128px" width="19" height="19"><rect x="0.7" y="3" width="15" height="15" stroke="#a0e0f0" stroke-width="1.2" fill="none"/><path d="M3 8L7 10L6 14M9 5L10 9L14 11M4 16L8 13" stroke="#a0e0f0" stroke-width="1" fill="none"/><path d="M11 7L18 0M13 0H18V5" stroke="#a0e0f0" stroke-width="1.6" fill="none"/></svg>
<svg style="left:624px;top:128px" width="19" height="19"><path d="M2 17L17 2M12 2H17V7" stroke="#f4ffe0" stroke-width="1.6" fill="none"/><path d="M5 18L18 5" stroke="#f4ffe0" stroke-width="1" stroke-dasharray="2 2"/><rect x="0" y="14" width="5" height="5" fill="#f4ffe0"/></svg>
<svg style="left:649px;top:129px" width="18" height="18"><circle cx="9" cy="9" r="7" stroke="#9a8ad0" stroke-width="1.6" fill="none"/></svg>
<svg style="left:675px;top:129px" width="17" height="17"><rect x="0" y="0" width="5" height="5" fill="#f0f0f0"/><rect x="6" y="0" width="5" height="5" fill="#f0f0f0"/><rect x="12" y="0" width="5" height="5" fill="#f0f0f0"/><rect x="0" y="6" width="5" height="5" fill="#f0f0f0"/><rect x="6" y="6" width="11" height="11" fill="#f0f0f0"/><rect x="0" y="12" width="5" height="5" fill="#f0f0f0"/></svg>
<div class="a" style="left:699px;top:136px;width:17px;height:12px;background:linear-gradient(90deg,#f0f0f0,#2a4420)"></div><svg style="left:708px;top:127px" width="10" height="9"><path d="M5 0V6M2 3.5L5 7L8 3.5" stroke="#f0f0f0" stroke-width="1.6" fill="none"/></svg>
<div class="a" style="left:724px;top:137px;width:16px;height:11px;background:linear-gradient(90deg,#f0f0f0,#4a7a30)"></div><svg style="left:722px;top:127px" width="20" height="12"><circle cx="3.5" cy="3.5" r="3" fill="#d0f0b0"/><circle cx="16" cy="3.5" r="2.5" fill="none" stroke="#d0f0b0" stroke-width="1.2"/></svg>
<svg style="left:748px;top:133px" width="20" height="10"><circle cx="4" cy="5" r="3.8" fill="#f0a040"/><circle cx="16" cy="5" r="3.5" fill="#b8b8b8"/><path d="M7 5H13" stroke="#d0d0d0" stroke-width="1.2"/></svg>
<svg style="left:776px;top:131px" width="15" height="15"><circle cx="7.5" cy="7.5" r="6" fill="none" stroke="#d8e8d0" stroke-width="1.6"/><path d="M3 10L11 3" stroke="#d8e8d0" stroke-width="3"/></svg>
<svg style="left:799px;top:130px" width="19" height="17"><path d="M0 16H19M1 13L5 9L8 11L11 2L14 10L17 13H1Z" fill="#f0f8f0"/></svg>
<svg style="left:825px;top:130px" width="17" height="17"><circle cx="8.5" cy="8.5" r="6.5" fill="none" stroke="url(#cw)" stroke-width="3.5"/><defs><linearGradient id="cw" x1="0" x2="1" y1="0" y2="1"><stop offset="0" stop-color="#ff40c0"/><stop offset="0.5" stop-color="#6080ff"/><stop offset="1" stop-color="#40e0e0"/></linearGradient></defs></svg>
<div class="t" style="left:855px;top:138px;font-size:10px;line-height:10px;color:#f0f0f0">01</div><div class="a" style="left:849px;top:129px;width:14px;height:10px;background:repeating-linear-gradient(45deg,#555 0 2px,transparent 2px 4px)"></div>
<svg style="left:874px;top:131px" width="18" height="14"><path d="M1 13C3 3 15 3 17 13" stroke="#f0e0f0" stroke-width="1.3" fill="none"/><circle cx="3" cy="4" r="1.8" fill="#f0e0f0"/><circle cx="15" cy="4" r="1.8" fill="#f0e0f0"/><path d="M3 4H15" stroke="#f0e0f0" stroke-width="1"/></svg>
<svg style="left:899px;top:129px" width="19" height="18"><path d="M8 1V17H1Z" fill="#f8f4e0"/><path d="M10 1V17H17Z" stroke="#f8f4e0" stroke-width="1.3" fill="none"/></svg>
<div class="t" style="left:925px;top:129px;font-size:17px;line-height:18px;color:#f4f0f4">A</div>
<svg style="left:949px;top:129px" width="18" height="18"><rect x="2" y="2" width="14" height="14" stroke="#b8d0ff" stroke-width="1.4" stroke-dasharray="2 1.5" fill="none"/><circle cx="2" cy="2" r="1.8" fill="#b8d0ff"/><circle cx="16" cy="16" r="1.8" fill="#b8d0ff"/><circle cx="2" cy="16" r="1.8" fill="#b8d0ff"/></svg>
<svg style="left:974px;top:129px" width="18" height="18"><path d="M2 8L9 1L16 8L9 15Z" stroke="#f8e0e0" stroke-width="1.5" fill="none"/><path d="M4 10L9 15L14 10Z" fill="#f8e0e0"/><path d="M15 12C14 14 14 16 15.5 16C17 16 17 14 15 12Z" fill="#f8e0e0"/></svg>
<div class="t" style="left:1006px;top:138px;font-size:10px;line-height:10px;color:#f0f0f0">01</div><svg style="left:1000px;top:129px" width="12" height="10"><path d="M1 2C1 6 5 6 5 2C5 -1 1 -1 1 2M5 5H10V9" stroke="#f0f0f0" stroke-width="1" fill="none"/></svg>
<svg style="left:1025px;top:130px" width="17" height="17"><rect x="0.7" y="0.7" width="15.6" height="15.6" stroke="#c8f0e8" stroke-width="1.2" fill="none"/><path d="M3 4L7 6L6 10L10 11L13 8M4 13L8 12M11 3L10 6" stroke="#c8f0e8" stroke-width="0.9" fill="none"/></svg>
<svg style="left:1049px;top:129px" width="20" height="19"><rect x="2" y="1" width="14" height="16" stroke="#f4f4f8" stroke-width="1.2" fill="none"/><circle cx="16" cy="9" r="2.6" fill="#f4f4f8"/><defs><linearGradient id="gg"><stop offset="0" stop-color="#f8f8f8"/><stop offset="1" stop-color="#a8a4b4"/></linearGradient></defs></svg>
<svg style="left:1074px;top:129px" width="20" height="19"><rect x="2" y="1" width="14" height="16" stroke="#f4f4f8" stroke-width="1.2" fill="url(#gg)"/><circle cx="16" cy="9" r="2.6" fill="#f4f4f8"/><defs><linearGradient id="gg"><stop offset="0" stop-color="#f8f8f8"/><stop offset="1" stop-color="#a8a4b4"/></linearGradient></defs></svg>
<svg style="left:1099px;top:129px" width="20" height="19"><rect x="2" y="1" width="14" height="16" stroke="#f4f4f8" stroke-width="1.2" fill="none"/><circle cx="16" cy="9" r="2.6" fill="#f4f4f8"/><defs><linearGradient id="gg"><stop offset="0" stop-color="#f8f8f8"/><stop offset="1" stop-color="#a8a4b4"/></linearGradient></defs></svg>
<svg style="left:1124px;top:129px" width="20" height="19"><rect x="2" y="1" width="14" height="16" stroke="#f4f4f8" stroke-width="1.2" fill="none"/><circle cx="2" cy="9" r="2.6" fill="#f4f4f8"/><defs><linearGradient id="gg"><stop offset="0" stop-color="#f8f8f8"/><stop offset="1" stop-color="#a8a4b4"/></linearGradient></defs></svg>
<svg style="left:1153px;top:129px" width="15" height="15"><path d="M1 1H14V11H7L4 14V11H1Z" fill="#c8c8c8"/></svg>
<svg style="left:1175px;top:133px" width="21" height="9"><path d="M0 4.5H5M15 4.5H21" stroke="#d0d0d0" stroke-width="2"/><circle cx="10" cy="4.5" r="4" fill="#d0d0d0"/></svg>
<svg style="left:1203px;top:130px" width="14" height="14"><rect x="0" y="0" width="14" height="14" fill="#d0d0d0"/><path d="M3 7L10 3M3 7L10 11M3 7H10" stroke="#323232" stroke-width="1.3"/><rect x="9" y="1.5" width="3" height="3" fill="#323232"/><rect x="9" y="9.5" width="3" height="3" fill="#323232"/></svg>
<svg style="left:1231px;top:129px" width="10" height="17"><path d="M5 0C2 3 2 6 3 9H7C8 6 8 3 5 0Z M1 9H9V10.5H1Z M5 10V17" stroke="#d0d0d0" stroke-width="1.2" fill="#d0d0d0"/></svg>
<div class="a" style="left:1254px;top:127px;width:1px;height:24px;background:#202020;border-radius:0px;"></div>
<div class="a" style="left:1257px;top:127px;width:1px;height:24px;background:#202020;border-radius:0px;"></div>
<div class="t" style="left:1264px;top:132px;font-size:11px;color:#cfcfcf">Parent Size:</div>
<svg style="left:1397px;top:134px" width="10" height="9"><path d="M0.8 0.8L4 4.5L0.8 8.2M5.3 0.8L8.5 4.5L5.3 8.2" stroke="#cfcfcf" stroke-width="1.3" fill="none"/></svg>
<div class="a" style="left:1415px;top:127px;width:1px;height:24px;background:#202020;border-radius:0px;"></div>
<div class="a" style="left:1418px;top:127px;width:1px;height:24px;background:#202020;border-radius:0px;"></div>
<svg style="left:1427px;top:132px" width="13" height="13"><rect x="0" y="0" width="13" height="13" rx="2" fill="#cfcfcf"/><path d="M3 6.5L5.5 9L10 3.5" stroke="#333" stroke-width="1.6" fill="none"/></svg>
<div class="t" style="left:1445px;top:132px;font-size:11px;color:#cfcfcf">Stack</div>
<svg style="left:1477px;top:134px" width="10" height="9"><path d="M0.8 0.8L4 4.5L0.8 8.2M5.3 0.8L8.5 4.5L5.3 8.2" stroke="#cfcfcf" stroke-width="1.3" fill="none"/></svg>
<!-- RIGHT PANEL -->
<div class="a" style="left:1491px;top:75px;width:429px;height:935px;background:#333333"></div>
<div class="a" style="left:1491px;top:75px;width:429px;height:24px;background:#2c2c2c"></div>
<div class="t" style="left:1521px;top:81px;font-weight:bold;font-size:12px;letter-spacing:-0.55px;color:#e4e4e4">ho03_newst.sbs - PROPERTIES</div>
<div class="a" style="left:1909px;top:99px;width:11px;height:911px;background:#2c2c2c"></div>
<div class="a" style="left:1492px;top:99px;width:417px;height:24px;background:#474747"></div>
<div class="t" style="left:1520px;top:105px;font-weight:bold;font-size:12px;letter-spacing:-0.2px;color:#e8e8e8">INFORMATION</div>
<div class="t" style="left:1508px;top:130px;font-weight:bold;font-size:12px;letter-spacing:-0.4px;color:#dedede">Location</div>
<div class="t" style="left:1508px;top:150px;font-style:italic;font-size:12px;letter-spacing:-0.15px;color:#bdbdbd">G:/substance desinger/h03/ho03_newst.sbs</div>
<div class="a" style="left:1492px;top:172px;width:417px;height:2px;background:#262626"></div>
<div class="a" style="left:1492px;top:174px;width:417px;height:23px;background:#474747"></div>
<div class="t" style="left:1520px;top:180px;font-weight:bold;font-size:12px;letter-spacing:-0.5px;color:#e8e8e8">ATTRIBUTES</div>
<div class="t" style="left:1508px;top:204px;font-weight:bold;font-size:12px;letter-spacing:-0.2px;color:#dedede">Description</div>
<div class="a" style="left:1509px;top:222px;width:397px;height:92px;background:#262626;border:1px solid #3a3a3a;border-radius:2px"></div>
<div class="a" style="left:1492px;top:325px;width:417px;height:23px;background:#474747"></div>
<div class="t" style="left:1520px;top:331px;font-weight:bold;font-size:12px;letter-spacing:-0.45px;color:#e8e8e8">METADATA</div>
<svg style="left:1501px;top:105px" width="12" height="10"><path d="M1.5 2.5L6 7L10.5 2.5" stroke="#cfcfcf" stroke-width="1.3" fill="none"/></svg>
<svg style="left:1501px;top:181px" width="12" height="10"><path d="M1.5 2.5L6 7L10.5 2.5" stroke="#cfcfcf" stroke-width="1.3" fill="none"/></svg>
<svg style="left:1501px;top:332px" width="12" height="10"><path d="M1.5 2.5L6 7L10.5 2.5" stroke="#5e5e5e" stroke-width="1.3" fill="none"/></svg>
<svg style="left:1891px;top:331px" width="11" height="11"><circle cx="5.5" cy="5.5" r="4.8" fill="#d8d8d8"/><path d="M5.5 2.8V8.2M2.8 5.5H8.2" stroke="#474747" stroke-width="1.4"/></svg>


<!-- status bar -->
<div class="a" style="left:0;top:1010px;width:1920px;height:1px;background:#111111"></div>
<div class="a" style="left:0;top:1011px;width:1920px;height:29px;background:#333333"></div>
<div class="t" style="left:1570px;top:1020px;font-size:11px;color:#d0d0d0">Substance Engine: Direct3D 11&nbsp; Memory: 9%</div>
<div class="t" style="left:1821px;top:1020px;font-size:11px;color:#d0d0d0">Version: 14.1.2</div>
<div class="a" style="left:0;top:1040px;width:1920px;height:3px;background:#1c1c1c"></div>
<div class="a" style="left:8px;top:1px;width:15px;height:14px;background:#0f2a0a;border-radius:2px"></div><div class="t" style="left:9px;top:2px;font-size:9px;line-height:11px;font-weight:bold;color:#8ee04a">Ds</div>
<svg style="left:6px;top:51px" width="17" height="18"><rect x="10" y="0" width="6" height="4" fill="#d4d4d4"/><rect x="10" y="6" width="6" height="4" fill="#d4d4d4"/><rect x="0" y="3.5" width="5" height="5" fill="#d4d4d4"/><path d="M4 6L10 2M4 6H10" stroke="#d4d4d4" stroke-width="1.3"/><path d="M13 11V17.5M9.8 14.2H16.2" stroke="#d4d4d4" stroke-width="2"/></svg>
<svg style="left:33px;top:51px" width="18" height="18"><circle cx="8" cy="8" r="7.5" fill="#d4d4d4"/><path d="M3 4C6 6 5 9 8 10M10 2C9 5 12 6 13 9" stroke="#323232" stroke-width="1.2" fill="none"/><circle cx="13.5" cy="13.5" r="4.5" fill="#323232"/><path d="M13.5 10.5V16.5M10.5 13.5H16.5" stroke="#d4d4d4" stroke-width="2"/></svg>
<svg style="left:62px;top:52px" width="18" height="15"><path d="M0 1H6L8 3H15V6H4L0 14Z" fill="#d4d4d4"/><path d="M4 7H18L14 15H0Z" fill="#d4d4d4"/></svg>
<svg style="left:91px;top:51px" width="17" height="18"><path d="M0 3H3V15H14V18H0Z" fill="#d4d4d4"/><rect x="4" y="0" width="13" height="14" fill="#d4d4d4"/><rect x="7" y="1.5" width="7" height="4" fill="#323232"/></svg>
<svg style="left:121px;top:52px" width="16" height="16"><path d="M3.5 5A6 6 0 1 1 3 10" stroke="#d4d4d4" stroke-width="2" fill="none"/><path d="M0 1V7H6Z" fill="#d4d4d4"/></svg>
<svg style="left:145px;top:57px" width="8" height="6"><path d="M0.5 0.5L4 4L7.5 0.5" stroke="#8a8a8a" stroke-width="1.2" fill="none"/></svg>
<svg style="left:162px;top:52px" width="16" height="16"><path d="M12.5 5A6 6 0 1 0 13 10" stroke="#5a5a5a" stroke-width="2" fill="none"/><path d="M16 1V7H10Z" fill="#5a5a5a"/></svg>
<svg style="left:185px;top:57px" width="8" height="6"><path d="M0.5 0.5L4 4L7.5 0.5" stroke="#5a5a5a" stroke-width="1.2" fill="none"/></svg>
<svg style="left:8px;top:84px" width="13" height="14"><rect x="0" y="0" width="6" height="3.5" fill="#d4d4d4"/><path d="M2 3V12H6M2 7H6" stroke="#d4d4d4" stroke-width="1.3" fill="none"/><rect x="5" y="5.5" width="8" height="3.5" fill="#d4d4d4"/><rect x="5" y="10.5" width="8" height="3.5" fill="#d4d4d4"/></svg>
<svg style="left:97px;top:86px" width="11" height="11"><path d="M0.5 0.5L10.5 10.5M10.5 0.5L0.5 10.5" stroke="#c8c8c8" stroke-width="1.3"/></svg>
<svg style="left:127px;top:84px" width="14" height="14"><rect x="0" y="0" width="14" height="14" fill="#d4d4d4"/><rect x="1.5" y="1.5" width="5.5" height="5.5" fill="#323232"/><rect x="7" y="7" width="5.5" height="5.5" fill="#323232"/></svg>
<svg style="left:224px;top:83px" width="14" height="14"><path d="M8.5 0.8L13.2 5.5L11.8 6.2L9.6 8.4L9.8 11L8.8 12L6.2 9.4L2 13.6L1 13.2L0.6 12.2L4.8 8L2.2 5.4L3.2 4.4L5.8 4.6L8 2.4Z" fill="#d4d4d4"/></svg>
<svg style="left:249px;top:85px" width="12" height="12"><rect x="0.7" y="0.7" width="10.6" height="10.6" fill="none" stroke="#d4d4d4" stroke-width="1.4"/><rect x="1" y="6" width="5" height="5" fill="#d4d4d4"/></svg>
<svg style="left:272px;top:84px" width="14" height="13"><path d="M0.7 4V0.7H4M10 0.7H13.3V4M13.3 9V12.3H10M4 12.3H0.7V9" stroke="#d4d4d4" stroke-width="1.4" fill="none"/><rect x="3.5" y="3.5" width="7" height="6" fill="#d4d4d4"/></svg>
<svg style="left:298px;top:86px" width="11" height="11"><path d="M0.5 0.5L10.5 10.5M10.5 0.5L0.5 10.5" stroke="#d4d4d4" stroke-width="1.3"/></svg>
<svg style="left:6px;top:112px" width="17" height="17"><rect x="0.7" y="0.7" width="11" height="11" stroke="#d4d4d4" stroke-width="1.3" fill="none"/><rect x="4.5" y="4.5" width="12" height="12" fill="#323232"/><path d="M4.5 16.5V13H16.5V16.5Z" fill="#d4d4d4"/><rect x="13" y="4.5" width="3.5" height="9" fill="#d4d4d4"/></svg>
<svg style="left:35px;top:112px" width="16" height="16"><path d="M0 0H13L16 3V16H0Z" fill="#d4d4d4"/><rect x="3" y="0" width="9" height="5" fill="#323232"/><rect x="8" y="1" width="2" height="3" fill="#d4d4d4"/><circle cx="2.5" cy="13.5" r="1" fill="#323232"/></svg>
<svg style="left:65px;top:112px" width="14" height="16"><path d="M0 0H7V3H3V13H0Z" fill="#d4d4d4"/><path d="M4 4H10L14 8V16H4Z" fill="#d4d4d4"/></svg>
<svg style="left:94px;top:112px" width="18" height="17"><rect x="0.7" y="0.7" width="15" height="15" stroke="#d4d4d4" stroke-width="1.3" fill="none"/><path d="M0.7 3H15.7" stroke="#d4d4d4" stroke-width="1.3"/><circle cx="7" cy="9" r="4" fill="#d4d4d4"/><path d="M10 13L12 15L17 10" stroke="#d4d4d4" stroke-width="1.4" fill="none"/></svg>
<div class="t" style="left:122px;top:113px;font-size:13px;color:#5e5e5e">UV</div>
<svg style="left:144px;top:117px" width="8" height="6"><path d="M0.5 0.5L4 4L7.5 0.5" stroke="#5e5e5e" stroke-width="1.2" fill="none"/></svg>
<div class="t" style="left:162px;top:110px;font-size:18px;line-height:20px;font-style:italic;font-weight:bold;font-family:'Liberation Serif',serif;color:#d4d4d4">i</div>
<svg style="left:188px;top:111px" width="17" height="17"><path d="M1 0V16M4 4V16M7 7V16M10 9V16M13 11V16M0 16.3H17" stroke="#d4d4d4" stroke-width="1.8"/></svg>
<div class="a" style="left:2px;top:527px;width:8px;height:20px;background:repeating-linear-gradient(90deg,#1c1c1c 0 1px,#3a3a3a 1px 2px)"></div>
<svg style="left:19px;top:528px" width="22" height="18"><path d="M8 12L0 15.5L8 18L16 15.5Z" fill="#3a8ee0"/><path d="M8 8L0 11.5L8 15L16 11.5Z" fill="#36c040"/><path d="M8 3L0 6.5L8 10L16 6.5Z" fill="#e06060"/><path d="M16 12L18.5 14.5L21 12" stroke="#a0a0a0" stroke-width="1.2" fill="none"/></svg>
<div class="a" style="left:44px;top:529px;width:16px;height:16px;background:#000000;border-radius:0px;"></div>
<div class="a" style="left:67px;top:529px;width:16px;height:16px;background:repeating-linear-gradient(90deg,#6a6a6a 0 3px,#555 3px 4px)"></div>
<div class="a" style="left:89px;top:525px;width:27px;height:24px;background:#484848;border-radius:3px;"></div>
<svg style="left:94px;top:529px" width="17" height="16"><rect x="0.7" y="0.7" width="15.6" height="11" stroke="#d4d4d4" stroke-width="1.3" fill="#323232"/><circle cx="8.5" cy="4.5" r="2.5" fill="#e04040"/><circle cx="6.5" cy="7.5" r="2.5" fill="#3070e0"/><circle cx="10.5" cy="7.5" r="2.5" fill="#30c040"/><path d="M5 14.5H12" stroke="#d4d4d4" stroke-width="1.5"/></svg>
<svg style="left:191px;top:530px" width="14" height="14"><path d="M0 0H4V4H0Z M5 0H9V4H5Z M10 0H14V4H10Z M0 5H4V9H0Z M5 5H9V9H5Z M10 5H14V9H10Z M0 10H4V14H0Z M5 10H9V14H5Z M10 10H14V14H10Z" fill="#d4d4d4"/></svg>
<svg style="left:218px;top:529px" width="18" height="17"><circle cx="6.5" cy="1.8" r="1.8" fill="#d4d4d4"/><path d="M0 4.5H13M6.5 4.5V16M4.5 8V16M8.5 8V16" stroke="#d4d4d4" stroke-width="1.6"/><rect x="11" y="11" width="6" height="6" fill="#d4d4d4"/><rect x="12.5" y="12.5" width="3" height="3" fill="#323232"/></svg>
<svg style="left:244px;top:531px" width="13" height="13"><rect x="1" y="1" width="11" height="11" fill="#d4d4d4"/></svg>
<svg style="left:262px;top:530px" width="14" height="15"><path d="M7 0L9 2.5H5Z M7 15L9 12.5H5Z M0 7.5L2.5 5.5V9.5Z M14 7.5L11.5 5.5V9.5Z" fill="#8a8a8a"/><rect x="4.5" y="4.5" width="5" height="6" stroke="#8a8a8a" stroke-width="1" fill="none"/></svg>
<div class="a" style="left:283px;top:527px;width:1px;height:20px;background:#222;border-radius:0px;"></div>
<svg style="left:293px;top:533px" width="9" height="9"><circle cx="4.5" cy="4.5" r="3.5" fill="#d4d4d4"/><path d="M2.8 4.5H6.2" stroke="#323232" stroke-width="1.2"/></svg>
<div class="a" style="left:307px;top:528px;width:72px;height:18px;background:#1c1c1c;border:1px solid #4a4a4a;border-radius:2px"></div>
<div class="t" style="left:337px;top:531px;font-size:11px;color:#e0e0e0">15.75%</div>
<svg style="left:384px;top:533px" width="9" height="9"><circle cx="4.5" cy="4.5" r="3.5" fill="#d4d4d4"/><path d="M2.8 4.5H6.2M4.5 2.8V6.2" stroke="#323232" stroke-width="1.2"/></svg>
<div class="a" style="left:402px;top:527px;width:1px;height:20px;background:#222;border-radius:0px;"></div>
<div class="a" style="left:407px;top:526px;width:18px;height:23px;background:#4a4a4a;border-radius:3px;"></div>
<svg style="left:411px;top:531px" width="10" height="13"><path d="M2.5 6V3.5A2.5 2.5 0 0 1 7.5 3.5V6" stroke="#d4d4d4" stroke-width="1.6" fill="none"/><rect x="1" y="6" width="8" height="7" fill="#d4d4d4"/></svg>
<svg style="left:6px;top:563px" width="19" height="15"><path d="M0 1H6L8 3H15V6H4L0 14Z" fill="#d4d4d4"/><path d="M4 7H19L15 15H0Z" fill="#d4d4d4"/></svg>
<svg style="left:90px;top:565px" width="11" height="11"><path d="M0.5 0.5L10.5 10.5M10.5 0.5L0.5 10.5" stroke="#c8c8c8" stroke-width="1.3"/></svg>
<svg style="left:120px;top:562px" width="15" height="16"><path d="M7.5 0L15 3.5V12L7.5 16L0 12V3.5Z" fill="#d4d4d4"/><path d="M0 3.5L7.5 7.5L15 3.5M7.5 7.5V16" stroke="#323232" stroke-width="1.2" fill="none"/></svg>
<svg style="left:300px;top:565px" width="12" height="12"><rect x="0.7" y="0.7" width="10.6" height="10.6" fill="none" stroke="#d4d4d4" stroke-width="1.4"/><rect x="1" y="6" width="5" height="5" fill="#d4d4d4"/></svg>
<svg style="left:323px;top:564px" width="14" height="13"><path d="M0.7 4V0.7H4M10 0.7H13.3V4M13.3 9V12.3H10M4 12.3H0.7V9" stroke="#d4d4d4" stroke-width="1.4" fill="none"/><rect x="3.5" y="3.5" width="7" height="6" fill="#d4d4d4"/></svg>
<svg style="left:348px;top:565px" width="11" height="11"><path d="M0.5 0.5L10.5 10.5M10.5 0.5L0.5 10.5" stroke="#d4d4d4" stroke-width="1.3"/></svg>
<svg style="left:414px;top:593px" width="10" height="9"><path d="M0.8 0.8L4 4.5L0.8 8.2M5.3 0.8L8.5 4.5L5.3 8.2" stroke="#cfcfcf" stroke-width="1.3" fill="none"/></svg>
<div class="a" style="left:2px;top:614px;width:25px;height:4px;background:repeating-linear-gradient(180deg,#1c1c1c 0 1px,#3a3a3a 1px 2px)"></div>
<div class="a" style="left:1px;top:625px;width:27px;height:23px;background:#4a4a4a;border-radius:3px;"></div>
<svg style="left:6px;top:632px" width="18" height="10"><rect x="0" y="0" width="12" height="10" fill="#d4d4d4"/><path d="M13 5L17 1.5V8.5Z" fill="#d4d4d4"/></svg>
<svg style="left:8px;top:654px" width="12" height="16"><circle cx="6" cy="6" r="5.5" fill="#d4d4d4"/><rect x="3.5" y="11" width="5" height="3" fill="#d4d4d4"/><rect x="4.5" y="14.5" width="3" height="1.5" fill="#d4d4d4"/></svg>
<svg style="left:6px;top:679px" width="17" height="16"><path d="M0 5V15H16V8L11 12L8 9L3 13V5Z" fill="#d4d4d4"/><circle cx="9" cy="5" r="1.5" fill="#d4d4d4"/><path d="M9 0V2M5 2L7 4M13 2L11 4M14 5H16" stroke="#d4d4d4" stroke-width="1.2"/></svg>
<div class="a" style="left:1px;top:700px;width:27px;height:22px;background:#4a4a4a;border-radius:3px;"></div>
<svg style="left:6px;top:704px" width="17" height="15"><rect x="0" y="0" width="17" height="12" fill="#d4d4d4"/><circle cx="8.5" cy="6" r="3" stroke="#4a4a4a" stroke-width="1.6" fill="none"/><path d="M5 14H12" stroke="#d4d4d4" stroke-width="1.5"/></svg>
<div class="a" style="left:2px;top:733px;width:25px;height:4px;background:repeating-linear-gradient(180deg,#1c1c1c 0 1px,#3a3a3a 1px 2px)"></div>
<svg style="left:6px;top:745px" width="16" height="16"><rect x="0.7" y="0.7" width="14.6" height="14.6" stroke="#d4d4d4" stroke-width="1.3" fill="none"/><path d="M0.7 0.7L15.3 15.3M15.3 0.7L0.7 15.3M8 0.7V15.3M0.7 8H15.3" stroke="#d4d4d4" stroke-width="0.9"/></svg>
<svg style="left:6px;top:772px" width="16" height="15"><path d="M6 10V1M6 10L15 12M6 10L0 14" stroke="#d4d4d4" stroke-width="1.3"/><path d="M6 0L8 3H4Z M15 12L12 10V14Z" fill="#d4d4d4"/></svg>
<div class="a" style="left:1px;top:795px;width:27px;height:22px;background:#4a4a4a;border-radius:3px;"></div>
<svg style="left:6px;top:797px" width="17" height="18"><path d="M8.5 0.7L16 4.5V13.5L8.5 17.3L1 13.5V4.5Z M1 4.5L8.5 8.5L16 4.5M8.5 8.5V17.3" stroke="#d4d4d4" stroke-width="1.3" fill="none"/></svg>
<svg style="left:6px;top:822px" width="17" height="18"><path d="M8.5 0.7L16 4.5V13.5L8.5 17.3L1 13.5V4.5Z M1 4.5L8.5 8.5L16 4.5M8.5 8.5V17.3" stroke="#d4d4d4" stroke-width="1.3" fill="none"/><circle cx="8.5" cy="0.9" r="1.5" fill="#d4d4d4"/><circle cx="1" cy="4.5" r="1.5" fill="#d4d4d4"/><circle cx="16" cy="4.5" r="1.5" fill="#d4d4d4"/><circle cx="1" cy="13.5" r="1.5" fill="#d4d4d4"/><circle cx="16" cy="13.5" r="1.5" fill="#d4d4d4"/><circle cx="8.5" cy="17" r="1.5" fill="#d4d4d4"/></svg>
<svg style="left:6px;top:851px" width="16" height="11"><path d="M8 0.7L15.3 5.5L8 10.3L0.7 5.5Z M4.5 3L11.5 8M11.5 3L4.5 8" stroke="#d4d4d4" stroke-width="1.2" fill="none"/></svg>
<svg style="left:7px;top:874px" width="16" height="16"><path d="M8 8L15 1M8 8L1 6M8 8L10 15" stroke="#d4d4d4" stroke-width="1.4"/><circle cx="8" cy="8" r="1.8" fill="#d4d4d4"/></svg>
<svg style="left:7px;top:897px" width="15" height="16"><path d="M0 7H3V16H0Z M4 3H7V16H4Z M8 0H11V16H8Z M12 6H15V16H12Z" fill="#d4d4d4"/></svg>
<div class="a" style="left:2px;top:925px;width:25px;height:4px;background:repeating-linear-gradient(180deg,#1c1c1c 0 1px,#3a3a3a 1px 2px)"></div>
<svg style="left:8px;top:965px" width="12" height="15"><rect x="0" y="0" width="5" height="3" fill="#d4d4d4"/><path d="M2 3V12H5M2 7H5" stroke="#d4d4d4" stroke-width="1.2" fill="none"/><rect x="5" y="5" width="7" height="3.5" fill="#d4d4d4"/><rect x="5" y="10.5" width="7" height="3.5" fill="#d4d4d4"/></svg>
<div class="a" style="left:2px;top:986px;width:12px;height:22px;background:repeating-linear-gradient(90deg,#1c1c1c 0 1px,#3a3a3a 1px 2px)"></div>
<svg style="left:19px;top:988px" width="22" height="18"><path d="M8 12L0 15.5L8 18L16 15.5Z" fill="#3a8ee0"/><path d="M8 8L0 11.5L8 15L16 11.5Z" fill="#36c040"/><path d="M8 3L0 6.5L8 10L16 6.5Z" fill="#e06060"/><path d="M16 12L18.5 14.5L21 12" stroke="#a0a0a0" stroke-width="1.2" fill="none"/></svg>
<div class="a" style="left:43px;top:988px;width:129px;height:18px;background:#262626;border:1px solid #3e3e3e;border-radius:3px"></div>
<div class="t" style="left:48px;top:991px;letter-spacing:-0.35px;color:#d8d8d8">sRGB (default)</div>
<svg style="left:157px;top:995px" width="11" height="7"><path d="M0.8 0.8L5.5 5.5L10.2 0.8" stroke="#cfcfcf" stroke-width="1.4" fill="none"/></svg>
<svg style="left:1826px;top:80px" width="14" height="14"><path d="M8.5 0.8L13.2 5.5L11.8 6.2L9.6 8.4L9.8 11L8.8 12L6.2 9.4L2 13.6L1 13.2L0.6 12.2L4.8 8L2.2 5.4L3.2 4.4L5.8 4.6L8 2.4Z" fill="#d4d4d4"/></svg>
<svg style="left:1852px;top:81px" width="12" height="12"><rect x="0.7" y="0.7" width="10.6" height="10.6" fill="none" stroke="#d4d4d4" stroke-width="1.4"/><rect x="1" y="6" width="5" height="5" fill="#d4d4d4"/></svg>
<svg style="left:1876px;top:80px" width="14" height="13"><path d="M0.7 4V0.7H4M10 0.7H13.3V4M13.3 9V12.3H10M4 12.3H0.7V9" stroke="#d4d4d4" stroke-width="1.4" fill="none"/><rect x="3.5" y="3.5" width="7" height="6" fill="#d4d4d4"/></svg>
<svg style="left:1902px;top:81px" width="11" height="11"><path d="M0.5 0.5L10.5 10.5M10.5 0.5L0.5 10.5" stroke="#d4d4d4" stroke-width="1.3"/></svg>
<svg style="left:1503px;top:80px" width="12" height="15"><path d="M0.5 0.5H7.5L11.5 4.5V14.5H0.5Z" fill="#d6d6d6"/><path d="M7.5 0.5V4.5H11.5" fill="#9a9a9a"/><path d="M2 7H10M2 9.5H10M2 12H10" stroke="#2c2c2c" stroke-width="1.1"/></svg>
<div class="a" style="left:1436px;top:1017px;width:128px;height:18px;background:#4a4a4a;border-radius:0px;"></div>
<div class="a" style="left:48px;top:1040px;width:287px;height:3px;background:#f2f2f2;border-radius:0px;"></div>
<div class="a" style="left:877px;top:1040px;width:48px;height:3px;background:#6a6a6a;border-radius:0px;"></div>
<div class="a" style="left:925px;top:1040px;width:148px;height:3px;background:#3a3a36;border-radius:0px;"></div>
<div class="a" style="left:1073px;top:1040px;width:48px;height:3px;background:#c47a3a;border-radius:0px;"></div>
</body></html>
